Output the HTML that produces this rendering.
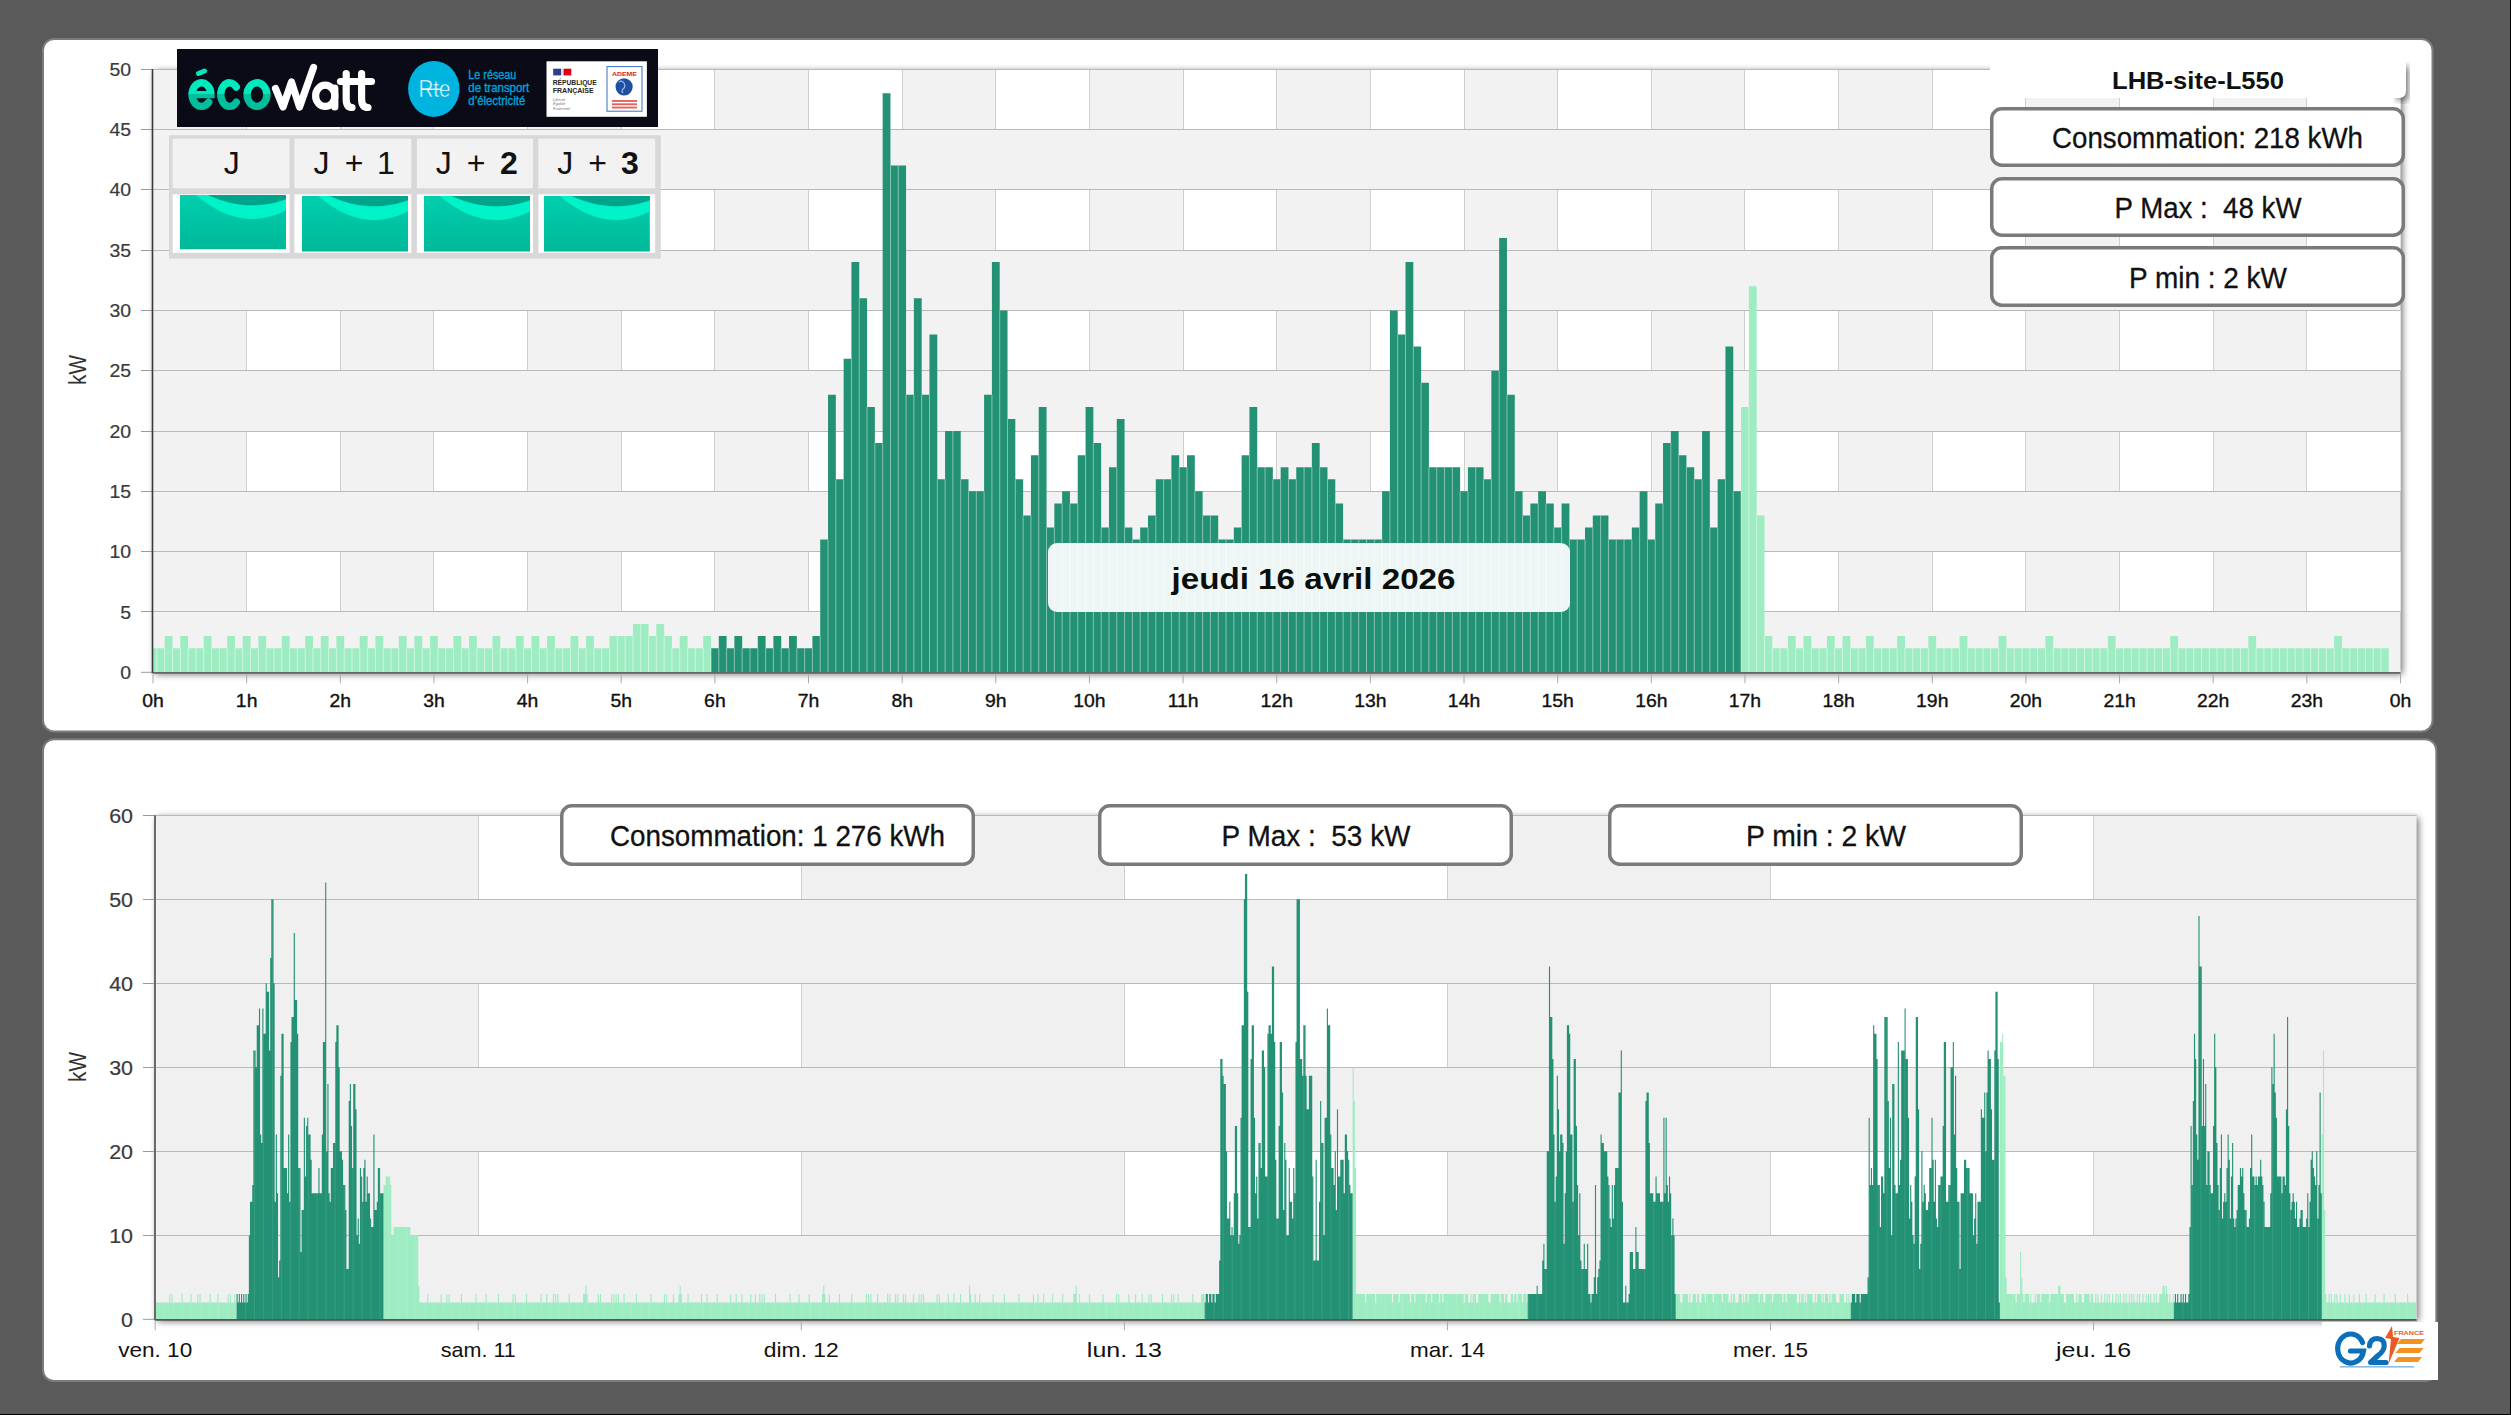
<!DOCTYPE html><html><head><meta charset="utf-8"><style>
html,body{margin:0;padding:0;background:#5a5a5a;width:2511px;height:1415px;overflow:hidden}
svg{position:absolute;left:0;top:0;display:block}
text{font-family:"Liberation Sans", sans-serif}
</style></head><body>
<svg width="2511" height="1415" viewBox="0 0 2511 1415">
<defs>
<filter id="blur4" x="-10%" y="-10%" width="120%" height="120%"><feGaussianBlur stdDeviation="3.5"/></filter>
<linearGradient id="shadowR" x1="0" x2="1" y1="0" y2="0"><stop offset="0" stop-color="#000" stop-opacity="0.30"/><stop offset="1" stop-color="#000" stop-opacity="0"/></linearGradient>
<linearGradient id="shadowB" x1="0" x2="0" y1="0" y2="1"><stop offset="0" stop-color="#000" stop-opacity="0.30"/><stop offset="1" stop-color="#000" stop-opacity="0"/></linearGradient>
<pattern id="stripes" patternUnits="userSpaceOnUse" x="155.2" y="0" width="8.97" height="20"><rect x="0" y="0" width="1" height="20" fill="#fff" fill-opacity="0.1"/></pattern>
<linearGradient id="tile" x1="0" x2="0" y1="0" y2="1"><stop offset="0" stop-color="#00cfae"/><stop offset="1" stop-color="#00b898"/></linearGradient>
</defs>

<rect x="2510" y="0" width="1" height="1415" fill="#000"/>
<rect x="0" y="1414" width="2511" height="1" fill="#000"/>
<rect x="43" y="39" width="2389.5" height="692.5" rx="11" ry="11" fill="#fff" stroke="#7c7c7c" stroke-width="2"/>
<rect x="43" y="739.3" width="2393.3" height="641.7" rx="11" ry="11" fill="#fff" stroke="#7c7c7c" stroke-width="2"/>
<rect x="155.0" y="71.09999999999991" width="2247.5" height="603.2" fill="#000" opacity="0.55" filter="url(#blur4)"/>
<rect x="153.0" y="69.09999999999991" width="2247.5" height="603.2" fill="#f2f2f2"/>
<rect x="246.65" y="551.66" width="93.65" height="60.32" fill="#fff"/>
<rect x="433.94" y="551.66" width="93.65" height="60.32" fill="#fff"/>
<rect x="621.23" y="551.66" width="93.65" height="60.32" fill="#fff"/>
<rect x="808.52" y="551.66" width="93.65" height="60.32" fill="#fff"/>
<rect x="995.81" y="551.66" width="93.65" height="60.32" fill="#fff"/>
<rect x="1183.10" y="551.66" width="93.65" height="60.32" fill="#fff"/>
<rect x="1370.40" y="551.66" width="93.65" height="60.32" fill="#fff"/>
<rect x="1557.69" y="551.66" width="93.65" height="60.32" fill="#fff"/>
<rect x="1744.98" y="551.66" width="93.65" height="60.32" fill="#fff"/>
<rect x="1932.27" y="551.66" width="93.65" height="60.32" fill="#fff"/>
<rect x="2119.56" y="551.66" width="93.65" height="60.32" fill="#fff"/>
<rect x="2306.85" y="551.66" width="93.65" height="60.32" fill="#fff"/>
<line x1="246.5" y1="551.66" x2="246.5" y2="611.98" stroke="#cfcfcf" stroke-width="1"/>
<line x1="340.5" y1="551.66" x2="340.5" y2="611.98" stroke="#cfcfcf" stroke-width="1"/>
<line x1="433.5" y1="551.66" x2="433.5" y2="611.98" stroke="#cfcfcf" stroke-width="1"/>
<line x1="527.5" y1="551.66" x2="527.5" y2="611.98" stroke="#cfcfcf" stroke-width="1"/>
<line x1="621.5" y1="551.66" x2="621.5" y2="611.98" stroke="#cfcfcf" stroke-width="1"/>
<line x1="714.5" y1="551.66" x2="714.5" y2="611.98" stroke="#cfcfcf" stroke-width="1"/>
<line x1="808.5" y1="551.66" x2="808.5" y2="611.98" stroke="#cfcfcf" stroke-width="1"/>
<line x1="902.5" y1="551.66" x2="902.5" y2="611.98" stroke="#cfcfcf" stroke-width="1"/>
<line x1="995.5" y1="551.66" x2="995.5" y2="611.98" stroke="#cfcfcf" stroke-width="1"/>
<line x1="1089.5" y1="551.66" x2="1089.5" y2="611.98" stroke="#cfcfcf" stroke-width="1"/>
<line x1="1183.5" y1="551.66" x2="1183.5" y2="611.98" stroke="#cfcfcf" stroke-width="1"/>
<line x1="1276.5" y1="551.66" x2="1276.5" y2="611.98" stroke="#cfcfcf" stroke-width="1"/>
<line x1="1370.5" y1="551.66" x2="1370.5" y2="611.98" stroke="#cfcfcf" stroke-width="1"/>
<line x1="1464.5" y1="551.66" x2="1464.5" y2="611.98" stroke="#cfcfcf" stroke-width="1"/>
<line x1="1557.5" y1="551.66" x2="1557.5" y2="611.98" stroke="#cfcfcf" stroke-width="1"/>
<line x1="1651.5" y1="551.66" x2="1651.5" y2="611.98" stroke="#cfcfcf" stroke-width="1"/>
<line x1="1744.5" y1="551.66" x2="1744.5" y2="611.98" stroke="#cfcfcf" stroke-width="1"/>
<line x1="1838.5" y1="551.66" x2="1838.5" y2="611.98" stroke="#cfcfcf" stroke-width="1"/>
<line x1="1932.5" y1="551.66" x2="1932.5" y2="611.98" stroke="#cfcfcf" stroke-width="1"/>
<line x1="2025.5" y1="551.66" x2="2025.5" y2="611.98" stroke="#cfcfcf" stroke-width="1"/>
<line x1="2119.5" y1="551.66" x2="2119.5" y2="611.98" stroke="#cfcfcf" stroke-width="1"/>
<line x1="2213.5" y1="551.66" x2="2213.5" y2="611.98" stroke="#cfcfcf" stroke-width="1"/>
<line x1="2306.5" y1="551.66" x2="2306.5" y2="611.98" stroke="#cfcfcf" stroke-width="1"/>
<rect x="246.65" y="431.02" width="93.65" height="60.32" fill="#fff"/>
<rect x="433.94" y="431.02" width="93.65" height="60.32" fill="#fff"/>
<rect x="621.23" y="431.02" width="93.65" height="60.32" fill="#fff"/>
<rect x="808.52" y="431.02" width="93.65" height="60.32" fill="#fff"/>
<rect x="995.81" y="431.02" width="93.65" height="60.32" fill="#fff"/>
<rect x="1183.10" y="431.02" width="93.65" height="60.32" fill="#fff"/>
<rect x="1370.40" y="431.02" width="93.65" height="60.32" fill="#fff"/>
<rect x="1557.69" y="431.02" width="93.65" height="60.32" fill="#fff"/>
<rect x="1744.98" y="431.02" width="93.65" height="60.32" fill="#fff"/>
<rect x="1932.27" y="431.02" width="93.65" height="60.32" fill="#fff"/>
<rect x="2119.56" y="431.02" width="93.65" height="60.32" fill="#fff"/>
<rect x="2306.85" y="431.02" width="93.65" height="60.32" fill="#fff"/>
<line x1="246.5" y1="431.02" x2="246.5" y2="491.34" stroke="#cfcfcf" stroke-width="1"/>
<line x1="340.5" y1="431.02" x2="340.5" y2="491.34" stroke="#cfcfcf" stroke-width="1"/>
<line x1="433.5" y1="431.02" x2="433.5" y2="491.34" stroke="#cfcfcf" stroke-width="1"/>
<line x1="527.5" y1="431.02" x2="527.5" y2="491.34" stroke="#cfcfcf" stroke-width="1"/>
<line x1="621.5" y1="431.02" x2="621.5" y2="491.34" stroke="#cfcfcf" stroke-width="1"/>
<line x1="714.5" y1="431.02" x2="714.5" y2="491.34" stroke="#cfcfcf" stroke-width="1"/>
<line x1="808.5" y1="431.02" x2="808.5" y2="491.34" stroke="#cfcfcf" stroke-width="1"/>
<line x1="902.5" y1="431.02" x2="902.5" y2="491.34" stroke="#cfcfcf" stroke-width="1"/>
<line x1="995.5" y1="431.02" x2="995.5" y2="491.34" stroke="#cfcfcf" stroke-width="1"/>
<line x1="1089.5" y1="431.02" x2="1089.5" y2="491.34" stroke="#cfcfcf" stroke-width="1"/>
<line x1="1183.5" y1="431.02" x2="1183.5" y2="491.34" stroke="#cfcfcf" stroke-width="1"/>
<line x1="1276.5" y1="431.02" x2="1276.5" y2="491.34" stroke="#cfcfcf" stroke-width="1"/>
<line x1="1370.5" y1="431.02" x2="1370.5" y2="491.34" stroke="#cfcfcf" stroke-width="1"/>
<line x1="1464.5" y1="431.02" x2="1464.5" y2="491.34" stroke="#cfcfcf" stroke-width="1"/>
<line x1="1557.5" y1="431.02" x2="1557.5" y2="491.34" stroke="#cfcfcf" stroke-width="1"/>
<line x1="1651.5" y1="431.02" x2="1651.5" y2="491.34" stroke="#cfcfcf" stroke-width="1"/>
<line x1="1744.5" y1="431.02" x2="1744.5" y2="491.34" stroke="#cfcfcf" stroke-width="1"/>
<line x1="1838.5" y1="431.02" x2="1838.5" y2="491.34" stroke="#cfcfcf" stroke-width="1"/>
<line x1="1932.5" y1="431.02" x2="1932.5" y2="491.34" stroke="#cfcfcf" stroke-width="1"/>
<line x1="2025.5" y1="431.02" x2="2025.5" y2="491.34" stroke="#cfcfcf" stroke-width="1"/>
<line x1="2119.5" y1="431.02" x2="2119.5" y2="491.34" stroke="#cfcfcf" stroke-width="1"/>
<line x1="2213.5" y1="431.02" x2="2213.5" y2="491.34" stroke="#cfcfcf" stroke-width="1"/>
<line x1="2306.5" y1="431.02" x2="2306.5" y2="491.34" stroke="#cfcfcf" stroke-width="1"/>
<rect x="246.65" y="310.38" width="93.65" height="60.32" fill="#fff"/>
<rect x="433.94" y="310.38" width="93.65" height="60.32" fill="#fff"/>
<rect x="621.23" y="310.38" width="93.65" height="60.32" fill="#fff"/>
<rect x="808.52" y="310.38" width="93.65" height="60.32" fill="#fff"/>
<rect x="995.81" y="310.38" width="93.65" height="60.32" fill="#fff"/>
<rect x="1183.10" y="310.38" width="93.65" height="60.32" fill="#fff"/>
<rect x="1370.40" y="310.38" width="93.65" height="60.32" fill="#fff"/>
<rect x="1557.69" y="310.38" width="93.65" height="60.32" fill="#fff"/>
<rect x="1744.98" y="310.38" width="93.65" height="60.32" fill="#fff"/>
<rect x="1932.27" y="310.38" width="93.65" height="60.32" fill="#fff"/>
<rect x="2119.56" y="310.38" width="93.65" height="60.32" fill="#fff"/>
<rect x="2306.85" y="310.38" width="93.65" height="60.32" fill="#fff"/>
<line x1="246.5" y1="310.38" x2="246.5" y2="370.70" stroke="#cfcfcf" stroke-width="1"/>
<line x1="340.5" y1="310.38" x2="340.5" y2="370.70" stroke="#cfcfcf" stroke-width="1"/>
<line x1="433.5" y1="310.38" x2="433.5" y2="370.70" stroke="#cfcfcf" stroke-width="1"/>
<line x1="527.5" y1="310.38" x2="527.5" y2="370.70" stroke="#cfcfcf" stroke-width="1"/>
<line x1="621.5" y1="310.38" x2="621.5" y2="370.70" stroke="#cfcfcf" stroke-width="1"/>
<line x1="714.5" y1="310.38" x2="714.5" y2="370.70" stroke="#cfcfcf" stroke-width="1"/>
<line x1="808.5" y1="310.38" x2="808.5" y2="370.70" stroke="#cfcfcf" stroke-width="1"/>
<line x1="902.5" y1="310.38" x2="902.5" y2="370.70" stroke="#cfcfcf" stroke-width="1"/>
<line x1="995.5" y1="310.38" x2="995.5" y2="370.70" stroke="#cfcfcf" stroke-width="1"/>
<line x1="1089.5" y1="310.38" x2="1089.5" y2="370.70" stroke="#cfcfcf" stroke-width="1"/>
<line x1="1183.5" y1="310.38" x2="1183.5" y2="370.70" stroke="#cfcfcf" stroke-width="1"/>
<line x1="1276.5" y1="310.38" x2="1276.5" y2="370.70" stroke="#cfcfcf" stroke-width="1"/>
<line x1="1370.5" y1="310.38" x2="1370.5" y2="370.70" stroke="#cfcfcf" stroke-width="1"/>
<line x1="1464.5" y1="310.38" x2="1464.5" y2="370.70" stroke="#cfcfcf" stroke-width="1"/>
<line x1="1557.5" y1="310.38" x2="1557.5" y2="370.70" stroke="#cfcfcf" stroke-width="1"/>
<line x1="1651.5" y1="310.38" x2="1651.5" y2="370.70" stroke="#cfcfcf" stroke-width="1"/>
<line x1="1744.5" y1="310.38" x2="1744.5" y2="370.70" stroke="#cfcfcf" stroke-width="1"/>
<line x1="1838.5" y1="310.38" x2="1838.5" y2="370.70" stroke="#cfcfcf" stroke-width="1"/>
<line x1="1932.5" y1="310.38" x2="1932.5" y2="370.70" stroke="#cfcfcf" stroke-width="1"/>
<line x1="2025.5" y1="310.38" x2="2025.5" y2="370.70" stroke="#cfcfcf" stroke-width="1"/>
<line x1="2119.5" y1="310.38" x2="2119.5" y2="370.70" stroke="#cfcfcf" stroke-width="1"/>
<line x1="2213.5" y1="310.38" x2="2213.5" y2="370.70" stroke="#cfcfcf" stroke-width="1"/>
<line x1="2306.5" y1="310.38" x2="2306.5" y2="370.70" stroke="#cfcfcf" stroke-width="1"/>
<rect x="246.65" y="189.74" width="93.65" height="60.32" fill="#fff"/>
<rect x="433.94" y="189.74" width="93.65" height="60.32" fill="#fff"/>
<rect x="621.23" y="189.74" width="93.65" height="60.32" fill="#fff"/>
<rect x="808.52" y="189.74" width="93.65" height="60.32" fill="#fff"/>
<rect x="995.81" y="189.74" width="93.65" height="60.32" fill="#fff"/>
<rect x="1183.10" y="189.74" width="93.65" height="60.32" fill="#fff"/>
<rect x="1370.40" y="189.74" width="93.65" height="60.32" fill="#fff"/>
<rect x="1557.69" y="189.74" width="93.65" height="60.32" fill="#fff"/>
<rect x="1744.98" y="189.74" width="93.65" height="60.32" fill="#fff"/>
<rect x="1932.27" y="189.74" width="93.65" height="60.32" fill="#fff"/>
<rect x="2119.56" y="189.74" width="93.65" height="60.32" fill="#fff"/>
<rect x="2306.85" y="189.74" width="93.65" height="60.32" fill="#fff"/>
<line x1="246.5" y1="189.74" x2="246.5" y2="250.06" stroke="#cfcfcf" stroke-width="1"/>
<line x1="340.5" y1="189.74" x2="340.5" y2="250.06" stroke="#cfcfcf" stroke-width="1"/>
<line x1="433.5" y1="189.74" x2="433.5" y2="250.06" stroke="#cfcfcf" stroke-width="1"/>
<line x1="527.5" y1="189.74" x2="527.5" y2="250.06" stroke="#cfcfcf" stroke-width="1"/>
<line x1="621.5" y1="189.74" x2="621.5" y2="250.06" stroke="#cfcfcf" stroke-width="1"/>
<line x1="714.5" y1="189.74" x2="714.5" y2="250.06" stroke="#cfcfcf" stroke-width="1"/>
<line x1="808.5" y1="189.74" x2="808.5" y2="250.06" stroke="#cfcfcf" stroke-width="1"/>
<line x1="902.5" y1="189.74" x2="902.5" y2="250.06" stroke="#cfcfcf" stroke-width="1"/>
<line x1="995.5" y1="189.74" x2="995.5" y2="250.06" stroke="#cfcfcf" stroke-width="1"/>
<line x1="1089.5" y1="189.74" x2="1089.5" y2="250.06" stroke="#cfcfcf" stroke-width="1"/>
<line x1="1183.5" y1="189.74" x2="1183.5" y2="250.06" stroke="#cfcfcf" stroke-width="1"/>
<line x1="1276.5" y1="189.74" x2="1276.5" y2="250.06" stroke="#cfcfcf" stroke-width="1"/>
<line x1="1370.5" y1="189.74" x2="1370.5" y2="250.06" stroke="#cfcfcf" stroke-width="1"/>
<line x1="1464.5" y1="189.74" x2="1464.5" y2="250.06" stroke="#cfcfcf" stroke-width="1"/>
<line x1="1557.5" y1="189.74" x2="1557.5" y2="250.06" stroke="#cfcfcf" stroke-width="1"/>
<line x1="1651.5" y1="189.74" x2="1651.5" y2="250.06" stroke="#cfcfcf" stroke-width="1"/>
<line x1="1744.5" y1="189.74" x2="1744.5" y2="250.06" stroke="#cfcfcf" stroke-width="1"/>
<line x1="1838.5" y1="189.74" x2="1838.5" y2="250.06" stroke="#cfcfcf" stroke-width="1"/>
<line x1="1932.5" y1="189.74" x2="1932.5" y2="250.06" stroke="#cfcfcf" stroke-width="1"/>
<line x1="2025.5" y1="189.74" x2="2025.5" y2="250.06" stroke="#cfcfcf" stroke-width="1"/>
<line x1="2119.5" y1="189.74" x2="2119.5" y2="250.06" stroke="#cfcfcf" stroke-width="1"/>
<line x1="2213.5" y1="189.74" x2="2213.5" y2="250.06" stroke="#cfcfcf" stroke-width="1"/>
<line x1="2306.5" y1="189.74" x2="2306.5" y2="250.06" stroke="#cfcfcf" stroke-width="1"/>
<rect x="246.65" y="69.10" width="93.65" height="60.32" fill="#fff"/>
<rect x="433.94" y="69.10" width="93.65" height="60.32" fill="#fff"/>
<rect x="621.23" y="69.10" width="93.65" height="60.32" fill="#fff"/>
<rect x="808.52" y="69.10" width="93.65" height="60.32" fill="#fff"/>
<rect x="995.81" y="69.10" width="93.65" height="60.32" fill="#fff"/>
<rect x="1183.10" y="69.10" width="93.65" height="60.32" fill="#fff"/>
<rect x="1370.40" y="69.10" width="93.65" height="60.32" fill="#fff"/>
<rect x="1557.69" y="69.10" width="93.65" height="60.32" fill="#fff"/>
<rect x="1744.98" y="69.10" width="93.65" height="60.32" fill="#fff"/>
<rect x="1932.27" y="69.10" width="93.65" height="60.32" fill="#fff"/>
<rect x="2119.56" y="69.10" width="93.65" height="60.32" fill="#fff"/>
<rect x="2306.85" y="69.10" width="93.65" height="60.32" fill="#fff"/>
<line x1="246.5" y1="69.10" x2="246.5" y2="129.42" stroke="#cfcfcf" stroke-width="1"/>
<line x1="340.5" y1="69.10" x2="340.5" y2="129.42" stroke="#cfcfcf" stroke-width="1"/>
<line x1="433.5" y1="69.10" x2="433.5" y2="129.42" stroke="#cfcfcf" stroke-width="1"/>
<line x1="527.5" y1="69.10" x2="527.5" y2="129.42" stroke="#cfcfcf" stroke-width="1"/>
<line x1="621.5" y1="69.10" x2="621.5" y2="129.42" stroke="#cfcfcf" stroke-width="1"/>
<line x1="714.5" y1="69.10" x2="714.5" y2="129.42" stroke="#cfcfcf" stroke-width="1"/>
<line x1="808.5" y1="69.10" x2="808.5" y2="129.42" stroke="#cfcfcf" stroke-width="1"/>
<line x1="902.5" y1="69.10" x2="902.5" y2="129.42" stroke="#cfcfcf" stroke-width="1"/>
<line x1="995.5" y1="69.10" x2="995.5" y2="129.42" stroke="#cfcfcf" stroke-width="1"/>
<line x1="1089.5" y1="69.10" x2="1089.5" y2="129.42" stroke="#cfcfcf" stroke-width="1"/>
<line x1="1183.5" y1="69.10" x2="1183.5" y2="129.42" stroke="#cfcfcf" stroke-width="1"/>
<line x1="1276.5" y1="69.10" x2="1276.5" y2="129.42" stroke="#cfcfcf" stroke-width="1"/>
<line x1="1370.5" y1="69.10" x2="1370.5" y2="129.42" stroke="#cfcfcf" stroke-width="1"/>
<line x1="1464.5" y1="69.10" x2="1464.5" y2="129.42" stroke="#cfcfcf" stroke-width="1"/>
<line x1="1557.5" y1="69.10" x2="1557.5" y2="129.42" stroke="#cfcfcf" stroke-width="1"/>
<line x1="1651.5" y1="69.10" x2="1651.5" y2="129.42" stroke="#cfcfcf" stroke-width="1"/>
<line x1="1744.5" y1="69.10" x2="1744.5" y2="129.42" stroke="#cfcfcf" stroke-width="1"/>
<line x1="1838.5" y1="69.10" x2="1838.5" y2="129.42" stroke="#cfcfcf" stroke-width="1"/>
<line x1="1932.5" y1="69.10" x2="1932.5" y2="129.42" stroke="#cfcfcf" stroke-width="1"/>
<line x1="2025.5" y1="69.10" x2="2025.5" y2="129.42" stroke="#cfcfcf" stroke-width="1"/>
<line x1="2119.5" y1="69.10" x2="2119.5" y2="129.42" stroke="#cfcfcf" stroke-width="1"/>
<line x1="2213.5" y1="69.10" x2="2213.5" y2="129.42" stroke="#cfcfcf" stroke-width="1"/>
<line x1="2306.5" y1="69.10" x2="2306.5" y2="129.42" stroke="#cfcfcf" stroke-width="1"/>
<line x1="153.0" y1="611.5" x2="2400.5" y2="611.5" stroke="#b9b9b9" stroke-width="1"/>
<line x1="141" y1="611.5" x2="153.0" y2="611.5" stroke="#999" stroke-width="1"/>
<line x1="153.0" y1="551.5" x2="2400.5" y2="551.5" stroke="#b9b9b9" stroke-width="1"/>
<line x1="141" y1="551.5" x2="153.0" y2="551.5" stroke="#999" stroke-width="1"/>
<line x1="153.0" y1="491.5" x2="2400.5" y2="491.5" stroke="#b9b9b9" stroke-width="1"/>
<line x1="141" y1="491.5" x2="153.0" y2="491.5" stroke="#999" stroke-width="1"/>
<line x1="153.0" y1="431.5" x2="2400.5" y2="431.5" stroke="#b9b9b9" stroke-width="1"/>
<line x1="141" y1="431.5" x2="153.0" y2="431.5" stroke="#999" stroke-width="1"/>
<line x1="153.0" y1="370.5" x2="2400.5" y2="370.5" stroke="#b9b9b9" stroke-width="1"/>
<line x1="141" y1="370.5" x2="153.0" y2="370.5" stroke="#999" stroke-width="1"/>
<line x1="153.0" y1="310.5" x2="2400.5" y2="310.5" stroke="#b9b9b9" stroke-width="1"/>
<line x1="141" y1="310.5" x2="153.0" y2="310.5" stroke="#999" stroke-width="1"/>
<line x1="153.0" y1="250.5" x2="2400.5" y2="250.5" stroke="#b9b9b9" stroke-width="1"/>
<line x1="141" y1="250.5" x2="153.0" y2="250.5" stroke="#999" stroke-width="1"/>
<line x1="153.0" y1="189.5" x2="2400.5" y2="189.5" stroke="#b9b9b9" stroke-width="1"/>
<line x1="141" y1="189.5" x2="153.0" y2="189.5" stroke="#999" stroke-width="1"/>
<line x1="153.0" y1="129.5" x2="2400.5" y2="129.5" stroke="#b9b9b9" stroke-width="1"/>
<line x1="141" y1="129.5" x2="153.0" y2="129.5" stroke="#999" stroke-width="1"/>
<line x1="153.0" y1="69.5" x2="2400.5" y2="69.5" stroke="#b9b9b9" stroke-width="1"/>
<line x1="141" y1="69.5" x2="153.0" y2="69.5" stroke="#999" stroke-width="1"/>
<line x1="141" y1="672.3" x2="153.0" y2="672.3" stroke="#999" stroke-width="1"/>
<path d="M153.00,672.30V648.17H156.90V672.30ZM156.90,672.30V648.17H164.71V672.30ZM164.71,672.30V636.11H172.51V672.30ZM172.51,672.30V648.17H180.31V672.30ZM180.31,672.30V636.11H188.12V672.30ZM188.12,672.30V648.17H195.92V672.30ZM195.92,672.30V648.17H203.72V672.30ZM203.72,672.30V636.11H211.53V672.30ZM211.53,672.30V648.17H219.33V672.30ZM219.33,672.30V648.17H227.14V672.30ZM227.14,672.30V636.11H234.94V672.30ZM234.94,672.30V648.17H242.74V672.30ZM242.74,672.30V636.11H250.55V672.30ZM250.55,672.30V648.17H258.35V672.30ZM258.35,672.30V636.11H266.16V672.30ZM266.16,672.30V648.17H273.96V672.30ZM273.96,672.30V648.17H281.76V672.30ZM281.76,672.30V636.11H289.57V672.30ZM289.57,672.30V648.17H297.37V672.30ZM297.37,672.30V648.17H305.17V672.30ZM305.17,672.30V636.11H312.98V672.30ZM312.98,672.30V648.17H320.78V672.30ZM320.78,672.30V636.11H328.59V672.30ZM328.59,672.30V648.17H336.39V672.30ZM336.39,672.30V636.11H344.19V672.30ZM344.19,672.30V648.17H352.00V672.30ZM352.00,672.30V648.17H359.80V672.30ZM359.80,672.30V636.11H367.61V672.30ZM367.61,672.30V648.17H375.41V672.30ZM375.41,672.30V636.11H383.21V672.30ZM383.21,672.30V648.17H391.02V672.30ZM391.02,672.30V648.17H398.82V672.30ZM398.82,672.30V636.11H406.62V672.30ZM406.62,672.30V648.17H414.43V672.30ZM414.43,672.30V636.11H422.23V672.30ZM422.23,672.30V648.17H430.04V672.30ZM430.04,672.30V636.11H437.84V672.30ZM437.84,672.30V648.17H445.64V672.30ZM445.64,672.30V648.17H453.45V672.30ZM453.45,672.30V636.11H461.25V672.30ZM461.25,672.30V648.17H469.05V672.30ZM469.05,672.30V636.11H476.86V672.30ZM476.86,672.30V648.17H484.66V672.30ZM484.66,672.30V648.17H492.47V672.30ZM492.47,672.30V636.11H500.27V672.30ZM500.27,672.30V648.17H508.07V672.30ZM508.07,672.30V648.17H515.88V672.30ZM515.88,672.30V636.11H523.68V672.30ZM523.68,672.30V648.17H531.49V672.30ZM531.49,672.30V636.11H539.29V672.30ZM539.29,672.30V648.17H547.09V672.30ZM547.09,672.30V636.11H554.90V672.30ZM554.90,672.30V648.17H562.70V672.30ZM562.70,672.30V648.17H570.50V672.30ZM570.50,672.30V636.11H578.31V672.30ZM578.31,672.30V648.17H586.11V672.30ZM586.11,672.30V636.11H593.92V672.30ZM593.92,672.30V648.17H601.72V672.30ZM601.72,672.30V648.17H609.52V672.30ZM609.52,672.30V636.11H617.33V672.30ZM617.33,672.30V636.11H625.13V672.30ZM625.13,672.30V636.11H632.93V672.30ZM632.93,672.30V624.04H640.74V672.30ZM640.74,672.30V624.04H648.54V672.30ZM648.54,672.30V636.11H656.35V672.30ZM656.35,672.30V624.04H664.15V672.30ZM664.15,672.30V636.11H671.95V672.30ZM671.95,672.30V648.17H679.76V672.30ZM679.76,672.30V636.11H687.56V672.30ZM687.56,672.30V648.17H695.37V672.30ZM695.37,672.30V648.17H703.17V672.30ZM703.17,672.30V636.11H710.97V672.30ZM1741.08,672.30V406.89H1748.88V672.30ZM1748.88,672.30V286.25H1756.68V672.30ZM1756.68,672.30V515.47H1764.49V672.30ZM1764.49,672.30V636.11H1772.29V672.30ZM1772.29,672.30V648.17H1780.10V672.30ZM1780.10,672.30V648.17H1787.90V672.30ZM1787.90,672.30V636.11H1795.70V672.30ZM1795.70,672.30V648.17H1803.51V672.30ZM1803.51,672.30V636.11H1811.31V672.30ZM1811.31,672.30V648.17H1819.12V672.30ZM1819.12,672.30V648.17H1826.92V672.30ZM1826.92,672.30V636.11H1834.72V672.30ZM1834.72,672.30V648.17H1842.53V672.30ZM1842.53,672.30V636.11H1850.33V672.30ZM1850.33,672.30V648.17H1858.13V672.30ZM1858.13,672.30V648.17H1865.94V672.30ZM1865.94,672.30V636.11H1873.74V672.30ZM1873.74,672.30V648.17H1881.55V672.30ZM1881.55,672.30V648.17H1889.35V672.30ZM1889.35,672.30V648.17H1897.15V672.30ZM1897.15,672.30V636.11H1904.96V672.30ZM1904.96,672.30V648.17H1912.76V672.30ZM1912.76,672.30V648.17H1920.57V672.30ZM1920.57,672.30V648.17H1928.37V672.30ZM1928.37,672.30V636.11H1936.17V672.30ZM1936.17,672.30V648.17H1943.98V672.30ZM1943.98,672.30V648.17H1951.78V672.30ZM1951.78,672.30V648.17H1959.58V672.30ZM1959.58,672.30V636.11H1967.39V672.30ZM1967.39,672.30V648.17H1975.19V672.30ZM1975.19,672.30V648.17H1983.00V672.30ZM1983.00,672.30V648.17H1990.80V672.30ZM1990.80,672.30V648.17H1998.60V672.30ZM1998.60,672.30V636.11H2006.41V672.30ZM2006.41,672.30V648.17H2014.21V672.30ZM2014.21,672.30V648.17H2022.01V672.30ZM2022.01,672.30V648.17H2029.82V672.30ZM2029.82,672.30V648.17H2037.62V672.30ZM2037.62,672.30V648.17H2045.43V672.30ZM2045.43,672.30V636.11H2053.23V672.30ZM2053.23,672.30V648.17H2061.03V672.30ZM2061.03,672.30V648.17H2068.84V672.30ZM2068.84,672.30V648.17H2076.64V672.30ZM2076.64,672.30V648.17H2084.45V672.30ZM2084.45,672.30V648.17H2092.25V672.30ZM2092.25,672.30V648.17H2100.05V672.30ZM2100.05,672.30V648.17H2107.86V672.30ZM2107.86,672.30V636.11H2115.66V672.30ZM2115.66,672.30V648.17H2123.46V672.30ZM2123.46,672.30V648.17H2131.27V672.30ZM2131.27,672.30V648.17H2139.07V672.30ZM2139.07,672.30V648.17H2146.88V672.30ZM2146.88,672.30V648.17H2154.68V672.30ZM2154.68,672.30V648.17H2162.48V672.30ZM2162.48,672.30V648.17H2170.29V672.30ZM2170.29,672.30V636.11H2178.09V672.30ZM2178.09,672.30V648.17H2185.89V672.30ZM2185.89,672.30V648.17H2193.70V672.30ZM2193.70,672.30V648.17H2201.50V672.30ZM2201.50,672.30V648.17H2209.31V672.30ZM2209.31,672.30V648.17H2217.11V672.30ZM2217.11,672.30V648.17H2224.91V672.30ZM2224.91,672.30V648.17H2232.72V672.30ZM2232.72,672.30V648.17H2240.52V672.30ZM2240.52,672.30V648.17H2248.33V672.30ZM2248.33,672.30V636.11H2256.13V672.30ZM2256.13,672.30V648.17H2263.93V672.30ZM2263.93,672.30V648.17H2271.74V672.30ZM2271.74,672.30V648.17H2279.54V672.30ZM2279.54,672.30V648.17H2287.34V672.30ZM2287.34,672.30V648.17H2295.15V672.30ZM2295.15,672.30V648.17H2302.95V672.30ZM2302.95,672.30V648.17H2310.76V672.30ZM2310.76,672.30V648.17H2318.56V672.30ZM2318.56,672.30V648.17H2326.36V672.30ZM2326.36,672.30V648.17H2334.17V672.30ZM2334.17,672.30V636.11H2341.97V672.30ZM2341.97,672.30V648.17H2349.78V672.30ZM2349.78,672.30V648.17H2357.58V672.30ZM2357.58,672.30V648.17H2365.38V672.30ZM2365.38,672.30V648.17H2373.19V672.30ZM2373.19,672.30V648.17H2380.99V672.30ZM2380.99,672.30V648.17H2388.79V672.30Z" fill="#9eecc1"/>
<path d="M710.97,672.30V648.17H718.78V672.30ZM718.78,672.30V636.11H726.58V672.30ZM726.58,672.30V648.17H734.38V672.30ZM734.38,672.30V636.11H742.19V672.30ZM742.19,672.30V648.17H749.99V672.30ZM749.99,672.30V648.17H757.80V672.30ZM757.80,672.30V636.11H765.60V672.30ZM765.60,672.30V648.17H773.40V672.30ZM773.40,672.30V636.11H781.21V672.30ZM781.21,672.30V648.17H789.01V672.30ZM789.01,672.30V636.11H796.82V672.30ZM796.82,672.30V648.17H804.62V672.30ZM804.62,672.30V648.17H812.42V672.30ZM812.42,672.30V636.11H820.23V672.30ZM820.23,672.30V539.60H828.03V672.30ZM828.03,672.30V394.83H835.83V672.30ZM835.83,672.30V479.28H843.64V672.30ZM843.64,672.30V358.64H851.44V672.30ZM851.44,672.30V262.12H859.25V672.30ZM859.25,672.30V298.32H867.05V672.30ZM867.05,672.30V406.89H874.85V672.30ZM874.85,672.30V443.08H882.66V672.30ZM882.66,672.30V93.23H890.46V672.30ZM890.46,672.30V165.61H898.26V672.30ZM898.26,672.30V165.61H906.07V672.30ZM906.07,672.30V394.83H913.87V672.30ZM913.87,672.30V298.32H921.68V672.30ZM921.68,672.30V394.83H929.48V672.30ZM929.48,672.30V334.51H937.28V672.30ZM937.28,672.30V479.28H945.09V672.30ZM945.09,672.30V431.02H952.89V672.30ZM952.89,672.30V431.02H960.70V672.30ZM960.70,672.30V479.28H968.50V672.30ZM968.50,672.30V491.34H976.30V672.30ZM976.30,672.30V491.34H984.11V672.30ZM984.11,672.30V394.83H991.91V672.30ZM991.91,672.30V262.12H999.71V672.30ZM999.71,672.30V310.38H1007.52V672.30ZM1007.52,672.30V418.96H1015.32V672.30ZM1015.32,672.30V479.28H1023.13V672.30ZM1023.13,672.30V515.47H1030.93V672.30ZM1030.93,672.30V455.15H1038.73V672.30ZM1038.73,672.30V406.89H1046.54V672.30ZM1046.54,672.30V527.53H1054.34V672.30ZM1054.34,672.30V503.40H1062.14V672.30ZM1062.14,672.30V491.34H1069.95V672.30ZM1069.95,672.30V503.40H1077.75V672.30ZM1077.75,672.30V455.15H1085.56V672.30ZM1085.56,672.30V406.89H1093.36V672.30ZM1093.36,672.30V443.08H1101.16V672.30ZM1101.16,672.30V527.53H1108.97V672.30ZM1108.97,672.30V467.21H1116.77V672.30ZM1116.77,672.30V418.96H1124.58V672.30ZM1124.58,672.30V527.53H1132.38V672.30ZM1132.38,672.30V539.60H1140.18V672.30ZM1140.18,672.30V527.53H1147.99V672.30ZM1147.99,672.30V515.47H1155.79V672.30ZM1155.79,672.30V479.28H1163.59V672.30ZM1163.59,672.30V479.28H1171.40V672.30ZM1171.40,672.30V455.15H1179.20V672.30ZM1179.20,672.30V467.21H1187.01V672.30ZM1187.01,672.30V455.15H1194.81V672.30ZM1194.81,672.30V491.34H1202.61V672.30ZM1202.61,672.30V515.47H1210.42V672.30ZM1210.42,672.30V515.47H1218.22V672.30ZM1218.22,672.30V539.60H1226.03V672.30ZM1226.03,672.30V539.60H1233.83V672.30ZM1233.83,672.30V527.53H1241.63V672.30ZM1241.63,672.30V455.15H1249.44V672.30ZM1249.44,672.30V406.89H1257.24V672.30ZM1257.24,672.30V467.21H1265.04V672.30ZM1265.04,672.30V467.21H1272.85V672.30ZM1272.85,672.30V479.28H1280.65V672.30ZM1280.65,672.30V467.21H1288.46V672.30ZM1288.46,672.30V479.28H1296.26V672.30ZM1296.26,672.30V467.21H1304.06V672.30ZM1304.06,672.30V467.21H1311.87V672.30ZM1311.87,672.30V443.08H1319.67V672.30ZM1319.67,672.30V467.21H1327.47V672.30ZM1327.47,672.30V479.28H1335.28V672.30ZM1335.28,672.30V503.40H1343.08V672.30ZM1343.08,672.30V539.60H1350.89V672.30ZM1350.89,672.30V539.60H1358.69V672.30ZM1358.69,672.30V539.60H1366.49V672.30ZM1366.49,672.30V539.60H1374.30V672.30ZM1374.30,672.30V539.60H1382.10V672.30ZM1382.10,672.30V491.34H1389.91V672.30ZM1389.91,672.30V310.38H1397.71V672.30ZM1397.71,672.30V334.51H1405.51V672.30ZM1405.51,672.30V262.12H1413.32V672.30ZM1413.32,672.30V346.57H1421.12V672.30ZM1421.12,672.30V382.76H1428.92V672.30ZM1428.92,672.30V467.21H1436.73V672.30ZM1436.73,672.30V467.21H1444.53V672.30ZM1444.53,672.30V467.21H1452.34V672.30ZM1452.34,672.30V467.21H1460.14V672.30ZM1460.14,672.30V491.34H1467.94V672.30ZM1467.94,672.30V467.21H1475.75V672.30ZM1475.75,672.30V467.21H1483.55V672.30ZM1483.55,672.30V479.28H1491.36V672.30ZM1491.36,672.30V370.70H1499.16V672.30ZM1499.16,672.30V238.00H1506.96V672.30ZM1506.96,672.30V394.83H1514.77V672.30ZM1514.77,672.30V491.34H1522.57V672.30ZM1522.57,672.30V515.47H1530.37V672.30ZM1530.37,672.30V503.40H1538.18V672.30ZM1538.18,672.30V491.34H1545.98V672.30ZM1545.98,672.30V503.40H1553.79V672.30ZM1553.79,672.30V527.53H1561.59V672.30ZM1561.59,672.30V503.40H1569.39V672.30ZM1569.39,672.30V539.60H1577.20V672.30ZM1577.20,672.30V539.60H1585.00V672.30ZM1585.00,672.30V527.53H1592.80V672.30ZM1592.80,672.30V515.47H1600.61V672.30ZM1600.61,672.30V515.47H1608.41V672.30ZM1608.41,672.30V539.60H1616.22V672.30ZM1616.22,672.30V539.60H1624.02V672.30ZM1624.02,672.30V539.60H1631.82V672.30ZM1631.82,672.30V527.53H1639.63V672.30ZM1639.63,672.30V491.34H1647.43V672.30ZM1647.43,672.30V539.60H1655.24V672.30ZM1655.24,672.30V503.40H1663.04V672.30ZM1663.04,672.30V443.08H1670.84V672.30ZM1670.84,672.30V431.02H1678.65V672.30ZM1678.65,672.30V455.15H1686.45V672.30ZM1686.45,672.30V467.21H1694.25V672.30ZM1694.25,672.30V479.28H1702.06V672.30ZM1702.06,672.30V431.02H1709.86V672.30ZM1709.86,672.30V527.53H1717.67V672.30ZM1717.67,672.30V479.28H1725.47V672.30ZM1725.47,672.30V346.57H1733.27V672.30ZM1733.27,672.30V491.34H1741.08V672.30Z" fill="#239173"/>
<rect x="156.40" y="648.17" width="1" height="24.13" fill="#fff" opacity="0.5"/>
<rect x="164.21" y="648.17" width="1" height="24.13" fill="#fff" opacity="0.5"/>
<rect x="172.01" y="648.17" width="1" height="24.13" fill="#fff" opacity="0.5"/>
<rect x="179.81" y="648.17" width="1" height="24.13" fill="#fff" opacity="0.5"/>
<rect x="187.62" y="648.17" width="1" height="24.13" fill="#fff" opacity="0.5"/>
<rect x="195.42" y="648.17" width="1" height="24.13" fill="#fff" opacity="0.5"/>
<rect x="203.22" y="648.17" width="1" height="24.13" fill="#fff" opacity="0.5"/>
<rect x="211.03" y="648.17" width="1" height="24.13" fill="#fff" opacity="0.5"/>
<rect x="218.83" y="648.17" width="1" height="24.13" fill="#fff" opacity="0.5"/>
<rect x="226.64" y="648.17" width="1" height="24.13" fill="#fff" opacity="0.5"/>
<rect x="234.44" y="648.17" width="1" height="24.13" fill="#fff" opacity="0.5"/>
<rect x="242.24" y="648.17" width="1" height="24.13" fill="#fff" opacity="0.5"/>
<rect x="250.05" y="648.17" width="1" height="24.13" fill="#fff" opacity="0.5"/>
<rect x="257.85" y="648.17" width="1" height="24.13" fill="#fff" opacity="0.5"/>
<rect x="265.66" y="648.17" width="1" height="24.13" fill="#fff" opacity="0.5"/>
<rect x="273.46" y="648.17" width="1" height="24.13" fill="#fff" opacity="0.5"/>
<rect x="281.26" y="648.17" width="1" height="24.13" fill="#fff" opacity="0.5"/>
<rect x="289.07" y="648.17" width="1" height="24.13" fill="#fff" opacity="0.5"/>
<rect x="296.87" y="648.17" width="1" height="24.13" fill="#fff" opacity="0.5"/>
<rect x="304.67" y="648.17" width="1" height="24.13" fill="#fff" opacity="0.5"/>
<rect x="312.48" y="648.17" width="1" height="24.13" fill="#fff" opacity="0.5"/>
<rect x="320.28" y="648.17" width="1" height="24.13" fill="#fff" opacity="0.5"/>
<rect x="328.09" y="648.17" width="1" height="24.13" fill="#fff" opacity="0.5"/>
<rect x="335.89" y="648.17" width="1" height="24.13" fill="#fff" opacity="0.5"/>
<rect x="343.69" y="648.17" width="1" height="24.13" fill="#fff" opacity="0.5"/>
<rect x="351.50" y="648.17" width="1" height="24.13" fill="#fff" opacity="0.5"/>
<rect x="359.30" y="648.17" width="1" height="24.13" fill="#fff" opacity="0.5"/>
<rect x="367.11" y="648.17" width="1" height="24.13" fill="#fff" opacity="0.5"/>
<rect x="374.91" y="648.17" width="1" height="24.13" fill="#fff" opacity="0.5"/>
<rect x="382.71" y="648.17" width="1" height="24.13" fill="#fff" opacity="0.5"/>
<rect x="390.52" y="648.17" width="1" height="24.13" fill="#fff" opacity="0.5"/>
<rect x="398.32" y="648.17" width="1" height="24.13" fill="#fff" opacity="0.5"/>
<rect x="406.12" y="648.17" width="1" height="24.13" fill="#fff" opacity="0.5"/>
<rect x="413.93" y="648.17" width="1" height="24.13" fill="#fff" opacity="0.5"/>
<rect x="421.73" y="648.17" width="1" height="24.13" fill="#fff" opacity="0.5"/>
<rect x="429.54" y="648.17" width="1" height="24.13" fill="#fff" opacity="0.5"/>
<rect x="437.34" y="648.17" width="1" height="24.13" fill="#fff" opacity="0.5"/>
<rect x="445.14" y="648.17" width="1" height="24.13" fill="#fff" opacity="0.5"/>
<rect x="452.95" y="648.17" width="1" height="24.13" fill="#fff" opacity="0.5"/>
<rect x="460.75" y="648.17" width="1" height="24.13" fill="#fff" opacity="0.5"/>
<rect x="468.55" y="648.17" width="1" height="24.13" fill="#fff" opacity="0.5"/>
<rect x="476.36" y="648.17" width="1" height="24.13" fill="#fff" opacity="0.5"/>
<rect x="484.16" y="648.17" width="1" height="24.13" fill="#fff" opacity="0.5"/>
<rect x="491.97" y="648.17" width="1" height="24.13" fill="#fff" opacity="0.5"/>
<rect x="499.77" y="648.17" width="1" height="24.13" fill="#fff" opacity="0.5"/>
<rect x="507.57" y="648.17" width="1" height="24.13" fill="#fff" opacity="0.5"/>
<rect x="515.38" y="648.17" width="1" height="24.13" fill="#fff" opacity="0.5"/>
<rect x="523.18" y="648.17" width="1" height="24.13" fill="#fff" opacity="0.5"/>
<rect x="530.99" y="648.17" width="1" height="24.13" fill="#fff" opacity="0.5"/>
<rect x="538.79" y="648.17" width="1" height="24.13" fill="#fff" opacity="0.5"/>
<rect x="546.59" y="648.17" width="1" height="24.13" fill="#fff" opacity="0.5"/>
<rect x="554.40" y="648.17" width="1" height="24.13" fill="#fff" opacity="0.5"/>
<rect x="562.20" y="648.17" width="1" height="24.13" fill="#fff" opacity="0.5"/>
<rect x="570.00" y="648.17" width="1" height="24.13" fill="#fff" opacity="0.5"/>
<rect x="577.81" y="648.17" width="1" height="24.13" fill="#fff" opacity="0.5"/>
<rect x="585.61" y="648.17" width="1" height="24.13" fill="#fff" opacity="0.5"/>
<rect x="593.42" y="648.17" width="1" height="24.13" fill="#fff" opacity="0.5"/>
<rect x="601.22" y="648.17" width="1" height="24.13" fill="#fff" opacity="0.5"/>
<rect x="609.02" y="648.17" width="1" height="24.13" fill="#fff" opacity="0.5"/>
<rect x="616.83" y="636.11" width="1" height="36.19" fill="#fff" opacity="0.5"/>
<rect x="624.63" y="636.11" width="1" height="36.19" fill="#fff" opacity="0.5"/>
<rect x="632.43" y="636.11" width="1" height="36.19" fill="#fff" opacity="0.5"/>
<rect x="640.24" y="624.04" width="1" height="48.26" fill="#fff" opacity="0.5"/>
<rect x="648.04" y="636.11" width="1" height="36.19" fill="#fff" opacity="0.5"/>
<rect x="655.85" y="636.11" width="1" height="36.19" fill="#fff" opacity="0.5"/>
<rect x="663.65" y="636.11" width="1" height="36.19" fill="#fff" opacity="0.5"/>
<rect x="671.45" y="648.17" width="1" height="24.13" fill="#fff" opacity="0.5"/>
<rect x="679.26" y="648.17" width="1" height="24.13" fill="#fff" opacity="0.5"/>
<rect x="687.06" y="648.17" width="1" height="24.13" fill="#fff" opacity="0.5"/>
<rect x="694.87" y="648.17" width="1" height="24.13" fill="#fff" opacity="0.5"/>
<rect x="702.67" y="648.17" width="1" height="24.13" fill="#fff" opacity="0.5"/>
<rect x="710.47" y="648.17" width="1" height="24.13" fill="#fff" opacity="0.5"/>
<rect x="718.28" y="648.17" width="1" height="24.13" fill="#fff" opacity="0.45"/>
<rect x="726.08" y="648.17" width="1" height="24.13" fill="#fff" opacity="0.45"/>
<rect x="733.88" y="648.17" width="1" height="24.13" fill="#fff" opacity="0.45"/>
<rect x="741.69" y="648.17" width="1" height="24.13" fill="#fff" opacity="0.45"/>
<rect x="749.49" y="648.17" width="1" height="24.13" fill="#fff" opacity="0.45"/>
<rect x="757.30" y="648.17" width="1" height="24.13" fill="#fff" opacity="0.45"/>
<rect x="765.10" y="648.17" width="1" height="24.13" fill="#fff" opacity="0.45"/>
<rect x="772.90" y="648.17" width="1" height="24.13" fill="#fff" opacity="0.45"/>
<rect x="780.71" y="648.17" width="1" height="24.13" fill="#fff" opacity="0.45"/>
<rect x="788.51" y="648.17" width="1" height="24.13" fill="#fff" opacity="0.45"/>
<rect x="796.32" y="648.17" width="1" height="24.13" fill="#fff" opacity="0.45"/>
<rect x="804.12" y="648.17" width="1" height="24.13" fill="#fff" opacity="0.45"/>
<rect x="811.92" y="648.17" width="1" height="24.13" fill="#fff" opacity="0.45"/>
<rect x="819.73" y="636.11" width="1" height="36.19" fill="#fff" opacity="0.45"/>
<rect x="827.53" y="539.60" width="1" height="132.70" fill="#fff" opacity="0.45"/>
<rect x="835.33" y="479.28" width="1" height="193.02" fill="#fff" opacity="0.45"/>
<rect x="843.14" y="479.28" width="1" height="193.02" fill="#fff" opacity="0.45"/>
<rect x="850.94" y="358.64" width="1" height="313.66" fill="#fff" opacity="0.45"/>
<rect x="858.75" y="298.32" width="1" height="373.98" fill="#fff" opacity="0.45"/>
<rect x="866.55" y="406.89" width="1" height="265.41" fill="#fff" opacity="0.45"/>
<rect x="874.35" y="443.08" width="1" height="229.22" fill="#fff" opacity="0.45"/>
<rect x="882.16" y="443.08" width="1" height="229.22" fill="#fff" opacity="0.45"/>
<rect x="889.96" y="165.61" width="1" height="506.69" fill="#fff" opacity="0.45"/>
<rect x="897.76" y="165.61" width="1" height="506.69" fill="#fff" opacity="0.45"/>
<rect x="905.57" y="394.83" width="1" height="277.47" fill="#fff" opacity="0.45"/>
<rect x="913.37" y="394.83" width="1" height="277.47" fill="#fff" opacity="0.45"/>
<rect x="921.18" y="394.83" width="1" height="277.47" fill="#fff" opacity="0.45"/>
<rect x="928.98" y="394.83" width="1" height="277.47" fill="#fff" opacity="0.45"/>
<rect x="936.78" y="479.28" width="1" height="193.02" fill="#fff" opacity="0.45"/>
<rect x="944.59" y="479.28" width="1" height="193.02" fill="#fff" opacity="0.45"/>
<rect x="952.39" y="431.02" width="1" height="241.28" fill="#fff" opacity="0.45"/>
<rect x="960.20" y="479.28" width="1" height="193.02" fill="#fff" opacity="0.45"/>
<rect x="968.00" y="491.34" width="1" height="180.96" fill="#fff" opacity="0.45"/>
<rect x="975.80" y="491.34" width="1" height="180.96" fill="#fff" opacity="0.45"/>
<rect x="983.61" y="491.34" width="1" height="180.96" fill="#fff" opacity="0.45"/>
<rect x="991.41" y="394.83" width="1" height="277.47" fill="#fff" opacity="0.45"/>
<rect x="999.21" y="310.38" width="1" height="361.92" fill="#fff" opacity="0.45"/>
<rect x="1007.02" y="418.96" width="1" height="253.34" fill="#fff" opacity="0.45"/>
<rect x="1014.82" y="479.28" width="1" height="193.02" fill="#fff" opacity="0.45"/>
<rect x="1022.63" y="515.47" width="1" height="156.83" fill="#fff" opacity="0.45"/>
<rect x="1030.43" y="515.47" width="1" height="156.83" fill="#fff" opacity="0.45"/>
<rect x="1038.23" y="455.15" width="1" height="217.15" fill="#fff" opacity="0.45"/>
<rect x="1046.04" y="527.53" width="1" height="144.77" fill="#fff" opacity="0.45"/>
<rect x="1053.84" y="527.53" width="1" height="144.77" fill="#fff" opacity="0.45"/>
<rect x="1061.64" y="503.40" width="1" height="168.90" fill="#fff" opacity="0.45"/>
<rect x="1069.45" y="503.40" width="1" height="168.90" fill="#fff" opacity="0.45"/>
<rect x="1077.25" y="503.40" width="1" height="168.90" fill="#fff" opacity="0.45"/>
<rect x="1085.06" y="455.15" width="1" height="217.15" fill="#fff" opacity="0.45"/>
<rect x="1092.86" y="443.08" width="1" height="229.22" fill="#fff" opacity="0.45"/>
<rect x="1100.66" y="527.53" width="1" height="144.77" fill="#fff" opacity="0.45"/>
<rect x="1108.47" y="527.53" width="1" height="144.77" fill="#fff" opacity="0.45"/>
<rect x="1116.27" y="467.21" width="1" height="205.09" fill="#fff" opacity="0.45"/>
<rect x="1124.08" y="527.53" width="1" height="144.77" fill="#fff" opacity="0.45"/>
<rect x="1131.88" y="539.60" width="1" height="132.70" fill="#fff" opacity="0.45"/>
<rect x="1139.68" y="539.60" width="1" height="132.70" fill="#fff" opacity="0.45"/>
<rect x="1147.49" y="527.53" width="1" height="144.77" fill="#fff" opacity="0.45"/>
<rect x="1155.29" y="515.47" width="1" height="156.83" fill="#fff" opacity="0.45"/>
<rect x="1163.09" y="479.28" width="1" height="193.02" fill="#fff" opacity="0.45"/>
<rect x="1170.90" y="479.28" width="1" height="193.02" fill="#fff" opacity="0.45"/>
<rect x="1178.70" y="467.21" width="1" height="205.09" fill="#fff" opacity="0.45"/>
<rect x="1186.51" y="467.21" width="1" height="205.09" fill="#fff" opacity="0.45"/>
<rect x="1194.31" y="491.34" width="1" height="180.96" fill="#fff" opacity="0.45"/>
<rect x="1202.11" y="515.47" width="1" height="156.83" fill="#fff" opacity="0.45"/>
<rect x="1209.92" y="515.47" width="1" height="156.83" fill="#fff" opacity="0.45"/>
<rect x="1217.72" y="539.60" width="1" height="132.70" fill="#fff" opacity="0.45"/>
<rect x="1225.53" y="539.60" width="1" height="132.70" fill="#fff" opacity="0.45"/>
<rect x="1233.33" y="539.60" width="1" height="132.70" fill="#fff" opacity="0.45"/>
<rect x="1241.13" y="527.53" width="1" height="144.77" fill="#fff" opacity="0.45"/>
<rect x="1248.94" y="455.15" width="1" height="217.15" fill="#fff" opacity="0.45"/>
<rect x="1256.74" y="467.21" width="1" height="205.09" fill="#fff" opacity="0.45"/>
<rect x="1264.54" y="467.21" width="1" height="205.09" fill="#fff" opacity="0.45"/>
<rect x="1272.35" y="479.28" width="1" height="193.02" fill="#fff" opacity="0.45"/>
<rect x="1280.15" y="479.28" width="1" height="193.02" fill="#fff" opacity="0.45"/>
<rect x="1287.96" y="479.28" width="1" height="193.02" fill="#fff" opacity="0.45"/>
<rect x="1295.76" y="479.28" width="1" height="193.02" fill="#fff" opacity="0.45"/>
<rect x="1303.56" y="467.21" width="1" height="205.09" fill="#fff" opacity="0.45"/>
<rect x="1311.37" y="467.21" width="1" height="205.09" fill="#fff" opacity="0.45"/>
<rect x="1319.17" y="467.21" width="1" height="205.09" fill="#fff" opacity="0.45"/>
<rect x="1326.97" y="479.28" width="1" height="193.02" fill="#fff" opacity="0.45"/>
<rect x="1334.78" y="503.40" width="1" height="168.90" fill="#fff" opacity="0.45"/>
<rect x="1342.58" y="539.60" width="1" height="132.70" fill="#fff" opacity="0.45"/>
<rect x="1350.39" y="539.60" width="1" height="132.70" fill="#fff" opacity="0.45"/>
<rect x="1358.19" y="539.60" width="1" height="132.70" fill="#fff" opacity="0.45"/>
<rect x="1365.99" y="539.60" width="1" height="132.70" fill="#fff" opacity="0.45"/>
<rect x="1373.80" y="539.60" width="1" height="132.70" fill="#fff" opacity="0.45"/>
<rect x="1381.60" y="539.60" width="1" height="132.70" fill="#fff" opacity="0.45"/>
<rect x="1389.41" y="491.34" width="1" height="180.96" fill="#fff" opacity="0.45"/>
<rect x="1397.21" y="334.51" width="1" height="337.79" fill="#fff" opacity="0.45"/>
<rect x="1405.01" y="334.51" width="1" height="337.79" fill="#fff" opacity="0.45"/>
<rect x="1412.82" y="346.57" width="1" height="325.73" fill="#fff" opacity="0.45"/>
<rect x="1420.62" y="382.76" width="1" height="289.54" fill="#fff" opacity="0.45"/>
<rect x="1428.42" y="467.21" width="1" height="205.09" fill="#fff" opacity="0.45"/>
<rect x="1436.23" y="467.21" width="1" height="205.09" fill="#fff" opacity="0.45"/>
<rect x="1444.03" y="467.21" width="1" height="205.09" fill="#fff" opacity="0.45"/>
<rect x="1451.84" y="467.21" width="1" height="205.09" fill="#fff" opacity="0.45"/>
<rect x="1459.64" y="491.34" width="1" height="180.96" fill="#fff" opacity="0.45"/>
<rect x="1467.44" y="491.34" width="1" height="180.96" fill="#fff" opacity="0.45"/>
<rect x="1475.25" y="467.21" width="1" height="205.09" fill="#fff" opacity="0.45"/>
<rect x="1483.05" y="479.28" width="1" height="193.02" fill="#fff" opacity="0.45"/>
<rect x="1490.86" y="479.28" width="1" height="193.02" fill="#fff" opacity="0.45"/>
<rect x="1498.66" y="370.70" width="1" height="301.60" fill="#fff" opacity="0.45"/>
<rect x="1506.46" y="394.83" width="1" height="277.47" fill="#fff" opacity="0.45"/>
<rect x="1514.27" y="491.34" width="1" height="180.96" fill="#fff" opacity="0.45"/>
<rect x="1522.07" y="515.47" width="1" height="156.83" fill="#fff" opacity="0.45"/>
<rect x="1529.87" y="515.47" width="1" height="156.83" fill="#fff" opacity="0.45"/>
<rect x="1537.68" y="503.40" width="1" height="168.90" fill="#fff" opacity="0.45"/>
<rect x="1545.48" y="503.40" width="1" height="168.90" fill="#fff" opacity="0.45"/>
<rect x="1553.29" y="527.53" width="1" height="144.77" fill="#fff" opacity="0.45"/>
<rect x="1561.09" y="527.53" width="1" height="144.77" fill="#fff" opacity="0.45"/>
<rect x="1568.89" y="539.60" width="1" height="132.70" fill="#fff" opacity="0.45"/>
<rect x="1576.70" y="539.60" width="1" height="132.70" fill="#fff" opacity="0.45"/>
<rect x="1584.50" y="539.60" width="1" height="132.70" fill="#fff" opacity="0.45"/>
<rect x="1592.30" y="527.53" width="1" height="144.77" fill="#fff" opacity="0.45"/>
<rect x="1600.11" y="515.47" width="1" height="156.83" fill="#fff" opacity="0.45"/>
<rect x="1607.91" y="539.60" width="1" height="132.70" fill="#fff" opacity="0.45"/>
<rect x="1615.72" y="539.60" width="1" height="132.70" fill="#fff" opacity="0.45"/>
<rect x="1623.52" y="539.60" width="1" height="132.70" fill="#fff" opacity="0.45"/>
<rect x="1631.32" y="539.60" width="1" height="132.70" fill="#fff" opacity="0.45"/>
<rect x="1639.13" y="527.53" width="1" height="144.77" fill="#fff" opacity="0.45"/>
<rect x="1646.93" y="539.60" width="1" height="132.70" fill="#fff" opacity="0.45"/>
<rect x="1654.74" y="539.60" width="1" height="132.70" fill="#fff" opacity="0.45"/>
<rect x="1662.54" y="503.40" width="1" height="168.90" fill="#fff" opacity="0.45"/>
<rect x="1670.34" y="443.08" width="1" height="229.22" fill="#fff" opacity="0.45"/>
<rect x="1678.15" y="455.15" width="1" height="217.15" fill="#fff" opacity="0.45"/>
<rect x="1685.95" y="467.21" width="1" height="205.09" fill="#fff" opacity="0.45"/>
<rect x="1693.75" y="479.28" width="1" height="193.02" fill="#fff" opacity="0.45"/>
<rect x="1701.56" y="479.28" width="1" height="193.02" fill="#fff" opacity="0.45"/>
<rect x="1709.36" y="527.53" width="1" height="144.77" fill="#fff" opacity="0.45"/>
<rect x="1717.17" y="527.53" width="1" height="144.77" fill="#fff" opacity="0.45"/>
<rect x="1724.97" y="479.28" width="1" height="193.02" fill="#fff" opacity="0.45"/>
<rect x="1732.77" y="491.34" width="1" height="180.96" fill="#fff" opacity="0.45"/>
<rect x="1740.58" y="491.34" width="1" height="180.96" fill="#fff" opacity="0.5"/>
<rect x="1748.38" y="406.89" width="1" height="265.41" fill="#fff" opacity="0.5"/>
<rect x="1756.18" y="515.47" width="1" height="156.83" fill="#fff" opacity="0.5"/>
<rect x="1763.99" y="636.11" width="1" height="36.19" fill="#fff" opacity="0.5"/>
<rect x="1771.79" y="648.17" width="1" height="24.13" fill="#fff" opacity="0.5"/>
<rect x="1779.60" y="648.17" width="1" height="24.13" fill="#fff" opacity="0.5"/>
<rect x="1787.40" y="648.17" width="1" height="24.13" fill="#fff" opacity="0.5"/>
<rect x="1795.20" y="648.17" width="1" height="24.13" fill="#fff" opacity="0.5"/>
<rect x="1803.01" y="648.17" width="1" height="24.13" fill="#fff" opacity="0.5"/>
<rect x="1810.81" y="648.17" width="1" height="24.13" fill="#fff" opacity="0.5"/>
<rect x="1818.62" y="648.17" width="1" height="24.13" fill="#fff" opacity="0.5"/>
<rect x="1826.42" y="648.17" width="1" height="24.13" fill="#fff" opacity="0.5"/>
<rect x="1834.22" y="648.17" width="1" height="24.13" fill="#fff" opacity="0.5"/>
<rect x="1842.03" y="648.17" width="1" height="24.13" fill="#fff" opacity="0.5"/>
<rect x="1849.83" y="648.17" width="1" height="24.13" fill="#fff" opacity="0.5"/>
<rect x="1857.63" y="648.17" width="1" height="24.13" fill="#fff" opacity="0.5"/>
<rect x="1865.44" y="648.17" width="1" height="24.13" fill="#fff" opacity="0.5"/>
<rect x="1873.24" y="648.17" width="1" height="24.13" fill="#fff" opacity="0.5"/>
<rect x="1881.05" y="648.17" width="1" height="24.13" fill="#fff" opacity="0.5"/>
<rect x="1888.85" y="648.17" width="1" height="24.13" fill="#fff" opacity="0.5"/>
<rect x="1896.65" y="648.17" width="1" height="24.13" fill="#fff" opacity="0.5"/>
<rect x="1904.46" y="648.17" width="1" height="24.13" fill="#fff" opacity="0.5"/>
<rect x="1912.26" y="648.17" width="1" height="24.13" fill="#fff" opacity="0.5"/>
<rect x="1920.07" y="648.17" width="1" height="24.13" fill="#fff" opacity="0.5"/>
<rect x="1927.87" y="648.17" width="1" height="24.13" fill="#fff" opacity="0.5"/>
<rect x="1935.67" y="648.17" width="1" height="24.13" fill="#fff" opacity="0.5"/>
<rect x="1943.48" y="648.17" width="1" height="24.13" fill="#fff" opacity="0.5"/>
<rect x="1951.28" y="648.17" width="1" height="24.13" fill="#fff" opacity="0.5"/>
<rect x="1959.08" y="648.17" width="1" height="24.13" fill="#fff" opacity="0.5"/>
<rect x="1966.89" y="648.17" width="1" height="24.13" fill="#fff" opacity="0.5"/>
<rect x="1974.69" y="648.17" width="1" height="24.13" fill="#fff" opacity="0.5"/>
<rect x="1982.50" y="648.17" width="1" height="24.13" fill="#fff" opacity="0.5"/>
<rect x="1990.30" y="648.17" width="1" height="24.13" fill="#fff" opacity="0.5"/>
<rect x="1998.10" y="648.17" width="1" height="24.13" fill="#fff" opacity="0.5"/>
<rect x="2005.91" y="648.17" width="1" height="24.13" fill="#fff" opacity="0.5"/>
<rect x="2013.71" y="648.17" width="1" height="24.13" fill="#fff" opacity="0.5"/>
<rect x="2021.51" y="648.17" width="1" height="24.13" fill="#fff" opacity="0.5"/>
<rect x="2029.32" y="648.17" width="1" height="24.13" fill="#fff" opacity="0.5"/>
<rect x="2037.12" y="648.17" width="1" height="24.13" fill="#fff" opacity="0.5"/>
<rect x="2044.93" y="648.17" width="1" height="24.13" fill="#fff" opacity="0.5"/>
<rect x="2052.73" y="648.17" width="1" height="24.13" fill="#fff" opacity="0.5"/>
<rect x="2060.53" y="648.17" width="1" height="24.13" fill="#fff" opacity="0.5"/>
<rect x="2068.34" y="648.17" width="1" height="24.13" fill="#fff" opacity="0.5"/>
<rect x="2076.14" y="648.17" width="1" height="24.13" fill="#fff" opacity="0.5"/>
<rect x="2083.95" y="648.17" width="1" height="24.13" fill="#fff" opacity="0.5"/>
<rect x="2091.75" y="648.17" width="1" height="24.13" fill="#fff" opacity="0.5"/>
<rect x="2099.55" y="648.17" width="1" height="24.13" fill="#fff" opacity="0.5"/>
<rect x="2107.36" y="648.17" width="1" height="24.13" fill="#fff" opacity="0.5"/>
<rect x="2115.16" y="648.17" width="1" height="24.13" fill="#fff" opacity="0.5"/>
<rect x="2122.96" y="648.17" width="1" height="24.13" fill="#fff" opacity="0.5"/>
<rect x="2130.77" y="648.17" width="1" height="24.13" fill="#fff" opacity="0.5"/>
<rect x="2138.57" y="648.17" width="1" height="24.13" fill="#fff" opacity="0.5"/>
<rect x="2146.38" y="648.17" width="1" height="24.13" fill="#fff" opacity="0.5"/>
<rect x="2154.18" y="648.17" width="1" height="24.13" fill="#fff" opacity="0.5"/>
<rect x="2161.98" y="648.17" width="1" height="24.13" fill="#fff" opacity="0.5"/>
<rect x="2169.79" y="648.17" width="1" height="24.13" fill="#fff" opacity="0.5"/>
<rect x="2177.59" y="648.17" width="1" height="24.13" fill="#fff" opacity="0.5"/>
<rect x="2185.39" y="648.17" width="1" height="24.13" fill="#fff" opacity="0.5"/>
<rect x="2193.20" y="648.17" width="1" height="24.13" fill="#fff" opacity="0.5"/>
<rect x="2201.00" y="648.17" width="1" height="24.13" fill="#fff" opacity="0.5"/>
<rect x="2208.81" y="648.17" width="1" height="24.13" fill="#fff" opacity="0.5"/>
<rect x="2216.61" y="648.17" width="1" height="24.13" fill="#fff" opacity="0.5"/>
<rect x="2224.41" y="648.17" width="1" height="24.13" fill="#fff" opacity="0.5"/>
<rect x="2232.22" y="648.17" width="1" height="24.13" fill="#fff" opacity="0.5"/>
<rect x="2240.02" y="648.17" width="1" height="24.13" fill="#fff" opacity="0.5"/>
<rect x="2247.83" y="648.17" width="1" height="24.13" fill="#fff" opacity="0.5"/>
<rect x="2255.63" y="648.17" width="1" height="24.13" fill="#fff" opacity="0.5"/>
<rect x="2263.43" y="648.17" width="1" height="24.13" fill="#fff" opacity="0.5"/>
<rect x="2271.24" y="648.17" width="1" height="24.13" fill="#fff" opacity="0.5"/>
<rect x="2279.04" y="648.17" width="1" height="24.13" fill="#fff" opacity="0.5"/>
<rect x="2286.84" y="648.17" width="1" height="24.13" fill="#fff" opacity="0.5"/>
<rect x="2294.65" y="648.17" width="1" height="24.13" fill="#fff" opacity="0.5"/>
<rect x="2302.45" y="648.17" width="1" height="24.13" fill="#fff" opacity="0.5"/>
<rect x="2310.26" y="648.17" width="1" height="24.13" fill="#fff" opacity="0.5"/>
<rect x="2318.06" y="648.17" width="1" height="24.13" fill="#fff" opacity="0.5"/>
<rect x="2325.86" y="648.17" width="1" height="24.13" fill="#fff" opacity="0.5"/>
<rect x="2333.67" y="648.17" width="1" height="24.13" fill="#fff" opacity="0.5"/>
<rect x="2341.47" y="648.17" width="1" height="24.13" fill="#fff" opacity="0.5"/>
<rect x="2349.28" y="648.17" width="1" height="24.13" fill="#fff" opacity="0.5"/>
<rect x="2357.08" y="648.17" width="1" height="24.13" fill="#fff" opacity="0.5"/>
<rect x="2364.88" y="648.17" width="1" height="24.13" fill="#fff" opacity="0.5"/>
<rect x="2372.69" y="648.17" width="1" height="24.13" fill="#fff" opacity="0.5"/>
<rect x="2380.49" y="648.17" width="1" height="24.13" fill="#fff" opacity="0.5"/>
<line x1="152.5" y1="69.09999999999991" x2="152.5" y2="673.3" stroke="#3a3a3a" stroke-width="1.6"/>
<line x1="153.0" y1="672.8" x2="2400.5" y2="672.8" stroke="#666" stroke-width="1.8"/>
<line x1="153.00" y1="674.3" x2="153.00" y2="683.3" stroke="#aaa" stroke-width="1"/>
<text transform="translate(153.00,706.6) scale(1.09,1)" x="0" y="0" font-size="17.8" text-anchor="middle" font-weight="400" fill="#111" stroke="#111" stroke-width="0.35"  xml:space="preserve">0h</text>
<line x1="246.65" y1="674.3" x2="246.65" y2="683.3" stroke="#aaa" stroke-width="1"/>
<text transform="translate(246.65,706.6) scale(1.09,1)" x="0" y="0" font-size="17.8" text-anchor="middle" font-weight="400" fill="#111" stroke="#111" stroke-width="0.35"  xml:space="preserve">1h</text>
<line x1="340.29" y1="674.3" x2="340.29" y2="683.3" stroke="#aaa" stroke-width="1"/>
<text transform="translate(340.29,706.6) scale(1.09,1)" x="0" y="0" font-size="17.8" text-anchor="middle" font-weight="400" fill="#111" stroke="#111" stroke-width="0.35"  xml:space="preserve">2h</text>
<line x1="433.94" y1="674.3" x2="433.94" y2="683.3" stroke="#aaa" stroke-width="1"/>
<text transform="translate(433.94,706.6) scale(1.09,1)" x="0" y="0" font-size="17.8" text-anchor="middle" font-weight="400" fill="#111" stroke="#111" stroke-width="0.35"  xml:space="preserve">3h</text>
<line x1="527.58" y1="674.3" x2="527.58" y2="683.3" stroke="#aaa" stroke-width="1"/>
<text transform="translate(527.58,706.6) scale(1.09,1)" x="0" y="0" font-size="17.8" text-anchor="middle" font-weight="400" fill="#111" stroke="#111" stroke-width="0.35"  xml:space="preserve">4h</text>
<line x1="621.23" y1="674.3" x2="621.23" y2="683.3" stroke="#aaa" stroke-width="1"/>
<text transform="translate(621.23,706.6) scale(1.09,1)" x="0" y="0" font-size="17.8" text-anchor="middle" font-weight="400" fill="#111" stroke="#111" stroke-width="0.35"  xml:space="preserve">5h</text>
<line x1="714.88" y1="674.3" x2="714.88" y2="683.3" stroke="#aaa" stroke-width="1"/>
<text transform="translate(714.88,706.6) scale(1.09,1)" x="0" y="0" font-size="17.8" text-anchor="middle" font-weight="400" fill="#111" stroke="#111" stroke-width="0.35"  xml:space="preserve">6h</text>
<line x1="808.52" y1="674.3" x2="808.52" y2="683.3" stroke="#aaa" stroke-width="1"/>
<text transform="translate(808.52,706.6) scale(1.09,1)" x="0" y="0" font-size="17.8" text-anchor="middle" font-weight="400" fill="#111" stroke="#111" stroke-width="0.35"  xml:space="preserve">7h</text>
<line x1="902.17" y1="674.3" x2="902.17" y2="683.3" stroke="#aaa" stroke-width="1"/>
<text transform="translate(902.17,706.6) scale(1.09,1)" x="0" y="0" font-size="17.8" text-anchor="middle" font-weight="400" fill="#111" stroke="#111" stroke-width="0.35"  xml:space="preserve">8h</text>
<line x1="995.81" y1="674.3" x2="995.81" y2="683.3" stroke="#aaa" stroke-width="1"/>
<text transform="translate(995.81,706.6) scale(1.09,1)" x="0" y="0" font-size="17.8" text-anchor="middle" font-weight="400" fill="#111" stroke="#111" stroke-width="0.35"  xml:space="preserve">9h</text>
<line x1="1089.46" y1="674.3" x2="1089.46" y2="683.3" stroke="#aaa" stroke-width="1"/>
<text transform="translate(1089.46,706.6) scale(1.09,1)" x="0" y="0" font-size="17.8" text-anchor="middle" font-weight="400" fill="#111" stroke="#111" stroke-width="0.35"  xml:space="preserve">10h</text>
<line x1="1183.10" y1="674.3" x2="1183.10" y2="683.3" stroke="#aaa" stroke-width="1"/>
<text transform="translate(1183.10,706.6) scale(1.09,1)" x="0" y="0" font-size="17.8" text-anchor="middle" font-weight="400" fill="#111" stroke="#111" stroke-width="0.35"  xml:space="preserve">11h</text>
<line x1="1276.75" y1="674.3" x2="1276.75" y2="683.3" stroke="#aaa" stroke-width="1"/>
<text transform="translate(1276.75,706.6) scale(1.09,1)" x="0" y="0" font-size="17.8" text-anchor="middle" font-weight="400" fill="#111" stroke="#111" stroke-width="0.35"  xml:space="preserve">12h</text>
<line x1="1370.40" y1="674.3" x2="1370.40" y2="683.3" stroke="#aaa" stroke-width="1"/>
<text transform="translate(1370.40,706.6) scale(1.09,1)" x="0" y="0" font-size="17.8" text-anchor="middle" font-weight="400" fill="#111" stroke="#111" stroke-width="0.35"  xml:space="preserve">13h</text>
<line x1="1464.04" y1="674.3" x2="1464.04" y2="683.3" stroke="#aaa" stroke-width="1"/>
<text transform="translate(1464.04,706.6) scale(1.09,1)" x="0" y="0" font-size="17.8" text-anchor="middle" font-weight="400" fill="#111" stroke="#111" stroke-width="0.35"  xml:space="preserve">14h</text>
<line x1="1557.69" y1="674.3" x2="1557.69" y2="683.3" stroke="#aaa" stroke-width="1"/>
<text transform="translate(1557.69,706.6) scale(1.09,1)" x="0" y="0" font-size="17.8" text-anchor="middle" font-weight="400" fill="#111" stroke="#111" stroke-width="0.35"  xml:space="preserve">15h</text>
<line x1="1651.33" y1="674.3" x2="1651.33" y2="683.3" stroke="#aaa" stroke-width="1"/>
<text transform="translate(1651.33,706.6) scale(1.09,1)" x="0" y="0" font-size="17.8" text-anchor="middle" font-weight="400" fill="#111" stroke="#111" stroke-width="0.35"  xml:space="preserve">16h</text>
<line x1="1744.98" y1="674.3" x2="1744.98" y2="683.3" stroke="#aaa" stroke-width="1"/>
<text transform="translate(1744.98,706.6) scale(1.09,1)" x="0" y="0" font-size="17.8" text-anchor="middle" font-weight="400" fill="#111" stroke="#111" stroke-width="0.35"  xml:space="preserve">17h</text>
<line x1="1838.62" y1="674.3" x2="1838.62" y2="683.3" stroke="#aaa" stroke-width="1"/>
<text transform="translate(1838.62,706.6) scale(1.09,1)" x="0" y="0" font-size="17.8" text-anchor="middle" font-weight="400" fill="#111" stroke="#111" stroke-width="0.35"  xml:space="preserve">18h</text>
<line x1="1932.27" y1="674.3" x2="1932.27" y2="683.3" stroke="#aaa" stroke-width="1"/>
<text transform="translate(1932.27,706.6) scale(1.09,1)" x="0" y="0" font-size="17.8" text-anchor="middle" font-weight="400" fill="#111" stroke="#111" stroke-width="0.35"  xml:space="preserve">19h</text>
<line x1="2025.92" y1="674.3" x2="2025.92" y2="683.3" stroke="#aaa" stroke-width="1"/>
<text transform="translate(2025.92,706.6) scale(1.09,1)" x="0" y="0" font-size="17.8" text-anchor="middle" font-weight="400" fill="#111" stroke="#111" stroke-width="0.35"  xml:space="preserve">20h</text>
<line x1="2119.56" y1="674.3" x2="2119.56" y2="683.3" stroke="#aaa" stroke-width="1"/>
<text transform="translate(2119.56,706.6) scale(1.09,1)" x="0" y="0" font-size="17.8" text-anchor="middle" font-weight="400" fill="#111" stroke="#111" stroke-width="0.35"  xml:space="preserve">21h</text>
<line x1="2213.21" y1="674.3" x2="2213.21" y2="683.3" stroke="#aaa" stroke-width="1"/>
<text transform="translate(2213.21,706.6) scale(1.09,1)" x="0" y="0" font-size="17.8" text-anchor="middle" font-weight="400" fill="#111" stroke="#111" stroke-width="0.35"  xml:space="preserve">22h</text>
<line x1="2306.85" y1="674.3" x2="2306.85" y2="683.3" stroke="#aaa" stroke-width="1"/>
<text transform="translate(2306.85,706.6) scale(1.09,1)" x="0" y="0" font-size="17.8" text-anchor="middle" font-weight="400" fill="#111" stroke="#111" stroke-width="0.35"  xml:space="preserve">23h</text>
<line x1="2400.50" y1="674.3" x2="2400.50" y2="683.3" stroke="#aaa" stroke-width="1"/>
<text transform="translate(2400.50,706.6) scale(1.09,1)" x="0" y="0" font-size="17.8" text-anchor="middle" font-weight="400" fill="#111" stroke="#111" stroke-width="0.35"  xml:space="preserve">0h</text>
<text transform="translate(131,678.9) scale(1.08,1)" x="0" y="0" font-size="18" text-anchor="end" font-weight="400" fill="#3a3a3a" stroke="#3a3a3a" stroke-width="0.2"  xml:space="preserve">0</text>
<text transform="translate(131,618.5799999999999) scale(1.08,1)" x="0" y="0" font-size="18" text-anchor="end" font-weight="400" fill="#3a3a3a" stroke="#3a3a3a" stroke-width="0.2"  xml:space="preserve">5</text>
<text transform="translate(131,558.26) scale(1.08,1)" x="0" y="0" font-size="18" text-anchor="end" font-weight="400" fill="#3a3a3a" stroke="#3a3a3a" stroke-width="0.2"  xml:space="preserve">10</text>
<text transform="translate(131,497.93999999999994) scale(1.08,1)" x="0" y="0" font-size="18" text-anchor="end" font-weight="400" fill="#3a3a3a" stroke="#3a3a3a" stroke-width="0.2"  xml:space="preserve">15</text>
<text transform="translate(131,437.62) scale(1.08,1)" x="0" y="0" font-size="18" text-anchor="end" font-weight="400" fill="#3a3a3a" stroke="#3a3a3a" stroke-width="0.2"  xml:space="preserve">20</text>
<text transform="translate(131,377.29999999999995) scale(1.08,1)" x="0" y="0" font-size="18" text-anchor="end" font-weight="400" fill="#3a3a3a" stroke="#3a3a3a" stroke-width="0.2"  xml:space="preserve">25</text>
<text transform="translate(131,316.97999999999996) scale(1.08,1)" x="0" y="0" font-size="18" text-anchor="end" font-weight="400" fill="#3a3a3a" stroke="#3a3a3a" stroke-width="0.2"  xml:space="preserve">30</text>
<text transform="translate(131,256.65999999999997) scale(1.08,1)" x="0" y="0" font-size="18" text-anchor="end" font-weight="400" fill="#3a3a3a" stroke="#3a3a3a" stroke-width="0.2"  xml:space="preserve">35</text>
<text transform="translate(131,196.33999999999995) scale(1.08,1)" x="0" y="0" font-size="18" text-anchor="end" font-weight="400" fill="#3a3a3a" stroke="#3a3a3a" stroke-width="0.2"  xml:space="preserve">40</text>
<text transform="translate(131,136.01999999999995) scale(1.08,1)" x="0" y="0" font-size="18" text-anchor="end" font-weight="400" fill="#3a3a3a" stroke="#3a3a3a" stroke-width="0.2"  xml:space="preserve">45</text>
<text transform="translate(131,75.6999999999999) scale(1.08,1)" x="0" y="0" font-size="18" text-anchor="end" font-weight="400" fill="#3a3a3a" stroke="#3a3a3a" stroke-width="0.2"  xml:space="preserve">50</text>
<text x="0" y="0" font-size="23" fill="#333" transform="translate(86,370) rotate(-90)" text-anchor="middle" textLength="30" lengthAdjust="spacingAndGlyphs">kW</text>
<rect x="157.2" y="817.3" width="2261.4" height="504.0" fill="#000" opacity="0.55" filter="url(#blur4)"/>
<rect x="155.2" y="815.3" width="2261.4" height="504.0" fill="#f0f0f0"/>
<rect x="478.26" y="1151.30" width="323.06" height="84.00" fill="#fff"/>
<rect x="1124.37" y="1151.30" width="323.06" height="84.00" fill="#fff"/>
<rect x="1770.49" y="1151.30" width="323.06" height="84.00" fill="#fff"/>
<line x1="478.5" y1="1151.30" x2="478.5" y2="1235.30" stroke="#cfcfcf" stroke-width="1"/>
<line x1="801.5" y1="1151.30" x2="801.5" y2="1235.30" stroke="#cfcfcf" stroke-width="1"/>
<line x1="1124.5" y1="1151.30" x2="1124.5" y2="1235.30" stroke="#cfcfcf" stroke-width="1"/>
<line x1="1447.5" y1="1151.30" x2="1447.5" y2="1235.30" stroke="#cfcfcf" stroke-width="1"/>
<line x1="1770.5" y1="1151.30" x2="1770.5" y2="1235.30" stroke="#cfcfcf" stroke-width="1"/>
<line x1="2093.5" y1="1151.30" x2="2093.5" y2="1235.30" stroke="#cfcfcf" stroke-width="1"/>
<rect x="478.26" y="983.30" width="323.06" height="84.00" fill="#fff"/>
<rect x="1124.37" y="983.30" width="323.06" height="84.00" fill="#fff"/>
<rect x="1770.49" y="983.30" width="323.06" height="84.00" fill="#fff"/>
<line x1="478.5" y1="983.30" x2="478.5" y2="1067.30" stroke="#cfcfcf" stroke-width="1"/>
<line x1="801.5" y1="983.30" x2="801.5" y2="1067.30" stroke="#cfcfcf" stroke-width="1"/>
<line x1="1124.5" y1="983.30" x2="1124.5" y2="1067.30" stroke="#cfcfcf" stroke-width="1"/>
<line x1="1447.5" y1="983.30" x2="1447.5" y2="1067.30" stroke="#cfcfcf" stroke-width="1"/>
<line x1="1770.5" y1="983.30" x2="1770.5" y2="1067.30" stroke="#cfcfcf" stroke-width="1"/>
<line x1="2093.5" y1="983.30" x2="2093.5" y2="1067.30" stroke="#cfcfcf" stroke-width="1"/>
<rect x="478.26" y="815.30" width="323.06" height="84.00" fill="#fff"/>
<rect x="1124.37" y="815.30" width="323.06" height="84.00" fill="#fff"/>
<rect x="1770.49" y="815.30" width="323.06" height="84.00" fill="#fff"/>
<line x1="478.5" y1="815.30" x2="478.5" y2="899.30" stroke="#cfcfcf" stroke-width="1"/>
<line x1="801.5" y1="815.30" x2="801.5" y2="899.30" stroke="#cfcfcf" stroke-width="1"/>
<line x1="1124.5" y1="815.30" x2="1124.5" y2="899.30" stroke="#cfcfcf" stroke-width="1"/>
<line x1="1447.5" y1="815.30" x2="1447.5" y2="899.30" stroke="#cfcfcf" stroke-width="1"/>
<line x1="1770.5" y1="815.30" x2="1770.5" y2="899.30" stroke="#cfcfcf" stroke-width="1"/>
<line x1="2093.5" y1="815.30" x2="2093.5" y2="899.30" stroke="#cfcfcf" stroke-width="1"/>
<line x1="155.2" y1="1235.5" x2="2416.6" y2="1235.5" stroke="#b9b9b9" stroke-width="1"/>
<line x1="143" y1="1235.5" x2="155.2" y2="1235.5" stroke="#999" stroke-width="1"/>
<line x1="155.2" y1="1151.5" x2="2416.6" y2="1151.5" stroke="#b9b9b9" stroke-width="1"/>
<line x1="143" y1="1151.5" x2="155.2" y2="1151.5" stroke="#999" stroke-width="1"/>
<line x1="155.2" y1="1067.5" x2="2416.6" y2="1067.5" stroke="#b9b9b9" stroke-width="1"/>
<line x1="143" y1="1067.5" x2="155.2" y2="1067.5" stroke="#999" stroke-width="1"/>
<line x1="155.2" y1="983.5" x2="2416.6" y2="983.5" stroke="#b9b9b9" stroke-width="1"/>
<line x1="143" y1="983.5" x2="155.2" y2="983.5" stroke="#999" stroke-width="1"/>
<line x1="155.2" y1="899.5" x2="2416.6" y2="899.5" stroke="#b9b9b9" stroke-width="1"/>
<line x1="143" y1="899.5" x2="155.2" y2="899.5" stroke="#999" stroke-width="1"/>
<line x1="155.2" y1="815.5" x2="2416.6" y2="815.5" stroke="#b9b9b9" stroke-width="1"/>
<line x1="143" y1="815.5" x2="155.2" y2="815.5" stroke="#999" stroke-width="1"/>
<line x1="143" y1="1319.3" x2="155.2" y2="1319.3" stroke="#999" stroke-width="1"/>
<path d="M155.20,1319.3V1294.10H155.76V1302.50H156.88V1302.50H158.00V1302.50H159.13V1302.50H160.25V1302.50H161.37V1302.50H162.49V1302.50H163.61V1302.50H164.73V1302.50H165.86V1302.50H166.98V1302.50H168.10V1302.50H169.22V1294.10H170.34V1302.50H171.47V1294.10H172.59V1302.50H173.71V1302.50H174.83V1302.50H175.95V1302.50H177.07V1302.50H178.20V1302.50H179.32V1302.50H180.44V1302.50H181.56V1294.10H182.68V1302.50H183.80V1302.50H184.93V1302.50H186.05V1302.50H187.17V1302.50H188.29V1302.50H189.41V1302.50H190.53V1294.10H191.66V1302.50H192.78V1302.50H193.90V1302.50H195.02V1302.50H196.14V1302.50H197.26V1294.10H198.39V1302.50H199.51V1294.10H200.63V1302.50H201.75V1302.50H202.87V1302.50H204.00V1302.50H205.12V1302.50H206.24V1302.50H207.36V1302.50H208.48V1302.50H209.60V1294.10H210.73V1302.50H211.85V1302.50H212.97V1302.50H214.09V1302.50H215.21V1302.50H216.33V1302.50H217.46V1294.10H218.58V1302.50H219.70V1302.50H220.82V1302.50H221.94V1302.50H223.06V1302.50H224.19V1302.50H225.31V1302.50H226.43V1302.50H227.55V1294.10H228.67V1302.50H229.79V1294.10H230.92V1302.50H232.04V1302.50H233.16V1302.50H234.28V1294.10H235.40V1302.50H236.53V1319.3ZM383.47,1319.3V1184.90H384.59V1184.90H385.71V1176.50H386.84V1176.50H387.96V1176.50H389.08V1176.50H390.20V1184.90H391.32V1235.30H392.45V1235.30H393.57V1226.90H394.69V1226.90H395.81V1226.90H396.93V1226.90H398.05V1226.90H399.18V1226.90H400.30V1226.90H401.42V1226.90H402.54V1226.90H403.66V1226.90H404.78V1226.90H405.91V1226.90H407.03V1226.90H408.15V1226.90H409.27V1226.90H410.39V1235.30H411.51V1235.30H412.64V1235.30H413.76V1235.30H414.88V1235.30H416.00V1235.30H417.12V1235.30H418.24V1285.70H419.37V1302.50H420.49V1302.50H421.61V1302.50H422.73V1302.50H423.85V1302.50H424.98V1302.50H426.10V1302.50H427.22V1294.10H428.34V1302.50H429.46V1302.50H430.58V1302.50H431.71V1302.50H432.83V1302.50H433.95V1302.50H435.07V1302.50H436.19V1302.50H437.31V1302.50H438.44V1302.50H439.56V1302.50H440.68V1294.10H441.80V1302.50H442.92V1302.50H444.04V1302.50H445.17V1302.50H446.29V1294.10H447.41V1302.50H448.53V1294.10H449.65V1302.50H450.77V1302.50H451.90V1302.50H453.02V1302.50H454.14V1302.50H455.26V1302.50H456.38V1302.50H457.51V1302.50H458.63V1302.50H459.75V1302.50H460.87V1294.10H461.99V1302.50H463.11V1302.50H464.24V1302.50H465.36V1302.50H466.48V1302.50H467.60V1302.50H468.72V1302.50H469.84V1302.50H470.97V1302.50H472.09V1302.50H473.21V1302.50H474.33V1302.50H475.45V1294.10H476.57V1302.50H477.70V1302.50H478.82V1302.50H479.94V1302.50H481.06V1302.50H482.18V1302.50H483.30V1302.50H484.43V1302.50H485.55V1294.10H486.67V1302.50H487.79V1302.50H488.91V1302.50H490.04V1302.50H491.16V1302.50H492.28V1302.50H493.40V1302.50H494.52V1302.50H495.64V1302.50H496.77V1302.50H497.89V1294.10H499.01V1302.50H500.13V1302.50H501.25V1302.50H502.37V1302.50H503.50V1302.50H504.62V1302.50H505.74V1302.50H506.86V1302.50H507.98V1302.50H509.10V1302.50H510.23V1302.50H511.35V1302.50H512.47V1294.10H513.59V1302.50H514.71V1294.10H515.83V1302.50H516.96V1302.50H518.08V1302.50H519.20V1302.50H520.32V1302.50H521.44V1302.50H522.57V1302.50H523.69V1302.50H524.81V1302.50H525.93V1294.10H527.05V1302.50H528.17V1302.50H529.30V1302.50H530.42V1302.50H531.54V1302.50H532.66V1302.50H533.78V1302.50H534.90V1302.50H536.03V1302.50H537.15V1302.50H538.27V1302.50H539.39V1302.50H540.51V1294.10H541.63V1302.50H542.76V1302.50H543.88V1302.50H545.00V1302.50H546.12V1294.10H547.24V1302.50H548.37V1302.50H549.49V1302.50H550.61V1302.50H551.73V1302.50H552.85V1294.10H553.97V1302.50H555.10V1294.10H556.22V1302.50H557.34V1294.10H558.46V1302.50H559.58V1302.50H560.70V1302.50H561.83V1302.50H562.95V1302.50H564.07V1302.50H565.19V1302.50H566.31V1302.50H567.43V1302.50H568.56V1294.10H569.68V1302.50H570.80V1302.50H571.92V1302.50H573.04V1302.50H574.16V1302.50H575.29V1302.50H576.41V1302.50H577.53V1302.50H578.65V1302.50H579.77V1302.50H580.90V1302.50H582.02V1302.50H583.14V1294.10H584.26V1294.10H585.38V1285.70H586.50V1294.10H587.63V1302.50H588.75V1302.50H589.87V1302.50H590.99V1302.50H592.11V1302.50H593.23V1302.50H594.36V1302.50H595.48V1302.50H596.60V1302.50H597.72V1294.10H598.84V1302.50H599.96V1294.10H601.09V1302.50H602.21V1302.50H603.33V1302.50H604.45V1302.50H605.57V1302.50H606.69V1302.50H607.82V1302.50H608.94V1302.50H610.06V1302.50H611.18V1294.10H612.30V1302.50H613.43V1294.10H614.55V1302.50H615.67V1294.10H616.79V1302.50H617.91V1294.10H619.03V1302.50H620.16V1302.50H621.28V1302.50H622.40V1302.50H623.52V1294.10H624.64V1302.50H625.76V1302.50H626.89V1302.50H628.01V1302.50H629.13V1302.50H630.25V1302.50H631.37V1302.50H632.49V1302.50H633.62V1302.50H634.74V1302.50H635.86V1294.10H636.98V1302.50H638.10V1302.50H639.22V1302.50H640.35V1302.50H641.47V1302.50H642.59V1302.50H643.71V1302.50H644.83V1302.50H645.96V1302.50H647.08V1302.50H648.20V1302.50H649.32V1302.50H650.44V1294.10H651.56V1302.50H652.69V1302.50H653.81V1302.50H654.93V1302.50H656.05V1302.50H657.17V1302.50H658.29V1302.50H659.42V1302.50H660.54V1302.50H661.66V1302.50H662.78V1302.50H663.90V1294.10H665.02V1302.50H666.15V1294.10H667.27V1302.50H668.39V1302.50H669.51V1302.50H670.63V1302.50H671.75V1302.50H672.88V1294.10H674.00V1302.50H675.12V1302.50H676.24V1302.50H677.36V1302.50H678.49V1294.10H679.61V1285.70H680.73V1294.10H681.85V1302.50H682.97V1302.50H684.09V1302.50H685.22V1302.50H686.34V1302.50H687.46V1294.10H688.58V1302.50H689.70V1302.50H690.82V1302.50H691.95V1302.50H693.07V1302.50H694.19V1302.50H695.31V1302.50H696.43V1302.50H697.55V1302.50H698.68V1302.50H699.80V1302.50H700.92V1294.10H702.04V1302.50H703.16V1302.50H704.28V1302.50H705.41V1302.50H706.53V1294.10H707.65V1302.50H708.77V1302.50H709.89V1302.50H711.02V1302.50H712.14V1302.50H713.26V1302.50H714.38V1302.50H715.50V1302.50H716.62V1294.10H717.75V1302.50H718.87V1302.50H719.99V1302.50H721.11V1302.50H722.23V1302.50H723.35V1302.50H724.48V1302.50H725.60V1302.50H726.72V1302.50H727.84V1302.50H728.96V1302.50H730.08V1294.10H731.21V1302.50H732.33V1302.50H733.45V1302.50H734.57V1302.50H735.69V1294.10H736.82V1302.50H737.94V1302.50H739.06V1302.50H740.18V1302.50H741.30V1294.10H742.42V1302.50H743.55V1302.50H744.67V1302.50H745.79V1302.50H746.91V1302.50H748.03V1302.50H749.15V1302.50H750.28V1294.10H751.40V1302.50H752.52V1302.50H753.64V1302.50H754.76V1294.10H755.88V1302.50H757.01V1302.50H758.13V1302.50H759.25V1294.10H760.37V1302.50H761.49V1294.10H762.61V1302.50H763.74V1294.10H764.86V1302.50H765.98V1302.50H767.10V1302.50H768.22V1302.50H769.35V1302.50H770.47V1302.50H771.59V1302.50H772.71V1302.50H773.83V1302.50H774.95V1294.10H776.08V1302.50H777.20V1302.50H778.32V1302.50H779.44V1302.50H780.56V1302.50H781.68V1302.50H782.81V1302.50H783.93V1302.50H785.05V1302.50H786.17V1302.50H787.29V1302.50H788.41V1302.50H789.54V1294.10H790.66V1302.50H791.78V1302.50H792.90V1302.50H794.02V1302.50H795.14V1302.50H796.27V1302.50H797.39V1302.50H798.51V1294.10H799.63V1302.50H800.75V1302.50H801.88V1302.50H803.00V1302.50H804.12V1302.50H805.24V1302.50H806.36V1302.50H807.48V1302.50H808.61V1294.10H809.73V1302.50H810.85V1302.50H811.97V1302.50H813.09V1302.50H814.21V1302.50H815.34V1302.50H816.46V1302.50H817.58V1302.50H818.70V1302.50H819.82V1302.50H820.94V1302.50H822.07V1294.10H823.19V1285.70H824.31V1294.10H825.43V1302.50H826.55V1302.50H827.67V1302.50H828.80V1294.10H829.92V1302.50H831.04V1302.50H832.16V1302.50H833.28V1302.50H834.41V1302.50H835.53V1302.50H836.65V1302.50H837.77V1302.50H838.89V1294.10H840.01V1302.50H841.14V1302.50H842.26V1302.50H843.38V1302.50H844.50V1302.50H845.62V1302.50H846.74V1302.50H847.87V1302.50H848.99V1302.50H850.11V1302.50H851.23V1294.10H852.35V1302.50H853.47V1302.50H854.60V1302.50H855.72V1302.50H856.84V1302.50H857.96V1302.50H859.08V1302.50H860.20V1302.50H861.33V1302.50H862.45V1302.50H863.57V1302.50H864.69V1302.50H865.81V1294.10H866.94V1302.50H868.06V1294.10H869.18V1302.50H870.30V1294.10H871.42V1302.50H872.54V1302.50H873.67V1302.50H874.79V1302.50H875.91V1302.50H877.03V1294.10H878.15V1302.50H879.27V1302.50H880.40V1302.50H881.52V1302.50H882.64V1302.50H883.76V1302.50H884.88V1302.50H886.00V1302.50H887.13V1294.10H888.25V1302.50H889.37V1294.10H890.49V1302.50H891.61V1302.50H892.73V1302.50H893.86V1302.50H894.98V1294.10H896.10V1302.50H897.22V1294.10H898.34V1302.50H899.47V1302.50H900.59V1302.50H901.71V1302.50H902.83V1294.10H903.95V1302.50H905.07V1294.10H906.20V1302.50H907.32V1302.50H908.44V1302.50H909.56V1302.50H910.68V1302.50H911.80V1302.50H912.93V1294.10H914.05V1302.50H915.17V1302.50H916.29V1302.50H917.41V1302.50H918.53V1294.10H919.66V1302.50H920.78V1294.10H921.90V1302.50H923.02V1294.10H924.14V1302.50H925.27V1302.50H926.39V1302.50H927.51V1302.50H928.63V1302.50H929.75V1302.50H930.87V1302.50H932.00V1302.50H933.12V1302.50H934.24V1302.50H935.36V1302.50H936.48V1294.10H937.60V1302.50H938.73V1294.10H939.85V1302.50H940.97V1302.50H942.09V1302.50H943.21V1302.50H944.33V1302.50H945.46V1302.50H946.58V1302.50H947.70V1294.10H948.82V1302.50H949.94V1302.50H951.06V1302.50H952.19V1302.50H953.31V1294.10H954.43V1302.50H955.55V1302.50H956.67V1302.50H957.80V1302.50H958.92V1302.50H960.04V1294.10H961.16V1302.50H962.28V1302.50H963.40V1302.50H964.53V1302.50H965.65V1302.50H966.77V1302.50H967.89V1302.50H969.01V1285.70H970.13V1294.10H971.26V1302.50H972.38V1302.50H973.50V1302.50H974.62V1294.10H975.74V1302.50H976.86V1302.50H977.99V1302.50H979.11V1294.10H980.23V1302.50H981.35V1302.50H982.47V1302.50H983.59V1302.50H984.72V1302.50H985.84V1302.50H986.96V1302.50H988.08V1302.50H989.20V1302.50H990.33V1302.50H991.45V1302.50H992.57V1294.10H993.69V1302.50H994.81V1302.50H995.93V1302.50H997.06V1302.50H998.18V1302.50H999.30V1302.50H1000.42V1302.50H1001.54V1302.50H1002.66V1302.50H1003.79V1294.10H1004.91V1302.50H1006.03V1302.50H1007.15V1302.50H1008.27V1302.50H1009.39V1302.50H1010.52V1302.50H1011.64V1302.50H1012.76V1302.50H1013.88V1302.50H1015.00V1302.50H1016.12V1302.50H1017.25V1302.50H1018.37V1294.10H1019.49V1302.50H1020.61V1302.50H1021.73V1302.50H1022.86V1302.50H1023.98V1302.50H1025.10V1302.50H1026.22V1302.50H1027.34V1302.50H1028.46V1302.50H1029.59V1302.50H1030.71V1302.50H1031.83V1302.50H1032.95V1294.10H1034.07V1302.50H1035.19V1302.50H1036.32V1302.50H1037.44V1294.10H1038.56V1302.50H1039.68V1302.50H1040.80V1302.50H1041.92V1302.50H1043.05V1294.10H1044.17V1302.50H1045.29V1302.50H1046.41V1302.50H1047.53V1302.50H1048.65V1302.50H1049.78V1302.50H1050.90V1302.50H1052.02V1294.10H1053.14V1302.50H1054.26V1302.50H1055.39V1302.50H1056.51V1302.50H1057.63V1302.50H1058.75V1302.50H1059.87V1302.50H1060.99V1302.50H1062.12V1294.10H1063.24V1302.50H1064.36V1302.50H1065.48V1302.50H1066.60V1302.50H1067.72V1302.50H1068.85V1302.50H1069.97V1302.50H1071.09V1302.50H1072.21V1302.50H1073.33V1294.10H1074.45V1294.10H1075.58V1285.70H1076.70V1302.50H1077.82V1302.50H1078.94V1294.10H1080.06V1302.50H1081.18V1302.50H1082.31V1302.50H1083.43V1302.50H1084.55V1302.50H1085.67V1302.50H1086.79V1302.50H1087.92V1302.50H1089.04V1294.10H1090.16V1302.50H1091.28V1302.50H1092.40V1302.50H1093.52V1302.50H1094.65V1302.50H1095.77V1302.50H1096.89V1302.50H1098.01V1302.50H1099.13V1302.50H1100.25V1302.50H1101.38V1302.50H1102.50V1294.10H1103.62V1302.50H1104.74V1302.50H1105.86V1302.50H1106.98V1302.50H1108.11V1302.50H1109.23V1302.50H1110.35V1302.50H1111.47V1302.50H1112.59V1302.50H1113.72V1302.50H1114.84V1302.50H1115.96V1294.10H1117.08V1302.50H1118.20V1294.10H1119.32V1302.50H1120.45V1302.50H1121.57V1302.50H1122.69V1302.50H1123.81V1302.50H1124.93V1302.50H1126.05V1302.50H1127.18V1302.50H1128.30V1294.10H1129.42V1302.50H1130.54V1302.50H1131.66V1302.50H1132.78V1302.50H1133.91V1302.50H1135.03V1294.10H1136.15V1302.50H1137.27V1302.50H1138.39V1302.50H1139.51V1302.50H1140.64V1302.50H1141.76V1294.10H1142.88V1302.50H1144.00V1302.50H1145.12V1302.50H1146.25V1302.50H1147.37V1302.50H1148.49V1294.10H1149.61V1302.50H1150.73V1294.10H1151.85V1302.50H1152.98V1302.50H1154.10V1302.50H1155.22V1302.50H1156.34V1302.50H1157.46V1302.50H1158.58V1302.50H1159.71V1302.50H1160.83V1302.50H1161.95V1294.10H1163.07V1302.50H1164.19V1302.50H1165.31V1302.50H1166.44V1302.50H1167.56V1302.50H1168.68V1302.50H1169.80V1302.50H1170.92V1294.10H1172.04V1302.50H1173.17V1294.10H1174.29V1302.50H1175.41V1302.50H1176.53V1302.50H1177.65V1294.10H1178.78V1302.50H1179.90V1302.50H1181.02V1302.50H1182.14V1302.50H1183.26V1302.50H1184.38V1302.50H1185.51V1302.50H1186.63V1302.50H1187.75V1302.50H1188.87V1302.50H1189.99V1302.50H1191.11V1302.50H1192.24V1294.10H1193.36V1302.50H1194.48V1302.50H1195.60V1302.50H1196.72V1302.50H1197.84V1302.50H1198.97V1302.50H1200.09V1302.50H1201.21V1294.10H1202.33V1294.10H1203.45V1294.10H1204.57V1319.3ZM1352.64,1319.3V1067.30H1353.76V1100.90H1354.89V1168.10H1356.01V1294.10H1357.13V1294.10H1358.25V1294.10H1359.37V1294.10H1360.49V1294.10H1361.62V1294.10H1362.74V1294.10H1363.86V1294.10H1364.98V1302.50H1366.10V1294.10H1367.23V1294.10H1368.35V1294.10H1369.47V1294.10H1370.59V1294.10H1371.71V1294.10H1372.83V1294.10H1373.96V1294.10H1375.08V1302.50H1376.20V1294.10H1377.32V1294.10H1378.44V1294.10H1379.56V1294.10H1380.69V1294.10H1381.81V1294.10H1382.93V1294.10H1384.05V1294.10H1385.17V1294.10H1386.29V1294.10H1387.42V1294.10H1388.54V1294.10H1389.66V1294.10H1390.78V1294.10H1391.90V1302.50H1393.02V1294.10H1394.15V1294.10H1395.27V1294.10H1396.39V1294.10H1397.51V1294.10H1398.63V1302.50H1399.76V1294.10H1400.88V1294.10H1402.00V1294.10H1403.12V1294.10H1404.24V1294.10H1405.36V1294.10H1406.49V1294.10H1407.61V1294.10H1408.73V1294.10H1409.85V1302.50H1410.97V1294.10H1412.09V1294.10H1413.22V1294.10H1414.34V1302.50H1415.46V1294.10H1416.58V1294.10H1417.70V1294.10H1418.82V1294.10H1419.95V1294.10H1421.07V1294.10H1422.19V1294.10H1423.31V1294.10H1424.43V1294.10H1425.55V1302.50H1426.68V1294.10H1427.80V1294.10H1428.92V1294.10H1430.04V1294.10H1431.16V1302.50H1432.29V1294.10H1433.41V1294.10H1434.53V1294.10H1435.65V1294.10H1436.77V1294.10H1437.89V1294.10H1439.02V1302.50H1440.14V1294.10H1441.26V1294.10H1442.38V1302.50H1443.50V1294.10H1444.62V1294.10H1445.75V1294.10H1446.87V1294.10H1447.99V1294.10H1449.11V1294.10H1450.23V1294.10H1451.35V1294.10H1452.48V1294.10H1453.60V1294.10H1454.72V1294.10H1455.84V1294.10H1456.96V1294.10H1458.08V1294.10H1459.21V1294.10H1460.33V1294.10H1461.45V1294.10H1462.57V1294.10H1463.69V1302.50H1464.82V1294.10H1465.94V1294.10H1467.06V1294.10H1468.18V1302.50H1469.30V1302.50H1470.42V1294.10H1471.55V1302.50H1472.67V1294.10H1473.79V1294.10H1474.91V1294.10H1476.03V1302.50H1477.15V1302.50H1478.28V1294.10H1479.40V1294.10H1480.52V1294.10H1481.64V1294.10H1482.76V1294.10H1483.88V1294.10H1485.01V1294.10H1486.13V1294.10H1487.25V1294.10H1488.37V1302.50H1489.49V1302.50H1490.62V1294.10H1491.74V1294.10H1492.86V1294.10H1493.98V1294.10H1495.10V1294.10H1496.22V1294.10H1497.35V1294.10H1498.47V1294.10H1499.59V1302.50H1500.71V1294.10H1501.83V1294.10H1502.95V1294.10H1504.08V1302.50H1505.20V1294.10H1506.32V1294.10H1507.44V1302.50H1508.56V1302.50H1509.68V1302.50H1510.81V1294.10H1511.93V1294.10H1513.05V1302.50H1514.17V1294.10H1515.29V1294.10H1516.41V1302.50H1517.54V1294.10H1518.66V1294.10H1519.78V1294.10H1520.90V1294.10H1522.02V1302.50H1523.15V1294.10H1524.27V1294.10H1525.39V1294.10H1526.51V1302.50H1527.63V1319.3ZM1675.70,1319.3V1294.10H1676.82V1294.10H1677.94V1294.10H1679.07V1294.10H1680.19V1302.50H1681.31V1302.50H1682.43V1294.10H1683.55V1294.10H1684.67V1294.10H1685.80V1294.10H1686.92V1294.10H1688.04V1302.50H1689.16V1294.10H1690.28V1302.50H1691.40V1302.50H1692.53V1294.10H1693.65V1294.10H1694.77V1294.10H1695.89V1302.50H1697.01V1294.10H1698.13V1294.10H1699.26V1302.50H1700.38V1302.50H1701.50V1294.10H1702.62V1294.10H1703.74V1294.10H1704.86V1302.50H1705.99V1294.10H1707.11V1294.10H1708.23V1294.10H1709.35V1294.10H1710.47V1294.10H1711.60V1294.10H1712.72V1302.50H1713.84V1294.10H1714.96V1294.10H1716.08V1294.10H1717.20V1294.10H1718.33V1294.10H1719.45V1294.10H1720.57V1294.10H1721.69V1302.50H1722.81V1294.10H1723.93V1294.10H1725.06V1294.10H1726.18V1294.10H1727.30V1294.10H1728.42V1302.50H1729.54V1302.50H1730.66V1294.10H1731.79V1302.50H1732.91V1294.10H1734.03V1294.10H1735.15V1302.50H1736.27V1302.50H1737.39V1302.50H1738.52V1294.10H1739.64V1294.10H1740.76V1294.10H1741.88V1302.50H1743.00V1294.10H1744.13V1302.50H1745.25V1294.10H1746.37V1294.10H1747.49V1302.50H1748.61V1294.10H1749.73V1294.10H1750.86V1294.10H1751.98V1294.10H1753.10V1294.10H1754.22V1294.10H1755.34V1294.10H1756.46V1294.10H1757.59V1294.10H1758.71V1302.50H1759.83V1294.10H1760.95V1294.10H1762.07V1294.10H1763.19V1302.50H1764.32V1302.50H1765.44V1294.10H1766.56V1294.10H1767.68V1294.10H1768.80V1294.10H1769.92V1294.10H1771.05V1294.10H1772.17V1302.50H1773.29V1294.10H1774.41V1294.10H1775.53V1294.10H1776.66V1294.10H1777.78V1294.10H1778.90V1294.10H1780.02V1294.10H1781.14V1294.10H1782.26V1302.50H1783.39V1294.10H1784.51V1294.10H1785.63V1302.50H1786.75V1294.10H1787.87V1294.10H1788.99V1294.10H1790.12V1294.10H1791.24V1294.10H1792.36V1294.10H1793.48V1294.10H1794.60V1294.10H1795.72V1294.10H1796.85V1302.50H1797.97V1302.50H1799.09V1294.10H1800.21V1302.50H1801.33V1294.10H1802.45V1294.10H1803.58V1302.50H1804.70V1294.10H1805.82V1302.50H1806.94V1294.10H1808.06V1294.10H1809.19V1294.10H1810.31V1294.10H1811.43V1294.10H1812.55V1302.50H1813.67V1302.50H1814.79V1294.10H1815.92V1302.50H1817.04V1294.10H1818.16V1294.10H1819.28V1294.10H1820.40V1294.10H1821.52V1302.50H1822.65V1294.10H1823.77V1302.50H1824.89V1294.10H1826.01V1294.10H1827.13V1294.10H1828.25V1302.50H1829.38V1294.10H1830.50V1302.50H1831.62V1294.10H1832.74V1294.10H1833.86V1294.10H1834.98V1294.10H1836.11V1302.50H1837.23V1302.50H1838.35V1302.50H1839.47V1294.10H1840.59V1294.10H1841.72V1294.10H1842.84V1294.10H1843.96V1302.50H1845.08V1302.50H1846.20V1294.10H1847.32V1302.50H1848.45V1294.10H1849.57V1302.50H1850.69V1319.3ZM1999.88,1319.3V1042.10H2001.00V1042.10H2002.12V1033.70H2003.24V1075.70H2004.37V1075.70H2005.49V1277.30H2006.61V1294.10H2007.73V1294.10H2008.85V1294.10H2009.97V1294.10H2011.10V1294.10H2012.22V1294.10H2013.34V1294.10H2014.46V1294.10H2015.58V1302.50H2016.70V1294.10H2017.83V1294.10H2018.95V1294.10H2020.07V1252.10H2021.19V1277.30H2022.31V1294.10H2023.43V1302.50H2024.56V1294.10H2025.68V1294.10H2026.80V1294.10H2027.92V1294.10H2029.04V1302.50H2030.17V1294.10H2031.29V1302.50H2032.41V1302.50H2033.53V1302.50H2034.65V1294.10H2035.77V1302.50H2036.90V1294.10H2038.02V1294.10H2039.14V1294.10H2040.26V1302.50H2041.38V1294.10H2042.50V1294.10H2043.63V1294.10H2044.75V1294.10H2045.87V1294.10H2046.99V1294.10H2048.11V1294.10H2049.23V1302.50H2050.36V1294.10H2051.48V1294.10H2052.60V1294.10H2053.72V1294.10H2054.84V1294.10H2055.97V1294.10H2057.09V1294.10H2058.21V1285.70H2059.33V1285.70H2060.45V1294.10H2061.57V1294.10H2062.70V1294.10H2063.82V1302.50H2064.94V1302.50H2066.06V1294.10H2067.18V1294.10H2068.30V1294.10H2069.43V1294.10H2070.55V1294.10H2071.67V1294.10H2072.79V1294.10H2073.91V1302.50H2075.03V1302.50H2076.16V1294.10H2077.28V1302.50H2078.40V1294.10H2079.52V1294.10H2080.64V1294.10H2081.76V1302.50H2082.89V1302.50H2084.01V1294.10H2085.13V1294.10H2086.25V1294.10H2087.37V1294.10H2088.50V1294.10H2089.62V1302.50H2090.74V1294.10H2091.86V1294.10H2092.98V1302.50H2094.10V1302.50H2095.23V1294.10H2096.35V1302.50H2097.47V1294.10H2098.59V1302.50H2099.71V1302.50H2100.83V1294.10H2101.96V1302.50H2103.08V1302.50H2104.20V1294.10H2105.32V1302.50H2106.44V1294.10H2107.56V1302.50H2108.69V1294.10H2109.81V1302.50H2110.93V1302.50H2112.05V1294.10H2113.17V1302.50H2114.29V1302.50H2115.42V1294.10H2116.54V1302.50H2117.66V1294.10H2118.78V1302.50H2119.90V1294.10H2121.03V1302.50H2122.15V1302.50H2123.27V1294.10H2124.39V1302.50H2125.51V1294.10H2126.63V1302.50H2127.76V1302.50H2128.88V1294.10H2130.00V1302.50H2131.12V1294.10H2132.24V1302.50H2133.36V1294.10H2134.49V1302.50H2135.61V1302.50H2136.73V1294.10H2137.85V1302.50H2138.97V1294.10H2140.09V1302.50H2141.22V1302.50H2142.34V1294.10H2143.46V1302.50H2144.58V1302.50H2145.70V1294.10H2146.82V1302.50H2147.95V1294.10H2149.07V1302.50H2150.19V1294.10H2151.31V1302.50H2152.43V1302.50H2153.56V1294.10H2154.68V1302.50H2155.80V1294.10H2156.92V1302.50H2158.04V1302.50H2159.16V1294.10H2160.29V1294.10H2161.41V1294.10H2162.53V1285.70H2163.65V1285.70H2164.77V1294.10H2165.89V1285.70H2167.02V1294.10H2168.14V1302.50H2169.26V1294.10H2170.38V1302.50H2171.50V1302.50H2172.62V1294.10H2173.75V1319.3ZM2321.81,1319.3V1134.50H2322.94V1050.50H2324.06V1210.10H2325.18V1294.10H2326.30V1302.50H2327.42V1302.50H2328.54V1294.10H2329.67V1302.50H2330.79V1294.10H2331.91V1302.50H2333.03V1302.50H2334.15V1294.10H2335.27V1302.50H2336.40V1294.10H2337.52V1302.50H2338.64V1302.50H2339.76V1294.10H2340.88V1302.50H2342.01V1302.50H2343.13V1302.50H2344.25V1294.10H2345.37V1302.50H2346.49V1302.50H2347.61V1302.50H2348.74V1294.10H2349.86V1302.50H2350.98V1302.50H2352.10V1302.50H2353.22V1294.10H2354.34V1302.50H2355.47V1302.50H2356.59V1302.50H2357.71V1302.50H2358.83V1294.10H2359.95V1302.50H2361.07V1302.50H2362.20V1302.50H2363.32V1302.50H2364.44V1302.50H2365.56V1294.10H2366.68V1302.50H2367.80V1302.50H2368.93V1302.50H2370.05V1302.50H2371.17V1302.50H2372.29V1302.50H2373.41V1302.50H2374.54V1294.10H2375.66V1302.50H2376.78V1302.50H2377.90V1302.50H2379.02V1302.50H2380.14V1302.50H2381.27V1302.50H2382.39V1302.50H2383.51V1294.10H2384.63V1302.50H2385.75V1302.50H2386.87V1302.50H2388.00V1302.50H2389.12V1302.50H2390.24V1302.50H2391.36V1302.50H2392.48V1302.50H2393.60V1302.50H2394.73V1294.10H2395.85V1302.50H2396.97V1302.50H2398.09V1302.50H2399.21V1302.50H2400.33V1302.50H2401.46V1302.50H2402.58V1302.50H2403.70V1302.50H2404.82V1302.50H2405.94V1302.50H2407.07V1294.10H2408.19V1302.50H2409.31V1302.50H2410.43V1302.50H2411.55V1302.50H2412.67V1302.50H2413.80V1302.50H2414.92V1302.50H2416.04V1319.3Z" fill="#9eecc1"/>
<path d="M155.20,1319.3V1294.10H155.76V1302.50H156.88V1302.50H158.00V1302.50H159.13V1302.50H160.25V1302.50H161.37V1302.50H162.49V1302.50H163.61V1302.50H164.73V1302.50H165.86V1302.50H166.98V1302.50H168.10V1302.50H169.22V1294.10H170.34V1302.50H171.47V1294.10H172.59V1302.50H173.71V1302.50H174.83V1302.50H175.95V1302.50H177.07V1302.50H178.20V1302.50H179.32V1302.50H180.44V1302.50H181.56V1294.10H182.68V1302.50H183.80V1302.50H184.93V1302.50H186.05V1302.50H187.17V1302.50H188.29V1302.50H189.41V1302.50H190.53V1294.10H191.66V1302.50H192.78V1302.50H193.90V1302.50H195.02V1302.50H196.14V1302.50H197.26V1294.10H198.39V1302.50H199.51V1294.10H200.63V1302.50H201.75V1302.50H202.87V1302.50H204.00V1302.50H205.12V1302.50H206.24V1302.50H207.36V1302.50H208.48V1302.50H209.60V1294.10H210.73V1302.50H211.85V1302.50H212.97V1302.50H214.09V1302.50H215.21V1302.50H216.33V1302.50H217.46V1294.10H218.58V1302.50H219.70V1302.50H220.82V1302.50H221.94V1302.50H223.06V1302.50H224.19V1302.50H225.31V1302.50H226.43V1302.50H227.55V1294.10H228.67V1302.50H229.79V1294.10H230.92V1302.50H232.04V1302.50H233.16V1302.50H234.28V1294.10H235.40V1302.50H236.53V1319.3ZM383.47,1319.3V1184.90H384.59V1184.90H385.71V1176.50H386.84V1176.50H387.96V1176.50H389.08V1176.50H390.20V1184.90H391.32V1235.30H392.45V1235.30H393.57V1226.90H394.69V1226.90H395.81V1226.90H396.93V1226.90H398.05V1226.90H399.18V1226.90H400.30V1226.90H401.42V1226.90H402.54V1226.90H403.66V1226.90H404.78V1226.90H405.91V1226.90H407.03V1226.90H408.15V1226.90H409.27V1226.90H410.39V1235.30H411.51V1235.30H412.64V1235.30H413.76V1235.30H414.88V1235.30H416.00V1235.30H417.12V1235.30H418.24V1285.70H419.37V1302.50H420.49V1302.50H421.61V1302.50H422.73V1302.50H423.85V1302.50H424.98V1302.50H426.10V1302.50H427.22V1294.10H428.34V1302.50H429.46V1302.50H430.58V1302.50H431.71V1302.50H432.83V1302.50H433.95V1302.50H435.07V1302.50H436.19V1302.50H437.31V1302.50H438.44V1302.50H439.56V1302.50H440.68V1294.10H441.80V1302.50H442.92V1302.50H444.04V1302.50H445.17V1302.50H446.29V1294.10H447.41V1302.50H448.53V1294.10H449.65V1302.50H450.77V1302.50H451.90V1302.50H453.02V1302.50H454.14V1302.50H455.26V1302.50H456.38V1302.50H457.51V1302.50H458.63V1302.50H459.75V1302.50H460.87V1294.10H461.99V1302.50H463.11V1302.50H464.24V1302.50H465.36V1302.50H466.48V1302.50H467.60V1302.50H468.72V1302.50H469.84V1302.50H470.97V1302.50H472.09V1302.50H473.21V1302.50H474.33V1302.50H475.45V1294.10H476.57V1302.50H477.70V1302.50H478.82V1302.50H479.94V1302.50H481.06V1302.50H482.18V1302.50H483.30V1302.50H484.43V1302.50H485.55V1294.10H486.67V1302.50H487.79V1302.50H488.91V1302.50H490.04V1302.50H491.16V1302.50H492.28V1302.50H493.40V1302.50H494.52V1302.50H495.64V1302.50H496.77V1302.50H497.89V1294.10H499.01V1302.50H500.13V1302.50H501.25V1302.50H502.37V1302.50H503.50V1302.50H504.62V1302.50H505.74V1302.50H506.86V1302.50H507.98V1302.50H509.10V1302.50H510.23V1302.50H511.35V1302.50H512.47V1294.10H513.59V1302.50H514.71V1294.10H515.83V1302.50H516.96V1302.50H518.08V1302.50H519.20V1302.50H520.32V1302.50H521.44V1302.50H522.57V1302.50H523.69V1302.50H524.81V1302.50H525.93V1294.10H527.05V1302.50H528.17V1302.50H529.30V1302.50H530.42V1302.50H531.54V1302.50H532.66V1302.50H533.78V1302.50H534.90V1302.50H536.03V1302.50H537.15V1302.50H538.27V1302.50H539.39V1302.50H540.51V1294.10H541.63V1302.50H542.76V1302.50H543.88V1302.50H545.00V1302.50H546.12V1294.10H547.24V1302.50H548.37V1302.50H549.49V1302.50H550.61V1302.50H551.73V1302.50H552.85V1294.10H553.97V1302.50H555.10V1294.10H556.22V1302.50H557.34V1294.10H558.46V1302.50H559.58V1302.50H560.70V1302.50H561.83V1302.50H562.95V1302.50H564.07V1302.50H565.19V1302.50H566.31V1302.50H567.43V1302.50H568.56V1294.10H569.68V1302.50H570.80V1302.50H571.92V1302.50H573.04V1302.50H574.16V1302.50H575.29V1302.50H576.41V1302.50H577.53V1302.50H578.65V1302.50H579.77V1302.50H580.90V1302.50H582.02V1302.50H583.14V1294.10H584.26V1294.10H585.38V1285.70H586.50V1294.10H587.63V1302.50H588.75V1302.50H589.87V1302.50H590.99V1302.50H592.11V1302.50H593.23V1302.50H594.36V1302.50H595.48V1302.50H596.60V1302.50H597.72V1294.10H598.84V1302.50H599.96V1294.10H601.09V1302.50H602.21V1302.50H603.33V1302.50H604.45V1302.50H605.57V1302.50H606.69V1302.50H607.82V1302.50H608.94V1302.50H610.06V1302.50H611.18V1294.10H612.30V1302.50H613.43V1294.10H614.55V1302.50H615.67V1294.10H616.79V1302.50H617.91V1294.10H619.03V1302.50H620.16V1302.50H621.28V1302.50H622.40V1302.50H623.52V1294.10H624.64V1302.50H625.76V1302.50H626.89V1302.50H628.01V1302.50H629.13V1302.50H630.25V1302.50H631.37V1302.50H632.49V1302.50H633.62V1302.50H634.74V1302.50H635.86V1294.10H636.98V1302.50H638.10V1302.50H639.22V1302.50H640.35V1302.50H641.47V1302.50H642.59V1302.50H643.71V1302.50H644.83V1302.50H645.96V1302.50H647.08V1302.50H648.20V1302.50H649.32V1302.50H650.44V1294.10H651.56V1302.50H652.69V1302.50H653.81V1302.50H654.93V1302.50H656.05V1302.50H657.17V1302.50H658.29V1302.50H659.42V1302.50H660.54V1302.50H661.66V1302.50H662.78V1302.50H663.90V1294.10H665.02V1302.50H666.15V1294.10H667.27V1302.50H668.39V1302.50H669.51V1302.50H670.63V1302.50H671.75V1302.50H672.88V1294.10H674.00V1302.50H675.12V1302.50H676.24V1302.50H677.36V1302.50H678.49V1294.10H679.61V1285.70H680.73V1294.10H681.85V1302.50H682.97V1302.50H684.09V1302.50H685.22V1302.50H686.34V1302.50H687.46V1294.10H688.58V1302.50H689.70V1302.50H690.82V1302.50H691.95V1302.50H693.07V1302.50H694.19V1302.50H695.31V1302.50H696.43V1302.50H697.55V1302.50H698.68V1302.50H699.80V1302.50H700.92V1294.10H702.04V1302.50H703.16V1302.50H704.28V1302.50H705.41V1302.50H706.53V1294.10H707.65V1302.50H708.77V1302.50H709.89V1302.50H711.02V1302.50H712.14V1302.50H713.26V1302.50H714.38V1302.50H715.50V1302.50H716.62V1294.10H717.75V1302.50H718.87V1302.50H719.99V1302.50H721.11V1302.50H722.23V1302.50H723.35V1302.50H724.48V1302.50H725.60V1302.50H726.72V1302.50H727.84V1302.50H728.96V1302.50H730.08V1294.10H731.21V1302.50H732.33V1302.50H733.45V1302.50H734.57V1302.50H735.69V1294.10H736.82V1302.50H737.94V1302.50H739.06V1302.50H740.18V1302.50H741.30V1294.10H742.42V1302.50H743.55V1302.50H744.67V1302.50H745.79V1302.50H746.91V1302.50H748.03V1302.50H749.15V1302.50H750.28V1294.10H751.40V1302.50H752.52V1302.50H753.64V1302.50H754.76V1294.10H755.88V1302.50H757.01V1302.50H758.13V1302.50H759.25V1294.10H760.37V1302.50H761.49V1294.10H762.61V1302.50H763.74V1294.10H764.86V1302.50H765.98V1302.50H767.10V1302.50H768.22V1302.50H769.35V1302.50H770.47V1302.50H771.59V1302.50H772.71V1302.50H773.83V1302.50H774.95V1294.10H776.08V1302.50H777.20V1302.50H778.32V1302.50H779.44V1302.50H780.56V1302.50H781.68V1302.50H782.81V1302.50H783.93V1302.50H785.05V1302.50H786.17V1302.50H787.29V1302.50H788.41V1302.50H789.54V1294.10H790.66V1302.50H791.78V1302.50H792.90V1302.50H794.02V1302.50H795.14V1302.50H796.27V1302.50H797.39V1302.50H798.51V1294.10H799.63V1302.50H800.75V1302.50H801.88V1302.50H803.00V1302.50H804.12V1302.50H805.24V1302.50H806.36V1302.50H807.48V1302.50H808.61V1294.10H809.73V1302.50H810.85V1302.50H811.97V1302.50H813.09V1302.50H814.21V1302.50H815.34V1302.50H816.46V1302.50H817.58V1302.50H818.70V1302.50H819.82V1302.50H820.94V1302.50H822.07V1294.10H823.19V1285.70H824.31V1294.10H825.43V1302.50H826.55V1302.50H827.67V1302.50H828.80V1294.10H829.92V1302.50H831.04V1302.50H832.16V1302.50H833.28V1302.50H834.41V1302.50H835.53V1302.50H836.65V1302.50H837.77V1302.50H838.89V1294.10H840.01V1302.50H841.14V1302.50H842.26V1302.50H843.38V1302.50H844.50V1302.50H845.62V1302.50H846.74V1302.50H847.87V1302.50H848.99V1302.50H850.11V1302.50H851.23V1294.10H852.35V1302.50H853.47V1302.50H854.60V1302.50H855.72V1302.50H856.84V1302.50H857.96V1302.50H859.08V1302.50H860.20V1302.50H861.33V1302.50H862.45V1302.50H863.57V1302.50H864.69V1302.50H865.81V1294.10H866.94V1302.50H868.06V1294.10H869.18V1302.50H870.30V1294.10H871.42V1302.50H872.54V1302.50H873.67V1302.50H874.79V1302.50H875.91V1302.50H877.03V1294.10H878.15V1302.50H879.27V1302.50H880.40V1302.50H881.52V1302.50H882.64V1302.50H883.76V1302.50H884.88V1302.50H886.00V1302.50H887.13V1294.10H888.25V1302.50H889.37V1294.10H890.49V1302.50H891.61V1302.50H892.73V1302.50H893.86V1302.50H894.98V1294.10H896.10V1302.50H897.22V1294.10H898.34V1302.50H899.47V1302.50H900.59V1302.50H901.71V1302.50H902.83V1294.10H903.95V1302.50H905.07V1294.10H906.20V1302.50H907.32V1302.50H908.44V1302.50H909.56V1302.50H910.68V1302.50H911.80V1302.50H912.93V1294.10H914.05V1302.50H915.17V1302.50H916.29V1302.50H917.41V1302.50H918.53V1294.10H919.66V1302.50H920.78V1294.10H921.90V1302.50H923.02V1294.10H924.14V1302.50H925.27V1302.50H926.39V1302.50H927.51V1302.50H928.63V1302.50H929.75V1302.50H930.87V1302.50H932.00V1302.50H933.12V1302.50H934.24V1302.50H935.36V1302.50H936.48V1294.10H937.60V1302.50H938.73V1294.10H939.85V1302.50H940.97V1302.50H942.09V1302.50H943.21V1302.50H944.33V1302.50H945.46V1302.50H946.58V1302.50H947.70V1294.10H948.82V1302.50H949.94V1302.50H951.06V1302.50H952.19V1302.50H953.31V1294.10H954.43V1302.50H955.55V1302.50H956.67V1302.50H957.80V1302.50H958.92V1302.50H960.04V1294.10H961.16V1302.50H962.28V1302.50H963.40V1302.50H964.53V1302.50H965.65V1302.50H966.77V1302.50H967.89V1302.50H969.01V1285.70H970.13V1294.10H971.26V1302.50H972.38V1302.50H973.50V1302.50H974.62V1294.10H975.74V1302.50H976.86V1302.50H977.99V1302.50H979.11V1294.10H980.23V1302.50H981.35V1302.50H982.47V1302.50H983.59V1302.50H984.72V1302.50H985.84V1302.50H986.96V1302.50H988.08V1302.50H989.20V1302.50H990.33V1302.50H991.45V1302.50H992.57V1294.10H993.69V1302.50H994.81V1302.50H995.93V1302.50H997.06V1302.50H998.18V1302.50H999.30V1302.50H1000.42V1302.50H1001.54V1302.50H1002.66V1302.50H1003.79V1294.10H1004.91V1302.50H1006.03V1302.50H1007.15V1302.50H1008.27V1302.50H1009.39V1302.50H1010.52V1302.50H1011.64V1302.50H1012.76V1302.50H1013.88V1302.50H1015.00V1302.50H1016.12V1302.50H1017.25V1302.50H1018.37V1294.10H1019.49V1302.50H1020.61V1302.50H1021.73V1302.50H1022.86V1302.50H1023.98V1302.50H1025.10V1302.50H1026.22V1302.50H1027.34V1302.50H1028.46V1302.50H1029.59V1302.50H1030.71V1302.50H1031.83V1302.50H1032.95V1294.10H1034.07V1302.50H1035.19V1302.50H1036.32V1302.50H1037.44V1294.10H1038.56V1302.50H1039.68V1302.50H1040.80V1302.50H1041.92V1302.50H1043.05V1294.10H1044.17V1302.50H1045.29V1302.50H1046.41V1302.50H1047.53V1302.50H1048.65V1302.50H1049.78V1302.50H1050.90V1302.50H1052.02V1294.10H1053.14V1302.50H1054.26V1302.50H1055.39V1302.50H1056.51V1302.50H1057.63V1302.50H1058.75V1302.50H1059.87V1302.50H1060.99V1302.50H1062.12V1294.10H1063.24V1302.50H1064.36V1302.50H1065.48V1302.50H1066.60V1302.50H1067.72V1302.50H1068.85V1302.50H1069.97V1302.50H1071.09V1302.50H1072.21V1302.50H1073.33V1294.10H1074.45V1294.10H1075.58V1285.70H1076.70V1302.50H1077.82V1302.50H1078.94V1294.10H1080.06V1302.50H1081.18V1302.50H1082.31V1302.50H1083.43V1302.50H1084.55V1302.50H1085.67V1302.50H1086.79V1302.50H1087.92V1302.50H1089.04V1294.10H1090.16V1302.50H1091.28V1302.50H1092.40V1302.50H1093.52V1302.50H1094.65V1302.50H1095.77V1302.50H1096.89V1302.50H1098.01V1302.50H1099.13V1302.50H1100.25V1302.50H1101.38V1302.50H1102.50V1294.10H1103.62V1302.50H1104.74V1302.50H1105.86V1302.50H1106.98V1302.50H1108.11V1302.50H1109.23V1302.50H1110.35V1302.50H1111.47V1302.50H1112.59V1302.50H1113.72V1302.50H1114.84V1302.50H1115.96V1294.10H1117.08V1302.50H1118.20V1294.10H1119.32V1302.50H1120.45V1302.50H1121.57V1302.50H1122.69V1302.50H1123.81V1302.50H1124.93V1302.50H1126.05V1302.50H1127.18V1302.50H1128.30V1294.10H1129.42V1302.50H1130.54V1302.50H1131.66V1302.50H1132.78V1302.50H1133.91V1302.50H1135.03V1294.10H1136.15V1302.50H1137.27V1302.50H1138.39V1302.50H1139.51V1302.50H1140.64V1302.50H1141.76V1294.10H1142.88V1302.50H1144.00V1302.50H1145.12V1302.50H1146.25V1302.50H1147.37V1302.50H1148.49V1294.10H1149.61V1302.50H1150.73V1294.10H1151.85V1302.50H1152.98V1302.50H1154.10V1302.50H1155.22V1302.50H1156.34V1302.50H1157.46V1302.50H1158.58V1302.50H1159.71V1302.50H1160.83V1302.50H1161.95V1294.10H1163.07V1302.50H1164.19V1302.50H1165.31V1302.50H1166.44V1302.50H1167.56V1302.50H1168.68V1302.50H1169.80V1302.50H1170.92V1294.10H1172.04V1302.50H1173.17V1294.10H1174.29V1302.50H1175.41V1302.50H1176.53V1302.50H1177.65V1294.10H1178.78V1302.50H1179.90V1302.50H1181.02V1302.50H1182.14V1302.50H1183.26V1302.50H1184.38V1302.50H1185.51V1302.50H1186.63V1302.50H1187.75V1302.50H1188.87V1302.50H1189.99V1302.50H1191.11V1302.50H1192.24V1294.10H1193.36V1302.50H1194.48V1302.50H1195.60V1302.50H1196.72V1302.50H1197.84V1302.50H1198.97V1302.50H1200.09V1302.50H1201.21V1294.10H1202.33V1294.10H1203.45V1294.10H1204.57V1319.3ZM1352.64,1319.3V1067.30H1353.76V1100.90H1354.89V1168.10H1356.01V1294.10H1357.13V1294.10H1358.25V1294.10H1359.37V1294.10H1360.49V1294.10H1361.62V1294.10H1362.74V1294.10H1363.86V1294.10H1364.98V1302.50H1366.10V1294.10H1367.23V1294.10H1368.35V1294.10H1369.47V1294.10H1370.59V1294.10H1371.71V1294.10H1372.83V1294.10H1373.96V1294.10H1375.08V1302.50H1376.20V1294.10H1377.32V1294.10H1378.44V1294.10H1379.56V1294.10H1380.69V1294.10H1381.81V1294.10H1382.93V1294.10H1384.05V1294.10H1385.17V1294.10H1386.29V1294.10H1387.42V1294.10H1388.54V1294.10H1389.66V1294.10H1390.78V1294.10H1391.90V1302.50H1393.02V1294.10H1394.15V1294.10H1395.27V1294.10H1396.39V1294.10H1397.51V1294.10H1398.63V1302.50H1399.76V1294.10H1400.88V1294.10H1402.00V1294.10H1403.12V1294.10H1404.24V1294.10H1405.36V1294.10H1406.49V1294.10H1407.61V1294.10H1408.73V1294.10H1409.85V1302.50H1410.97V1294.10H1412.09V1294.10H1413.22V1294.10H1414.34V1302.50H1415.46V1294.10H1416.58V1294.10H1417.70V1294.10H1418.82V1294.10H1419.95V1294.10H1421.07V1294.10H1422.19V1294.10H1423.31V1294.10H1424.43V1294.10H1425.55V1302.50H1426.68V1294.10H1427.80V1294.10H1428.92V1294.10H1430.04V1294.10H1431.16V1302.50H1432.29V1294.10H1433.41V1294.10H1434.53V1294.10H1435.65V1294.10H1436.77V1294.10H1437.89V1294.10H1439.02V1302.50H1440.14V1294.10H1441.26V1294.10H1442.38V1302.50H1443.50V1294.10H1444.62V1294.10H1445.75V1294.10H1446.87V1294.10H1447.99V1294.10H1449.11V1294.10H1450.23V1294.10H1451.35V1294.10H1452.48V1294.10H1453.60V1294.10H1454.72V1294.10H1455.84V1294.10H1456.96V1294.10H1458.08V1294.10H1459.21V1294.10H1460.33V1294.10H1461.45V1294.10H1462.57V1294.10H1463.69V1302.50H1464.82V1294.10H1465.94V1294.10H1467.06V1294.10H1468.18V1302.50H1469.30V1302.50H1470.42V1294.10H1471.55V1302.50H1472.67V1294.10H1473.79V1294.10H1474.91V1294.10H1476.03V1302.50H1477.15V1302.50H1478.28V1294.10H1479.40V1294.10H1480.52V1294.10H1481.64V1294.10H1482.76V1294.10H1483.88V1294.10H1485.01V1294.10H1486.13V1294.10H1487.25V1294.10H1488.37V1302.50H1489.49V1302.50H1490.62V1294.10H1491.74V1294.10H1492.86V1294.10H1493.98V1294.10H1495.10V1294.10H1496.22V1294.10H1497.35V1294.10H1498.47V1294.10H1499.59V1302.50H1500.71V1294.10H1501.83V1294.10H1502.95V1294.10H1504.08V1302.50H1505.20V1294.10H1506.32V1294.10H1507.44V1302.50H1508.56V1302.50H1509.68V1302.50H1510.81V1294.10H1511.93V1294.10H1513.05V1302.50H1514.17V1294.10H1515.29V1294.10H1516.41V1302.50H1517.54V1294.10H1518.66V1294.10H1519.78V1294.10H1520.90V1294.10H1522.02V1302.50H1523.15V1294.10H1524.27V1294.10H1525.39V1294.10H1526.51V1302.50H1527.63V1319.3ZM1675.70,1319.3V1294.10H1676.82V1294.10H1677.94V1294.10H1679.07V1294.10H1680.19V1302.50H1681.31V1302.50H1682.43V1294.10H1683.55V1294.10H1684.67V1294.10H1685.80V1294.10H1686.92V1294.10H1688.04V1302.50H1689.16V1294.10H1690.28V1302.50H1691.40V1302.50H1692.53V1294.10H1693.65V1294.10H1694.77V1294.10H1695.89V1302.50H1697.01V1294.10H1698.13V1294.10H1699.26V1302.50H1700.38V1302.50H1701.50V1294.10H1702.62V1294.10H1703.74V1294.10H1704.86V1302.50H1705.99V1294.10H1707.11V1294.10H1708.23V1294.10H1709.35V1294.10H1710.47V1294.10H1711.60V1294.10H1712.72V1302.50H1713.84V1294.10H1714.96V1294.10H1716.08V1294.10H1717.20V1294.10H1718.33V1294.10H1719.45V1294.10H1720.57V1294.10H1721.69V1302.50H1722.81V1294.10H1723.93V1294.10H1725.06V1294.10H1726.18V1294.10H1727.30V1294.10H1728.42V1302.50H1729.54V1302.50H1730.66V1294.10H1731.79V1302.50H1732.91V1294.10H1734.03V1294.10H1735.15V1302.50H1736.27V1302.50H1737.39V1302.50H1738.52V1294.10H1739.64V1294.10H1740.76V1294.10H1741.88V1302.50H1743.00V1294.10H1744.13V1302.50H1745.25V1294.10H1746.37V1294.10H1747.49V1302.50H1748.61V1294.10H1749.73V1294.10H1750.86V1294.10H1751.98V1294.10H1753.10V1294.10H1754.22V1294.10H1755.34V1294.10H1756.46V1294.10H1757.59V1294.10H1758.71V1302.50H1759.83V1294.10H1760.95V1294.10H1762.07V1294.10H1763.19V1302.50H1764.32V1302.50H1765.44V1294.10H1766.56V1294.10H1767.68V1294.10H1768.80V1294.10H1769.92V1294.10H1771.05V1294.10H1772.17V1302.50H1773.29V1294.10H1774.41V1294.10H1775.53V1294.10H1776.66V1294.10H1777.78V1294.10H1778.90V1294.10H1780.02V1294.10H1781.14V1294.10H1782.26V1302.50H1783.39V1294.10H1784.51V1294.10H1785.63V1302.50H1786.75V1294.10H1787.87V1294.10H1788.99V1294.10H1790.12V1294.10H1791.24V1294.10H1792.36V1294.10H1793.48V1294.10H1794.60V1294.10H1795.72V1294.10H1796.85V1302.50H1797.97V1302.50H1799.09V1294.10H1800.21V1302.50H1801.33V1294.10H1802.45V1294.10H1803.58V1302.50H1804.70V1294.10H1805.82V1302.50H1806.94V1294.10H1808.06V1294.10H1809.19V1294.10H1810.31V1294.10H1811.43V1294.10H1812.55V1302.50H1813.67V1302.50H1814.79V1294.10H1815.92V1302.50H1817.04V1294.10H1818.16V1294.10H1819.28V1294.10H1820.40V1294.10H1821.52V1302.50H1822.65V1294.10H1823.77V1302.50H1824.89V1294.10H1826.01V1294.10H1827.13V1294.10H1828.25V1302.50H1829.38V1294.10H1830.50V1302.50H1831.62V1294.10H1832.74V1294.10H1833.86V1294.10H1834.98V1294.10H1836.11V1302.50H1837.23V1302.50H1838.35V1302.50H1839.47V1294.10H1840.59V1294.10H1841.72V1294.10H1842.84V1294.10H1843.96V1302.50H1845.08V1302.50H1846.20V1294.10H1847.32V1302.50H1848.45V1294.10H1849.57V1302.50H1850.69V1319.3ZM1999.88,1319.3V1042.10H2001.00V1042.10H2002.12V1033.70H2003.24V1075.70H2004.37V1075.70H2005.49V1277.30H2006.61V1294.10H2007.73V1294.10H2008.85V1294.10H2009.97V1294.10H2011.10V1294.10H2012.22V1294.10H2013.34V1294.10H2014.46V1294.10H2015.58V1302.50H2016.70V1294.10H2017.83V1294.10H2018.95V1294.10H2020.07V1252.10H2021.19V1277.30H2022.31V1294.10H2023.43V1302.50H2024.56V1294.10H2025.68V1294.10H2026.80V1294.10H2027.92V1294.10H2029.04V1302.50H2030.17V1294.10H2031.29V1302.50H2032.41V1302.50H2033.53V1302.50H2034.65V1294.10H2035.77V1302.50H2036.90V1294.10H2038.02V1294.10H2039.14V1294.10H2040.26V1302.50H2041.38V1294.10H2042.50V1294.10H2043.63V1294.10H2044.75V1294.10H2045.87V1294.10H2046.99V1294.10H2048.11V1294.10H2049.23V1302.50H2050.36V1294.10H2051.48V1294.10H2052.60V1294.10H2053.72V1294.10H2054.84V1294.10H2055.97V1294.10H2057.09V1294.10H2058.21V1285.70H2059.33V1285.70H2060.45V1294.10H2061.57V1294.10H2062.70V1294.10H2063.82V1302.50H2064.94V1302.50H2066.06V1294.10H2067.18V1294.10H2068.30V1294.10H2069.43V1294.10H2070.55V1294.10H2071.67V1294.10H2072.79V1294.10H2073.91V1302.50H2075.03V1302.50H2076.16V1294.10H2077.28V1302.50H2078.40V1294.10H2079.52V1294.10H2080.64V1294.10H2081.76V1302.50H2082.89V1302.50H2084.01V1294.10H2085.13V1294.10H2086.25V1294.10H2087.37V1294.10H2088.50V1294.10H2089.62V1302.50H2090.74V1294.10H2091.86V1294.10H2092.98V1302.50H2094.10V1302.50H2095.23V1294.10H2096.35V1302.50H2097.47V1294.10H2098.59V1302.50H2099.71V1302.50H2100.83V1294.10H2101.96V1302.50H2103.08V1302.50H2104.20V1294.10H2105.32V1302.50H2106.44V1294.10H2107.56V1302.50H2108.69V1294.10H2109.81V1302.50H2110.93V1302.50H2112.05V1294.10H2113.17V1302.50H2114.29V1302.50H2115.42V1294.10H2116.54V1302.50H2117.66V1294.10H2118.78V1302.50H2119.90V1294.10H2121.03V1302.50H2122.15V1302.50H2123.27V1294.10H2124.39V1302.50H2125.51V1294.10H2126.63V1302.50H2127.76V1302.50H2128.88V1294.10H2130.00V1302.50H2131.12V1294.10H2132.24V1302.50H2133.36V1294.10H2134.49V1302.50H2135.61V1302.50H2136.73V1294.10H2137.85V1302.50H2138.97V1294.10H2140.09V1302.50H2141.22V1302.50H2142.34V1294.10H2143.46V1302.50H2144.58V1302.50H2145.70V1294.10H2146.82V1302.50H2147.95V1294.10H2149.07V1302.50H2150.19V1294.10H2151.31V1302.50H2152.43V1302.50H2153.56V1294.10H2154.68V1302.50H2155.80V1294.10H2156.92V1302.50H2158.04V1302.50H2159.16V1294.10H2160.29V1294.10H2161.41V1294.10H2162.53V1285.70H2163.65V1285.70H2164.77V1294.10H2165.89V1285.70H2167.02V1294.10H2168.14V1302.50H2169.26V1294.10H2170.38V1302.50H2171.50V1302.50H2172.62V1294.10H2173.75V1319.3ZM2321.81,1319.3V1134.50H2322.94V1050.50H2324.06V1210.10H2325.18V1294.10H2326.30V1302.50H2327.42V1302.50H2328.54V1294.10H2329.67V1302.50H2330.79V1294.10H2331.91V1302.50H2333.03V1302.50H2334.15V1294.10H2335.27V1302.50H2336.40V1294.10H2337.52V1302.50H2338.64V1302.50H2339.76V1294.10H2340.88V1302.50H2342.01V1302.50H2343.13V1302.50H2344.25V1294.10H2345.37V1302.50H2346.49V1302.50H2347.61V1302.50H2348.74V1294.10H2349.86V1302.50H2350.98V1302.50H2352.10V1302.50H2353.22V1294.10H2354.34V1302.50H2355.47V1302.50H2356.59V1302.50H2357.71V1302.50H2358.83V1294.10H2359.95V1302.50H2361.07V1302.50H2362.20V1302.50H2363.32V1302.50H2364.44V1302.50H2365.56V1294.10H2366.68V1302.50H2367.80V1302.50H2368.93V1302.50H2370.05V1302.50H2371.17V1302.50H2372.29V1302.50H2373.41V1302.50H2374.54V1294.10H2375.66V1302.50H2376.78V1302.50H2377.90V1302.50H2379.02V1302.50H2380.14V1302.50H2381.27V1302.50H2382.39V1302.50H2383.51V1294.10H2384.63V1302.50H2385.75V1302.50H2386.87V1302.50H2388.00V1302.50H2389.12V1302.50H2390.24V1302.50H2391.36V1302.50H2392.48V1302.50H2393.60V1302.50H2394.73V1294.10H2395.85V1302.50H2396.97V1302.50H2398.09V1302.50H2399.21V1302.50H2400.33V1302.50H2401.46V1302.50H2402.58V1302.50H2403.70V1302.50H2404.82V1302.50H2405.94V1302.50H2407.07V1294.10H2408.19V1302.50H2409.31V1302.50H2410.43V1302.50H2411.55V1302.50H2412.67V1302.50H2413.80V1302.50H2414.92V1302.50H2416.04V1319.3Z" fill="url(#stripes)"/>
<path d="M236.53,1319.3V1294.10H237.65V1302.50H238.77V1294.10H239.89V1302.50H241.01V1294.10H242.13V1302.50H243.26V1294.10H244.38V1302.50H245.50V1294.10H246.62V1302.50H247.74V1294.10H248.86V1235.30H249.99V1201.70H251.11V1201.70H252.23V1184.90H253.35V1050.50H254.47V1050.50H255.59V1067.30H256.72V1025.30H257.84V1025.30H258.96V1008.50H260.08V1134.50H261.20V1142.90H262.32V1008.50H263.45V1033.70H264.57V1033.70H265.69V983.30H266.81V991.70H267.93V991.70H269.06V1050.50H270.18V958.10H271.30V899.30H272.42V899.30H273.54V983.30H274.66V1201.70H275.79V1134.50H276.91V1193.30H278.03V1277.30H279.15V1260.50H280.27V1075.70H281.39V1033.70H282.52V1033.70H283.64V1168.10H284.76V1168.10H285.88V1168.10H287.00V1193.30H288.12V1134.50H289.25V1201.70H290.37V1042.10H291.49V1016.90H292.61V1016.90H293.73V932.90H294.85V1000.10H295.98V1000.10H297.10V1033.70H298.22V1168.10H299.34V1168.10H300.46V1252.10H301.59V1210.10H302.71V1210.10H303.83V1117.70H304.95V1176.50H306.07V1126.10H307.19V1117.70H308.32V1134.50H309.44V1134.50H310.56V1159.70H311.68V1193.30H312.80V1193.30H313.92V1193.30H315.05V1193.30H316.17V1193.30H317.29V1193.30H318.41V1168.10H319.53V1193.30H320.65V1193.30H321.78V1134.50H322.90V1042.10H324.02V1042.10H325.14V882.50H326.26V1151.30H327.38V1084.10H328.51V1193.30H329.63V1201.70H330.75V1168.10H331.87V1168.10H332.99V1142.90H334.12V1142.90H335.24V1042.10H336.36V1025.30H337.48V1025.30H338.60V1067.30H339.72V1151.30H340.85V1151.30H341.97V1159.70H343.09V1184.90H344.21V1184.90H345.33V1210.10H346.45V1268.90H347.58V1268.90H348.70V1100.90H349.82V1084.10H350.94V1126.10H352.06V1168.10H353.18V1084.10H354.31V1084.10H355.43V1109.30H356.55V1235.30H357.67V1218.50H358.79V1243.70H359.92V1168.10H361.04V1176.50H362.16V1201.70H363.28V1168.10H364.40V1159.70H365.52V1201.70H366.65V1176.50H367.77V1193.30H368.89V1193.30H370.01V1218.50H371.13V1226.90H372.25V1226.90H373.38V1134.50H374.50V1210.10H375.62V1210.10H376.74V1201.70H377.86V1168.10H378.98V1168.10H380.11V1193.30H381.23V1193.30H382.35V1193.30H383.47V1319.3ZM1204.57,1319.3V1302.50H1205.70V1294.10H1206.82V1294.10H1207.94V1302.50H1209.06V1294.10H1210.18V1294.10H1211.31V1302.50H1212.43V1294.10H1213.55V1294.10H1214.67V1302.50H1215.79V1294.10H1216.91V1294.10H1218.04V1294.10H1219.16V1260.50H1220.28V1058.90H1221.40V1058.90H1222.52V1075.70H1223.64V1084.10H1224.77V1084.10H1225.89V1151.30H1227.01V1218.50H1228.13V1218.50H1229.25V1201.70H1230.37V1235.30H1231.50V1226.90H1232.62V1235.30H1233.74V1193.30H1234.86V1126.10H1235.98V1126.10H1237.10V1193.30H1238.23V1243.70H1239.35V1235.30H1240.47V1117.70H1241.59V1025.30H1242.71V1025.30H1243.84V899.30H1244.96V874.10H1246.08V874.10H1247.20V991.70H1248.32V1226.90H1249.44V1226.90H1250.57V1058.90H1251.69V1025.30H1252.81V1025.30H1253.93V1117.70H1255.05V1193.30H1256.17V1176.50H1257.30V1218.50H1258.42V1142.90H1259.54V1142.90H1260.66V1168.10H1261.78V1050.50H1262.90V1050.50H1264.03V1067.30H1265.15V1176.50H1266.27V1176.50H1267.39V1033.70H1268.51V1025.30H1269.63V1025.30H1270.76V1033.70H1271.88V966.50H1273.00V966.50H1274.12V1042.10H1275.24V1159.70H1276.37V1218.50H1277.49V1218.50H1278.61V1126.10H1279.73V1042.10H1280.85V1042.10H1281.97V1092.50H1283.10V1210.10H1284.22V1142.90H1285.34V1159.70H1286.46V1235.30H1287.58V1235.30H1288.70V1168.10H1289.83V1201.70H1290.95V1201.70H1292.07V1218.50H1293.19V1168.10H1294.31V1193.30H1295.43V1042.10H1296.56V899.30H1297.68V899.30H1298.80V899.30H1299.92V1058.90H1301.04V1058.90H1302.17V1075.70H1303.29V1025.30H1304.41V1025.30H1305.53V1075.70H1306.65V1109.30H1307.77V1109.30H1308.90V1075.70H1310.02V1075.70H1311.14V1075.70H1312.26V1176.50H1313.38V1260.50H1314.50V1260.50H1315.63V1159.70H1316.75V1260.50H1317.87V1260.50H1318.99V1201.70H1320.11V1100.90H1321.23V1142.90H1322.36V1142.90H1323.48V1235.30H1324.60V1117.70H1325.72V1117.70H1326.84V1008.50H1327.96V1025.30H1329.09V1025.30H1330.21V1134.50H1331.33V1168.10H1332.45V1168.10H1333.57V1184.90H1334.70V1151.30H1335.82V1210.10H1336.94V1109.30H1338.06V1176.50H1339.18V1176.50H1340.30V1159.70H1341.43V1159.70H1342.55V1159.70H1343.67V1193.30H1344.79V1134.50H1345.91V1134.50H1347.03V1151.30H1348.16V1159.70H1349.28V1184.90H1350.40V1193.30H1351.52V1193.30H1352.64V1319.3ZM1527.63,1319.3V1294.10H1528.75V1294.10H1529.88V1294.10H1531.00V1294.10H1532.12V1294.10H1533.24V1294.10H1534.36V1294.10H1535.48V1294.10H1536.61V1285.70H1537.73V1294.10H1538.85V1294.10H1539.97V1294.10H1541.09V1294.10H1542.21V1260.50H1543.34V1243.70H1544.46V1268.90H1545.58V1268.90H1546.70V1151.30H1547.82V1151.30H1548.94V966.50H1550.07V1016.90H1551.19V1016.90H1552.31V1058.90H1553.43V1134.50H1554.55V1201.70H1555.68V1176.50H1556.80V1075.70H1557.92V1109.30H1559.04V1151.30H1560.16V1134.50H1561.28V1134.50H1562.41V1142.90H1563.53V1243.70H1564.65V1193.30H1565.77V1151.30H1566.89V1025.30H1568.01V1025.30H1569.14V1033.70H1570.26V1134.50H1571.38V1134.50H1572.50V1201.70H1573.62V1058.90H1574.74V1058.90H1575.87V1126.10H1576.99V1184.90H1578.11V1235.30H1579.23V1193.30H1580.35V1260.50H1581.47V1268.90H1582.60V1268.90H1583.72V1243.70H1584.84V1268.90H1585.96V1268.90H1587.08V1243.70H1588.21V1294.10H1589.33V1294.10H1590.45V1302.50H1591.57V1294.10H1592.69V1294.10H1593.81V1277.30H1594.94V1184.90H1596.06V1294.10H1597.18V1277.30H1598.30V1268.90H1599.42V1260.50H1600.54V1134.50H1601.67V1142.90H1602.79V1142.90H1603.91V1151.30H1605.03V1151.30H1606.15V1151.30H1607.27V1176.50H1608.40V1184.90H1609.52V1218.50H1610.64V1226.90H1611.76V1184.90H1612.88V1218.50H1614.00V1184.90H1615.13V1168.10H1616.25V1168.10H1617.37V1168.10H1618.49V1092.50H1619.61V1092.50H1620.74V1050.50H1621.86V1201.70H1622.98V1302.50H1624.10V1302.50H1625.22V1285.70H1626.34V1302.50H1627.47V1302.50H1628.59V1294.10H1629.71V1252.10H1630.83V1252.10H1631.95V1252.10H1633.07V1268.90H1634.20V1268.90H1635.32V1226.90H1636.44V1252.10H1637.56V1252.10H1638.68V1268.90H1639.80V1268.90H1640.93V1268.90H1642.05V1268.90H1643.17V1268.90H1644.29V1268.90H1645.41V1100.90H1646.53V1092.50H1647.66V1092.50H1648.78V1142.90H1649.90V1193.30H1651.02V1193.30H1652.14V1193.30H1653.27V1201.70H1654.39V1201.70H1655.51V1176.50H1656.63V1193.30H1657.75V1193.30H1658.87V1193.30H1660.00V1201.70H1661.12V1201.70H1662.24V1201.70H1663.36V1117.70H1664.48V1193.30H1665.60V1117.70H1666.73V1184.90H1667.85V1201.70H1668.97V1176.50H1670.09V1193.30H1671.21V1235.30H1672.33V1218.50H1673.46V1235.30H1674.58V1294.10H1675.70V1319.3ZM1850.69,1319.3V1302.50H1851.81V1294.10H1852.93V1294.10H1854.05V1294.10H1855.18V1302.50H1856.30V1294.10H1857.42V1294.10H1858.54V1294.10H1859.66V1302.50H1860.78V1294.10H1861.91V1294.10H1863.03V1294.10H1864.15V1294.10H1865.27V1294.10H1866.39V1294.10H1867.52V1277.30H1868.64V1117.70H1869.76V1184.90H1870.88V1168.10H1872.00V1184.90H1873.12V1025.30H1874.25V1033.70H1875.37V1033.70H1876.49V1058.90H1877.61V1184.90H1878.73V1184.90H1879.85V1226.90H1880.98V1176.50H1882.10V1176.50H1883.22V1193.30H1884.34V1016.90H1885.46V1016.90H1886.58V1016.90H1887.71V1100.90H1888.83V1168.10H1889.95V1117.70H1891.07V1235.30H1892.19V1084.10H1893.31V1084.10H1894.44V1184.90H1895.56V1193.30H1896.68V1193.30H1897.80V1042.10H1898.92V1184.90H1900.05V1159.70H1901.17V1050.50H1902.29V1050.50H1903.41V1050.50H1904.53V1008.50H1905.65V1058.90H1906.78V1058.90H1907.90V1117.70H1909.02V1218.50H1910.14V1184.90H1911.26V1201.70H1912.38V1235.30H1913.51V1243.70H1914.63V1176.50H1915.75V1016.90H1916.87V1016.90H1917.99V1109.30H1919.11V1268.90H1920.24V1243.70H1921.36V1151.30H1922.48V1201.70H1923.60V1184.90H1924.72V1193.30H1925.84V1210.10H1926.97V1210.10H1928.09V1201.70H1929.21V1168.10H1930.33V1168.10H1931.45V1117.70H1932.58V1159.70H1933.70V1201.70H1934.82V1159.70H1935.94V1218.50H1937.06V1226.90H1938.18V1184.90H1939.31V1184.90H1940.43V1176.50H1941.55V1176.50H1942.67V1126.10H1943.79V1042.10H1944.91V1042.10H1946.04V1201.70H1947.16V1201.70H1948.28V1184.90H1949.40V1184.90H1950.52V1067.30H1951.64V1067.30H1952.77V1042.10H1953.89V1134.50H1955.01V1075.70H1956.13V1168.10H1957.25V1201.70H1958.37V1201.70H1959.50V1268.90H1960.62V1193.30H1961.74V1193.30H1962.86V1193.30H1963.98V1159.70H1965.11V1159.70H1966.23V1168.10H1967.35V1168.10H1968.47V1168.10H1969.59V1193.30H1970.71V1193.30H1971.84V1193.30H1972.96V1235.30H1974.08V1218.50H1975.20V1193.30H1976.32V1243.70H1977.44V1201.70H1978.57V1201.70H1979.69V1201.70H1980.81V1109.30H1981.93V1117.70H1983.05V1117.70H1984.17V1092.50H1985.30V1151.30H1986.42V1092.50H1987.54V1050.50H1988.66V1058.90H1989.78V1058.90H1990.90V1109.30H1992.03V1159.70H1993.15V1159.70H1994.27V1050.50H1995.39V991.70H1996.51V991.70H1997.64V1058.90H1998.76V1302.50H1999.88V1319.3ZM2173.75,1319.3V1302.50H2174.87V1294.10H2175.99V1302.50H2177.11V1294.10H2178.23V1302.50H2179.35V1302.50H2180.48V1294.10H2181.60V1302.50H2182.72V1294.10H2183.84V1302.50H2184.96V1294.10H2186.09V1302.50H2187.21V1302.50H2188.33V1294.10H2189.45V1226.90H2190.57V1126.10H2191.69V1184.90H2192.82V1100.90H2193.94V1033.70H2195.06V1058.90H2196.18V1134.50H2197.30V1159.70H2198.42V916.10H2199.55V966.50H2200.67V966.50H2201.79V1126.10H2202.91V1058.90H2204.03V1126.10H2205.15V1084.10H2206.28V1184.90H2207.40V1151.30H2208.52V1151.30H2209.64V1184.90H2210.76V1193.30H2211.88V1193.30H2213.01V1126.10H2214.13V1033.70H2215.25V1067.30H2216.37V1142.90H2217.49V1184.90H2218.62V1210.10H2219.74V1168.10H2220.86V1134.50H2221.98V1218.50H2223.10V1201.70H2224.22V1193.30H2225.35V1201.70H2226.47V1168.10H2227.59V1134.50H2228.71V1159.70H2229.83V1218.50H2230.95V1176.50H2232.08V1142.90H2233.20V1218.50H2234.32V1226.90H2235.44V1218.50H2236.56V1210.10H2237.68V1184.90H2238.81V1184.90H2239.93V1168.10H2241.05V1176.50H2242.17V1168.10H2243.29V1193.30H2244.42V1210.10H2245.54V1210.10H2246.66V1226.90H2247.78V1226.90H2248.90V1218.50H2250.02V1168.10H2251.15V1134.50H2252.27V1176.50H2253.39V1176.50H2254.51V1184.90H2255.63V1176.50H2256.75V1184.90H2257.88V1176.50H2259.00V1176.50H2260.12V1159.70H2261.24V1176.50H2262.36V1184.90H2263.48V1201.70H2264.61V1226.90H2265.73V1226.90H2266.85V1226.90H2267.97V1226.90H2269.09V1226.90H2270.21V1193.30H2271.34V1067.30H2272.46V1084.10H2273.58V1033.70H2274.70V1092.50H2275.82V1117.70H2276.95V1176.50H2278.07V1176.50H2279.19V1176.50H2280.31V1176.50H2281.43V1193.30H2282.55V1176.50H2283.68V1176.50H2284.80V1184.90H2285.92V1109.30H2287.04V1016.90H2288.16V1126.10H2289.28V1193.30H2290.41V1210.10H2291.53V1201.70H2292.65V1193.30H2293.77V1201.70H2294.89V1218.50H2296.01V1201.70H2297.14V1226.90H2298.26V1226.90H2299.38V1218.50H2300.50V1210.10H2301.62V1210.10H2302.74V1226.90H2303.87V1226.90H2304.99V1226.90H2306.11V1218.50H2307.23V1193.30H2308.35V1226.90H2309.48V1201.70H2310.60V1159.70H2311.72V1151.30H2312.84V1168.10H2313.96V1176.50H2315.08V1184.90H2316.21V1151.30H2317.33V1218.50H2318.45V1184.90H2319.57V1092.50H2320.69V1193.30H2321.81V1319.3Z" fill="#239173"/>
<path d="M236.53,1319.3V1294.10H237.65V1302.50H238.77V1294.10H239.89V1302.50H241.01V1294.10H242.13V1302.50H243.26V1294.10H244.38V1302.50H245.50V1294.10H246.62V1302.50H247.74V1294.10H248.86V1235.30H249.99V1201.70H251.11V1201.70H252.23V1184.90H253.35V1050.50H254.47V1050.50H255.59V1067.30H256.72V1025.30H257.84V1025.30H258.96V1008.50H260.08V1134.50H261.20V1142.90H262.32V1008.50H263.45V1033.70H264.57V1033.70H265.69V983.30H266.81V991.70H267.93V991.70H269.06V1050.50H270.18V958.10H271.30V899.30H272.42V899.30H273.54V983.30H274.66V1201.70H275.79V1134.50H276.91V1193.30H278.03V1277.30H279.15V1260.50H280.27V1075.70H281.39V1033.70H282.52V1033.70H283.64V1168.10H284.76V1168.10H285.88V1168.10H287.00V1193.30H288.12V1134.50H289.25V1201.70H290.37V1042.10H291.49V1016.90H292.61V1016.90H293.73V932.90H294.85V1000.10H295.98V1000.10H297.10V1033.70H298.22V1168.10H299.34V1168.10H300.46V1252.10H301.59V1210.10H302.71V1210.10H303.83V1117.70H304.95V1176.50H306.07V1126.10H307.19V1117.70H308.32V1134.50H309.44V1134.50H310.56V1159.70H311.68V1193.30H312.80V1193.30H313.92V1193.30H315.05V1193.30H316.17V1193.30H317.29V1193.30H318.41V1168.10H319.53V1193.30H320.65V1193.30H321.78V1134.50H322.90V1042.10H324.02V1042.10H325.14V882.50H326.26V1151.30H327.38V1084.10H328.51V1193.30H329.63V1201.70H330.75V1168.10H331.87V1168.10H332.99V1142.90H334.12V1142.90H335.24V1042.10H336.36V1025.30H337.48V1025.30H338.60V1067.30H339.72V1151.30H340.85V1151.30H341.97V1159.70H343.09V1184.90H344.21V1184.90H345.33V1210.10H346.45V1268.90H347.58V1268.90H348.70V1100.90H349.82V1084.10H350.94V1126.10H352.06V1168.10H353.18V1084.10H354.31V1084.10H355.43V1109.30H356.55V1235.30H357.67V1218.50H358.79V1243.70H359.92V1168.10H361.04V1176.50H362.16V1201.70H363.28V1168.10H364.40V1159.70H365.52V1201.70H366.65V1176.50H367.77V1193.30H368.89V1193.30H370.01V1218.50H371.13V1226.90H372.25V1226.90H373.38V1134.50H374.50V1210.10H375.62V1210.10H376.74V1201.70H377.86V1168.10H378.98V1168.10H380.11V1193.30H381.23V1193.30H382.35V1193.30H383.47V1319.3ZM1204.57,1319.3V1302.50H1205.70V1294.10H1206.82V1294.10H1207.94V1302.50H1209.06V1294.10H1210.18V1294.10H1211.31V1302.50H1212.43V1294.10H1213.55V1294.10H1214.67V1302.50H1215.79V1294.10H1216.91V1294.10H1218.04V1294.10H1219.16V1260.50H1220.28V1058.90H1221.40V1058.90H1222.52V1075.70H1223.64V1084.10H1224.77V1084.10H1225.89V1151.30H1227.01V1218.50H1228.13V1218.50H1229.25V1201.70H1230.37V1235.30H1231.50V1226.90H1232.62V1235.30H1233.74V1193.30H1234.86V1126.10H1235.98V1126.10H1237.10V1193.30H1238.23V1243.70H1239.35V1235.30H1240.47V1117.70H1241.59V1025.30H1242.71V1025.30H1243.84V899.30H1244.96V874.10H1246.08V874.10H1247.20V991.70H1248.32V1226.90H1249.44V1226.90H1250.57V1058.90H1251.69V1025.30H1252.81V1025.30H1253.93V1117.70H1255.05V1193.30H1256.17V1176.50H1257.30V1218.50H1258.42V1142.90H1259.54V1142.90H1260.66V1168.10H1261.78V1050.50H1262.90V1050.50H1264.03V1067.30H1265.15V1176.50H1266.27V1176.50H1267.39V1033.70H1268.51V1025.30H1269.63V1025.30H1270.76V1033.70H1271.88V966.50H1273.00V966.50H1274.12V1042.10H1275.24V1159.70H1276.37V1218.50H1277.49V1218.50H1278.61V1126.10H1279.73V1042.10H1280.85V1042.10H1281.97V1092.50H1283.10V1210.10H1284.22V1142.90H1285.34V1159.70H1286.46V1235.30H1287.58V1235.30H1288.70V1168.10H1289.83V1201.70H1290.95V1201.70H1292.07V1218.50H1293.19V1168.10H1294.31V1193.30H1295.43V1042.10H1296.56V899.30H1297.68V899.30H1298.80V899.30H1299.92V1058.90H1301.04V1058.90H1302.17V1075.70H1303.29V1025.30H1304.41V1025.30H1305.53V1075.70H1306.65V1109.30H1307.77V1109.30H1308.90V1075.70H1310.02V1075.70H1311.14V1075.70H1312.26V1176.50H1313.38V1260.50H1314.50V1260.50H1315.63V1159.70H1316.75V1260.50H1317.87V1260.50H1318.99V1201.70H1320.11V1100.90H1321.23V1142.90H1322.36V1142.90H1323.48V1235.30H1324.60V1117.70H1325.72V1117.70H1326.84V1008.50H1327.96V1025.30H1329.09V1025.30H1330.21V1134.50H1331.33V1168.10H1332.45V1168.10H1333.57V1184.90H1334.70V1151.30H1335.82V1210.10H1336.94V1109.30H1338.06V1176.50H1339.18V1176.50H1340.30V1159.70H1341.43V1159.70H1342.55V1159.70H1343.67V1193.30H1344.79V1134.50H1345.91V1134.50H1347.03V1151.30H1348.16V1159.70H1349.28V1184.90H1350.40V1193.30H1351.52V1193.30H1352.64V1319.3ZM1527.63,1319.3V1294.10H1528.75V1294.10H1529.88V1294.10H1531.00V1294.10H1532.12V1294.10H1533.24V1294.10H1534.36V1294.10H1535.48V1294.10H1536.61V1285.70H1537.73V1294.10H1538.85V1294.10H1539.97V1294.10H1541.09V1294.10H1542.21V1260.50H1543.34V1243.70H1544.46V1268.90H1545.58V1268.90H1546.70V1151.30H1547.82V1151.30H1548.94V966.50H1550.07V1016.90H1551.19V1016.90H1552.31V1058.90H1553.43V1134.50H1554.55V1201.70H1555.68V1176.50H1556.80V1075.70H1557.92V1109.30H1559.04V1151.30H1560.16V1134.50H1561.28V1134.50H1562.41V1142.90H1563.53V1243.70H1564.65V1193.30H1565.77V1151.30H1566.89V1025.30H1568.01V1025.30H1569.14V1033.70H1570.26V1134.50H1571.38V1134.50H1572.50V1201.70H1573.62V1058.90H1574.74V1058.90H1575.87V1126.10H1576.99V1184.90H1578.11V1235.30H1579.23V1193.30H1580.35V1260.50H1581.47V1268.90H1582.60V1268.90H1583.72V1243.70H1584.84V1268.90H1585.96V1268.90H1587.08V1243.70H1588.21V1294.10H1589.33V1294.10H1590.45V1302.50H1591.57V1294.10H1592.69V1294.10H1593.81V1277.30H1594.94V1184.90H1596.06V1294.10H1597.18V1277.30H1598.30V1268.90H1599.42V1260.50H1600.54V1134.50H1601.67V1142.90H1602.79V1142.90H1603.91V1151.30H1605.03V1151.30H1606.15V1151.30H1607.27V1176.50H1608.40V1184.90H1609.52V1218.50H1610.64V1226.90H1611.76V1184.90H1612.88V1218.50H1614.00V1184.90H1615.13V1168.10H1616.25V1168.10H1617.37V1168.10H1618.49V1092.50H1619.61V1092.50H1620.74V1050.50H1621.86V1201.70H1622.98V1302.50H1624.10V1302.50H1625.22V1285.70H1626.34V1302.50H1627.47V1302.50H1628.59V1294.10H1629.71V1252.10H1630.83V1252.10H1631.95V1252.10H1633.07V1268.90H1634.20V1268.90H1635.32V1226.90H1636.44V1252.10H1637.56V1252.10H1638.68V1268.90H1639.80V1268.90H1640.93V1268.90H1642.05V1268.90H1643.17V1268.90H1644.29V1268.90H1645.41V1100.90H1646.53V1092.50H1647.66V1092.50H1648.78V1142.90H1649.90V1193.30H1651.02V1193.30H1652.14V1193.30H1653.27V1201.70H1654.39V1201.70H1655.51V1176.50H1656.63V1193.30H1657.75V1193.30H1658.87V1193.30H1660.00V1201.70H1661.12V1201.70H1662.24V1201.70H1663.36V1117.70H1664.48V1193.30H1665.60V1117.70H1666.73V1184.90H1667.85V1201.70H1668.97V1176.50H1670.09V1193.30H1671.21V1235.30H1672.33V1218.50H1673.46V1235.30H1674.58V1294.10H1675.70V1319.3ZM1850.69,1319.3V1302.50H1851.81V1294.10H1852.93V1294.10H1854.05V1294.10H1855.18V1302.50H1856.30V1294.10H1857.42V1294.10H1858.54V1294.10H1859.66V1302.50H1860.78V1294.10H1861.91V1294.10H1863.03V1294.10H1864.15V1294.10H1865.27V1294.10H1866.39V1294.10H1867.52V1277.30H1868.64V1117.70H1869.76V1184.90H1870.88V1168.10H1872.00V1184.90H1873.12V1025.30H1874.25V1033.70H1875.37V1033.70H1876.49V1058.90H1877.61V1184.90H1878.73V1184.90H1879.85V1226.90H1880.98V1176.50H1882.10V1176.50H1883.22V1193.30H1884.34V1016.90H1885.46V1016.90H1886.58V1016.90H1887.71V1100.90H1888.83V1168.10H1889.95V1117.70H1891.07V1235.30H1892.19V1084.10H1893.31V1084.10H1894.44V1184.90H1895.56V1193.30H1896.68V1193.30H1897.80V1042.10H1898.92V1184.90H1900.05V1159.70H1901.17V1050.50H1902.29V1050.50H1903.41V1050.50H1904.53V1008.50H1905.65V1058.90H1906.78V1058.90H1907.90V1117.70H1909.02V1218.50H1910.14V1184.90H1911.26V1201.70H1912.38V1235.30H1913.51V1243.70H1914.63V1176.50H1915.75V1016.90H1916.87V1016.90H1917.99V1109.30H1919.11V1268.90H1920.24V1243.70H1921.36V1151.30H1922.48V1201.70H1923.60V1184.90H1924.72V1193.30H1925.84V1210.10H1926.97V1210.10H1928.09V1201.70H1929.21V1168.10H1930.33V1168.10H1931.45V1117.70H1932.58V1159.70H1933.70V1201.70H1934.82V1159.70H1935.94V1218.50H1937.06V1226.90H1938.18V1184.90H1939.31V1184.90H1940.43V1176.50H1941.55V1176.50H1942.67V1126.10H1943.79V1042.10H1944.91V1042.10H1946.04V1201.70H1947.16V1201.70H1948.28V1184.90H1949.40V1184.90H1950.52V1067.30H1951.64V1067.30H1952.77V1042.10H1953.89V1134.50H1955.01V1075.70H1956.13V1168.10H1957.25V1201.70H1958.37V1201.70H1959.50V1268.90H1960.62V1193.30H1961.74V1193.30H1962.86V1193.30H1963.98V1159.70H1965.11V1159.70H1966.23V1168.10H1967.35V1168.10H1968.47V1168.10H1969.59V1193.30H1970.71V1193.30H1971.84V1193.30H1972.96V1235.30H1974.08V1218.50H1975.20V1193.30H1976.32V1243.70H1977.44V1201.70H1978.57V1201.70H1979.69V1201.70H1980.81V1109.30H1981.93V1117.70H1983.05V1117.70H1984.17V1092.50H1985.30V1151.30H1986.42V1092.50H1987.54V1050.50H1988.66V1058.90H1989.78V1058.90H1990.90V1109.30H1992.03V1159.70H1993.15V1159.70H1994.27V1050.50H1995.39V991.70H1996.51V991.70H1997.64V1058.90H1998.76V1302.50H1999.88V1319.3ZM2173.75,1319.3V1302.50H2174.87V1294.10H2175.99V1302.50H2177.11V1294.10H2178.23V1302.50H2179.35V1302.50H2180.48V1294.10H2181.60V1302.50H2182.72V1294.10H2183.84V1302.50H2184.96V1294.10H2186.09V1302.50H2187.21V1302.50H2188.33V1294.10H2189.45V1226.90H2190.57V1126.10H2191.69V1184.90H2192.82V1100.90H2193.94V1033.70H2195.06V1058.90H2196.18V1134.50H2197.30V1159.70H2198.42V916.10H2199.55V966.50H2200.67V966.50H2201.79V1126.10H2202.91V1058.90H2204.03V1126.10H2205.15V1084.10H2206.28V1184.90H2207.40V1151.30H2208.52V1151.30H2209.64V1184.90H2210.76V1193.30H2211.88V1193.30H2213.01V1126.10H2214.13V1033.70H2215.25V1067.30H2216.37V1142.90H2217.49V1184.90H2218.62V1210.10H2219.74V1168.10H2220.86V1134.50H2221.98V1218.50H2223.10V1201.70H2224.22V1193.30H2225.35V1201.70H2226.47V1168.10H2227.59V1134.50H2228.71V1159.70H2229.83V1218.50H2230.95V1176.50H2232.08V1142.90H2233.20V1218.50H2234.32V1226.90H2235.44V1218.50H2236.56V1210.10H2237.68V1184.90H2238.81V1184.90H2239.93V1168.10H2241.05V1176.50H2242.17V1168.10H2243.29V1193.30H2244.42V1210.10H2245.54V1210.10H2246.66V1226.90H2247.78V1226.90H2248.90V1218.50H2250.02V1168.10H2251.15V1134.50H2252.27V1176.50H2253.39V1176.50H2254.51V1184.90H2255.63V1176.50H2256.75V1184.90H2257.88V1176.50H2259.00V1176.50H2260.12V1159.70H2261.24V1176.50H2262.36V1184.90H2263.48V1201.70H2264.61V1226.90H2265.73V1226.90H2266.85V1226.90H2267.97V1226.90H2269.09V1226.90H2270.21V1193.30H2271.34V1067.30H2272.46V1084.10H2273.58V1033.70H2274.70V1092.50H2275.82V1117.70H2276.95V1176.50H2278.07V1176.50H2279.19V1176.50H2280.31V1176.50H2281.43V1193.30H2282.55V1176.50H2283.68V1176.50H2284.80V1184.90H2285.92V1109.30H2287.04V1016.90H2288.16V1126.10H2289.28V1193.30H2290.41V1210.10H2291.53V1201.70H2292.65V1193.30H2293.77V1201.70H2294.89V1218.50H2296.01V1201.70H2297.14V1226.90H2298.26V1226.90H2299.38V1218.50H2300.50V1210.10H2301.62V1210.10H2302.74V1226.90H2303.87V1226.90H2304.99V1226.90H2306.11V1218.50H2307.23V1193.30H2308.35V1226.90H2309.48V1201.70H2310.60V1159.70H2311.72V1151.30H2312.84V1168.10H2313.96V1176.50H2315.08V1184.90H2316.21V1151.30H2317.33V1218.50H2318.45V1184.90H2319.57V1092.50H2320.69V1193.30H2321.81V1319.3Z" fill="url(#stripes)"/>
<line x1="155" y1="815.3" x2="155" y2="1320.3" stroke="#6a6a6a" stroke-width="2"/>
<line x1="155.2" y1="1319.8" x2="2416.6" y2="1319.8" stroke="#555" stroke-width="1.8"/>
<line x1="155.20" y1="1321.3" x2="155.20" y2="1330.3" stroke="#aaa" stroke-width="1"/>
<line x1="478.26" y1="1321.3" x2="478.26" y2="1330.3" stroke="#aaa" stroke-width="1"/>
<line x1="801.31" y1="1321.3" x2="801.31" y2="1330.3" stroke="#aaa" stroke-width="1"/>
<line x1="1124.37" y1="1321.3" x2="1124.37" y2="1330.3" stroke="#aaa" stroke-width="1"/>
<line x1="1447.43" y1="1321.3" x2="1447.43" y2="1330.3" stroke="#aaa" stroke-width="1"/>
<line x1="1770.49" y1="1321.3" x2="1770.49" y2="1330.3" stroke="#aaa" stroke-width="1"/>
<line x1="2093.54" y1="1321.3" x2="2093.54" y2="1330.3" stroke="#aaa" stroke-width="1"/>
<line x1="2416.60" y1="1321.3" x2="2416.60" y2="1330.3" stroke="#aaa" stroke-width="1"/>
<text x="155.20" y="1357" font-size="21" text-anchor="middle" fill="#111" textLength="74" lengthAdjust="spacingAndGlyphs">ven. 10</text>
<text x="478.26" y="1357" font-size="21" text-anchor="middle" fill="#111" textLength="75" lengthAdjust="spacingAndGlyphs">sam. 11</text>
<text x="801.31" y="1357" font-size="21" text-anchor="middle" fill="#111" textLength="75" lengthAdjust="spacingAndGlyphs">dim. 12</text>
<text x="1124.37" y="1357" font-size="21" text-anchor="middle" fill="#111" textLength="75" lengthAdjust="spacingAndGlyphs">lun. 13</text>
<text x="1447.43" y="1357" font-size="21" text-anchor="middle" fill="#111" textLength="75" lengthAdjust="spacingAndGlyphs">mar. 14</text>
<text x="1770.49" y="1357" font-size="21" text-anchor="middle" fill="#111" textLength="75" lengthAdjust="spacingAndGlyphs">mer. 15</text>
<text x="2093.54" y="1357" font-size="21" text-anchor="middle" fill="#111" textLength="75" lengthAdjust="spacingAndGlyphs">jeu. 16</text>
<text transform="translate(133,1326.5) scale(1.1,1)" x="0" y="0" font-size="19.5" text-anchor="end" font-weight="400" fill="#3a3a3a" stroke="#3a3a3a" stroke-width="0.2"  xml:space="preserve">0</text>
<text transform="translate(133,1242.5) scale(1.1,1)" x="0" y="0" font-size="19.5" text-anchor="end" font-weight="400" fill="#3a3a3a" stroke="#3a3a3a" stroke-width="0.2"  xml:space="preserve">10</text>
<text transform="translate(133,1158.5) scale(1.1,1)" x="0" y="0" font-size="19.5" text-anchor="end" font-weight="400" fill="#3a3a3a" stroke="#3a3a3a" stroke-width="0.2"  xml:space="preserve">20</text>
<text transform="translate(133,1074.5) scale(1.1,1)" x="0" y="0" font-size="19.5" text-anchor="end" font-weight="400" fill="#3a3a3a" stroke="#3a3a3a" stroke-width="0.2"  xml:space="preserve">30</text>
<text transform="translate(133,990.5) scale(1.1,1)" x="0" y="0" font-size="19.5" text-anchor="end" font-weight="400" fill="#3a3a3a" stroke="#3a3a3a" stroke-width="0.2"  xml:space="preserve">40</text>
<text transform="translate(133,906.5) scale(1.1,1)" x="0" y="0" font-size="19.5" text-anchor="end" font-weight="400" fill="#3a3a3a" stroke="#3a3a3a" stroke-width="0.2"  xml:space="preserve">50</text>
<text transform="translate(133,822.5) scale(1.1,1)" x="0" y="0" font-size="19.5" text-anchor="end" font-weight="400" fill="#3a3a3a" stroke="#3a3a3a" stroke-width="0.2"  xml:space="preserve">60</text>
<text x="0" y="0" font-size="23" fill="#333" transform="translate(86,1067) rotate(-90)" text-anchor="middle" textLength="30" lengthAdjust="spacingAndGlyphs">kW</text>
<rect x="2396" y="66" width="12" height="34" fill="#000" opacity="0.55" filter="url(#blur4)"/>
<path d="M1990,50 H2406 V91 Q2406,98 2399,98 H1990 Z" fill="#fff"/>
<text x="2198" y="88.5" font-size="24" font-weight="700" text-anchor="middle" fill="#111" textLength="172" lengthAdjust="spacingAndGlyphs">LHB-site-L550</text>
<rect x="1991.75" y="108.75" width="411.5" height="56.5" rx="10" ry="10" fill="#fff" stroke="#7a7a7a" stroke-width="3.5"/>
<text x="2207.5" y="148.0" font-size="29" text-anchor="middle" fill="#111" stroke="#111" stroke-width="0.3" textLength="311" lengthAdjust="spacingAndGlyphs" xml:space="preserve">Consommation: 218 kWh</text>
<rect x="1991.75" y="178.75" width="411.5" height="56.5" rx="10" ry="10" fill="#fff" stroke="#7a7a7a" stroke-width="3.5"/>
<text x="2208.0" y="218.0" font-size="29" text-anchor="middle" fill="#111" stroke="#111" stroke-width="0.3" textLength="187" lengthAdjust="spacingAndGlyphs" xml:space="preserve">P Max :  48 kW</text>
<rect x="1991.75" y="247.75" width="411.5" height="57.5" rx="10" ry="10" fill="#fff" stroke="#7a7a7a" stroke-width="3.5"/>
<text x="2208.0" y="287.5" font-size="29" text-anchor="middle" fill="#111" stroke="#111" stroke-width="0.3" textLength="158" lengthAdjust="spacingAndGlyphs" xml:space="preserve">P min : 2 kW</text>
<rect x="561.75" y="805.75" width="411.5" height="58.5" rx="10" ry="10" fill="#fff" stroke="#7a7a7a" stroke-width="3.5"/>
<text x="777.5" y="846.0" font-size="29" text-anchor="middle" fill="#111" stroke="#111" stroke-width="0.3" textLength="335" lengthAdjust="spacingAndGlyphs" xml:space="preserve">Consommation: 1 276 kWh</text>
<rect x="1099.75" y="805.75" width="411.5" height="58.5" rx="10" ry="10" fill="#fff" stroke="#7a7a7a" stroke-width="3.5"/>
<text x="1316.0" y="846.0" font-size="29" text-anchor="middle" fill="#111" stroke="#111" stroke-width="0.3" textLength="189" lengthAdjust="spacingAndGlyphs" xml:space="preserve">P Max :  53 kW</text>
<rect x="1609.75" y="805.75" width="411.5" height="58.5" rx="10" ry="10" fill="#fff" stroke="#7a7a7a" stroke-width="3.5"/>
<text x="1826.0" y="846.0" font-size="29" text-anchor="middle" fill="#111" stroke="#111" stroke-width="0.3" textLength="160" lengthAdjust="spacingAndGlyphs" xml:space="preserve">P min : 2 kW</text>
<rect x="1048" y="543" width="522" height="69" rx="9" ry="9" fill="#fff" fill-opacity="0.92"/>
<text x="1313.5" y="589" font-size="30" font-weight="700" text-anchor="middle" fill="#0a0f0d" textLength="284" lengthAdjust="spacingAndGlyphs">jeudi 16 avril 2026</text>
<rect x="177" y="49" width="481" height="78" fill="#0b0b18"/>
<defs><clipPath id="ecoTop"><rect x="180" y="60" width="95" height="34"/></clipPath><clipPath id="ecoBot"><rect x="180" y="94" width="95" height="25"/></clipPath></defs>
<g stroke="#00e9bd" clip-path="url(#ecoTop)"><g fill="none" stroke-width="7.4" stroke-linecap="round"><path d="M193,94.6 H210.95 A9.45,11.8 0 1 0 208.7,102.2"/><path d="M236.3,87 A8.8,11.8 0 1 0 236.3,102.2"/><ellipse cx="257" cy="94.6" rx="9.9" ry="11.8"/></g></g>
<g stroke="#00bf9c" clip-path="url(#ecoBot)"><g fill="none" stroke-width="7.4" stroke-linecap="round"><path d="M193,94.6 H210.95 A9.45,11.8 0 1 0 208.7,102.2"/><path d="M236.3,87 A8.8,11.8 0 1 0 236.3,102.2"/><ellipse cx="257" cy="94.6" rx="9.9" ry="11.8"/></g></g>
<path d="M198.5,73.5 L204.5,71" stroke="#00e9bd" stroke-width="5" stroke-linecap="round"/>
<g fill="none" stroke="#fff" stroke-width="7.2" stroke-linecap="round" stroke-linejoin="round"><path d="M275.5,88.5 L283,107 L291.5,82 L299.5,107 L313.5,67.5"/><path d="M334.8,88 V107"/><ellipse cx="325.2" cy="95.8" rx="9.6" ry="10.6"/><path d="M346.2,73.5 V99 Q346.2,107.5 352,107.5"/><path d="M361.6,73.5 V99 Q361.6,107.5 368,107.5"/><path d="M340.5,81.5 H371.5"/></g>
<ellipse cx="433.8" cy="88.9" rx="25.7" ry="28" fill="#00b4e0"/>
<text x="434.5" y="96.7" font-size="23" fill="#fff" text-anchor="middle" textLength="32" lengthAdjust="spacingAndGlyphs" stroke="#00b4e0" stroke-width="0.6">Rte</text>
<rect x="421" y="88.6" width="20" height="1.4" fill="#fff"/>
<text x="468.3" y="79.0" font-size="12.3" font-weight="400" fill="#00a3d9" stroke="#00a3d9" stroke-width="0.35" textLength="48" lengthAdjust="spacingAndGlyphs">Le réseau</text>
<text x="468.3" y="92.0" font-size="12.3" font-weight="400" fill="#00a3d9" stroke="#00a3d9" stroke-width="0.35" textLength="61" lengthAdjust="spacingAndGlyphs">de transport</text>
<text x="468.3" y="105.0" font-size="12.3" font-weight="400" fill="#00a3d9" stroke="#00a3d9" stroke-width="0.35" textLength="57" lengthAdjust="spacingAndGlyphs">d’électricité</text>
<rect x="546.5" y="61.3" width="100.4" height="55.5" fill="#fff"/>
<rect x="553.2" y="68.7" width="7.8" height="6.7" fill="#2a3d8f"/><rect x="561" y="68.7" width="2" height="6.7" fill="#ddd"/><rect x="563.5" y="68.7" width="7.8" height="6.7" fill="#e1000f"/>
<text x="552.7" y="84.7" font-size="7.6" font-weight="700" fill="#222" textLength="44" lengthAdjust="spacingAndGlyphs">RÉPUBLIQUE</text>
<text x="552.7" y="93" font-size="7.6" font-weight="700" fill="#222" textLength="41" lengthAdjust="spacingAndGlyphs">FRANÇAISE</text>
<text x="553" y="100.5" font-size="4" font-style="italic" fill="#777">Liberté</text>
<text x="553" y="105.1" font-size="4" font-style="italic" fill="#777">Égalité</text>
<text x="553" y="109.7" font-size="4" font-style="italic" fill="#777">Fraternité</text>
<rect x="607" y="66.6" width="35" height="44.6" fill="none" stroke="#3b6fc0" stroke-width="1"/>
<text x="624.5" y="75.6" font-size="6.2" font-weight="700" fill="#e2231a" text-anchor="middle" textLength="25" lengthAdjust="spacingAndGlyphs">ADEME</text>
<circle cx="624.1" cy="86.8" r="8.6" fill="#1f4fa3"/>
<path d="M619,82 q3,-2 5,1 q2,4 -1,6 q-2,2 0,4" stroke="#9fb8e0" stroke-width="1.2" fill="none"/>
<rect x="612" y="100.0" width="25" height="1.9" fill="#e9635c"/>
<rect x="612" y="103.3" width="25" height="1.9" fill="#e9635c"/>
<rect x="612" y="106.6" width="25" height="1.9" fill="#e9635c"/>
<rect x="169" y="135.2" width="491.8" height="123.4" fill="#d8d8d8"/>
<rect x="172.6" y="138.6" width="116.9" height="49.7" fill="#f2f2f2"/>
<rect x="172.6" y="194.3" width="116.9" height="58.5" fill="#fff"/>
<clipPath id="tc0"><rect x="180" y="195" width="106.0" height="54.5"/></clipPath>
<g clip-path="url(#tc0)">
<rect x="180" y="195" width="106.0" height="54.5" fill="url(#tile)"/>
<polygon points="179.00,193.00 180.00,193.00 184.46,193.00 188.92,193.00 193.38,193.00 197.83,196.50 202.29,200.04 206.75,203.28 211.21,206.21 215.67,208.84 220.12,211.17 224.58,213.19 229.04,214.92 233.50,216.34 237.96,217.46 242.42,218.27 246.88,218.78 251.33,218.99 255.79,218.90 260.25,218.51 264.71,217.81 269.17,216.81 273.62,215.51 278.08,213.90 282.54,212.00 287.00,209.79 287.00,193.00" fill="#00f2c9"/>
<polygon points="179.00,193.00 180.00,193.00 184.46,193.00 188.92,193.00 193.38,193.00 197.83,193.00 202.29,193.00 206.75,194.41 211.21,196.44 215.67,198.26 220.12,199.88 224.58,201.28 229.04,202.47 233.50,203.46 237.96,204.23 242.42,204.80 246.88,205.15 251.33,205.30 255.79,205.23 260.25,204.96 264.71,204.48 269.17,203.78 273.62,202.88 278.08,201.77 282.54,200.45 287.00,198.92 287.00,193.00" fill="#00a48b"/>
</g>
<rect x="294.4" y="138.6" width="116.9" height="49.7" fill="#f2f2f2"/>
<rect x="294.4" y="194.3" width="116.9" height="58.5" fill="#fff"/>
<clipPath id="tc1"><rect x="302" y="196" width="106.0" height="55.7"/></clipPath>
<g clip-path="url(#tc1)">
<rect x="302" y="196" width="106.0" height="55.7" fill="url(#tile)"/>
<polygon points="301.00,194.00 302.00,194.00 306.46,194.00 310.92,194.00 315.38,194.00 319.83,197.50 324.29,201.04 328.75,204.28 333.21,207.21 337.67,209.84 342.12,212.17 346.58,214.19 351.04,215.92 355.50,217.34 359.96,218.46 364.42,219.27 368.88,219.78 373.33,219.99 377.79,219.90 382.25,219.51 386.71,218.81 391.17,217.81 395.62,216.51 400.08,214.90 404.54,213.00 409.00,210.79 409.00,194.00" fill="#00f2c9"/>
<polygon points="301.00,194.00 302.00,194.00 306.46,194.00 310.92,194.00 315.38,194.00 319.83,194.00 324.29,194.00 328.75,195.41 333.21,197.44 337.67,199.26 342.12,200.88 346.58,202.28 351.04,203.47 355.50,204.46 359.96,205.23 364.42,205.80 368.88,206.15 373.33,206.30 377.79,206.23 382.25,205.96 386.71,205.48 391.17,204.78 395.62,203.88 400.08,202.77 404.54,201.45 409.00,199.92 409.00,194.00" fill="#00a48b"/>
</g>
<rect x="416.9" y="138.6" width="116.1" height="49.7" fill="#f2f2f2"/>
<rect x="416.9" y="194.3" width="116.1" height="58.5" fill="#fff"/>
<clipPath id="tc2"><rect x="423.9" y="196" width="106.1" height="55.7"/></clipPath>
<g clip-path="url(#tc2)">
<rect x="423.9" y="196" width="106.1" height="55.7" fill="url(#tile)"/>
<polygon points="422.90,194.00 423.90,194.00 428.36,194.00 432.82,194.00 437.29,194.00 441.75,197.50 446.21,201.04 450.67,204.28 455.14,207.21 459.60,209.84 464.06,212.17 468.52,214.19 472.99,215.92 477.45,217.34 481.91,218.46 486.38,219.27 490.84,219.78 495.30,219.99 499.76,219.90 504.23,219.51 508.69,218.81 513.15,217.81 517.61,216.51 522.08,214.90 526.54,213.00 531.00,210.79 531.00,194.00" fill="#00f2c9"/>
<polygon points="422.90,194.00 423.90,194.00 428.36,194.00 432.82,194.00 437.29,194.00 441.75,194.00 446.21,194.00 450.67,195.41 455.14,197.44 459.60,199.26 464.06,200.88 468.52,202.28 472.99,203.47 477.45,204.46 481.91,205.23 486.38,205.80 490.84,206.15 495.30,206.30 499.76,206.23 504.23,205.96 508.69,205.48 513.15,204.78 517.61,203.88 522.08,202.77 526.54,201.45 531.00,199.92 531.00,194.00" fill="#00a48b"/>
</g>
<rect x="538.4" y="138.6" width="116.8" height="49.7" fill="#f2f2f2"/>
<rect x="538.4" y="194.3" width="116.8" height="58.5" fill="#fff"/>
<clipPath id="tc3"><rect x="543.9" y="196" width="106.0" height="55.7"/></clipPath>
<g clip-path="url(#tc3)">
<rect x="543.9" y="196" width="106.0" height="55.7" fill="url(#tile)"/>
<polygon points="542.90,194.00 543.90,194.00 548.36,194.00 552.82,194.00 557.27,194.00 561.73,197.50 566.19,201.04 570.65,204.28 575.11,207.21 579.57,209.84 584.02,212.17 588.48,214.19 592.94,215.92 597.40,217.34 601.86,218.46 606.32,219.27 610.77,219.78 615.23,219.99 619.69,219.90 624.15,219.51 628.61,218.81 633.07,217.81 637.52,216.51 641.98,214.90 646.44,213.00 650.90,210.79 650.90,194.00" fill="#00f2c9"/>
<polygon points="542.90,194.00 543.90,194.00 548.36,194.00 552.82,194.00 557.27,194.00 561.73,194.00 566.19,194.00 570.65,195.41 575.11,197.44 579.57,199.26 584.02,200.88 588.48,202.28 592.94,203.47 597.40,204.46 601.86,205.23 606.32,205.80 610.77,206.15 615.23,206.30 619.69,206.23 624.15,205.96 628.61,205.48 633.07,204.78 637.52,203.88 641.98,202.77 646.44,201.45 650.90,199.92 650.90,194.00" fill="#00a48b"/>
</g>
<text x="231.7" y="174.4" font-size="32" font-weight="400" fill="#111" text-anchor="middle">J</text>
<text x="321.4" y="174.4" font-size="32" font-weight="400" fill="#111" text-anchor="middle">J</text>
<text x="354.1" y="174.4" font-size="32" font-weight="400" fill="#111" text-anchor="middle">+</text>
<text x="386.0" y="174.4" font-size="32" font-weight="400" fill="#111" text-anchor="middle">1</text>
<text x="443.8" y="174.4" font-size="32" font-weight="400" fill="#111" text-anchor="middle">J</text>
<text x="476.1" y="174.4" font-size="32" font-weight="400" fill="#111" text-anchor="middle">+</text>
<text x="509.0" y="174.4" font-size="32" font-weight="700" fill="#111" text-anchor="middle">2</text>
<text x="565.2" y="174.4" font-size="32" font-weight="400" fill="#111" text-anchor="middle">J</text>
<text x="597.5" y="174.4" font-size="32" font-weight="400" fill="#111" text-anchor="middle">+</text>
<text x="630.0" y="174.4" font-size="32" font-weight="700" fill="#111" text-anchor="middle">3</text>
<rect x="2322" y="1322" width="116" height="58" fill="#fff"/>
<path d="M2362.5,1342.5 A13,14.5 0 1 0 2363.5,1351 H2350.5" fill="none" stroke="#0b6fb9" stroke-width="5.2" stroke-linecap="round"/>
<path d="M2369.5,1346 Q2370,1338.5 2377.5,1338.5 Q2384.5,1339 2384.2,1346 Q2384,1351 2378,1355.5 L2370.5,1362.5 H2386" fill="none" stroke="#0b6fb9" stroke-width="5.2" stroke-linecap="round" stroke-linejoin="round"/>
<path d="M2392,1326 L2385,1338 L2391,1339 L2388.5,1364 L2399.5,1338 L2393,1337 Z" fill="#e85b24"/>
<path d="M2401.0,1339 H2425.0 L2421.0,1344 H2397.0 Z" fill="#f39221"/>
<path d="M2399.5,1348 H2423.5 L2419.5,1353 H2395.5 Z" fill="#f39221"/>
<path d="M2398.0,1357 H2422.0 L2418.0,1362 H2394.0 Z" fill="#f39221"/>
<text x="2394" y="1335" font-size="6.2" font-weight="700" fill="#e85b24" textLength="30" lengthAdjust="spacingAndGlyphs">FRANCE</text>
<rect x="2340" y="1366" width="74" height="1.6" fill="#5d9fd6" opacity="0.7"/>
</svg></body></html>
